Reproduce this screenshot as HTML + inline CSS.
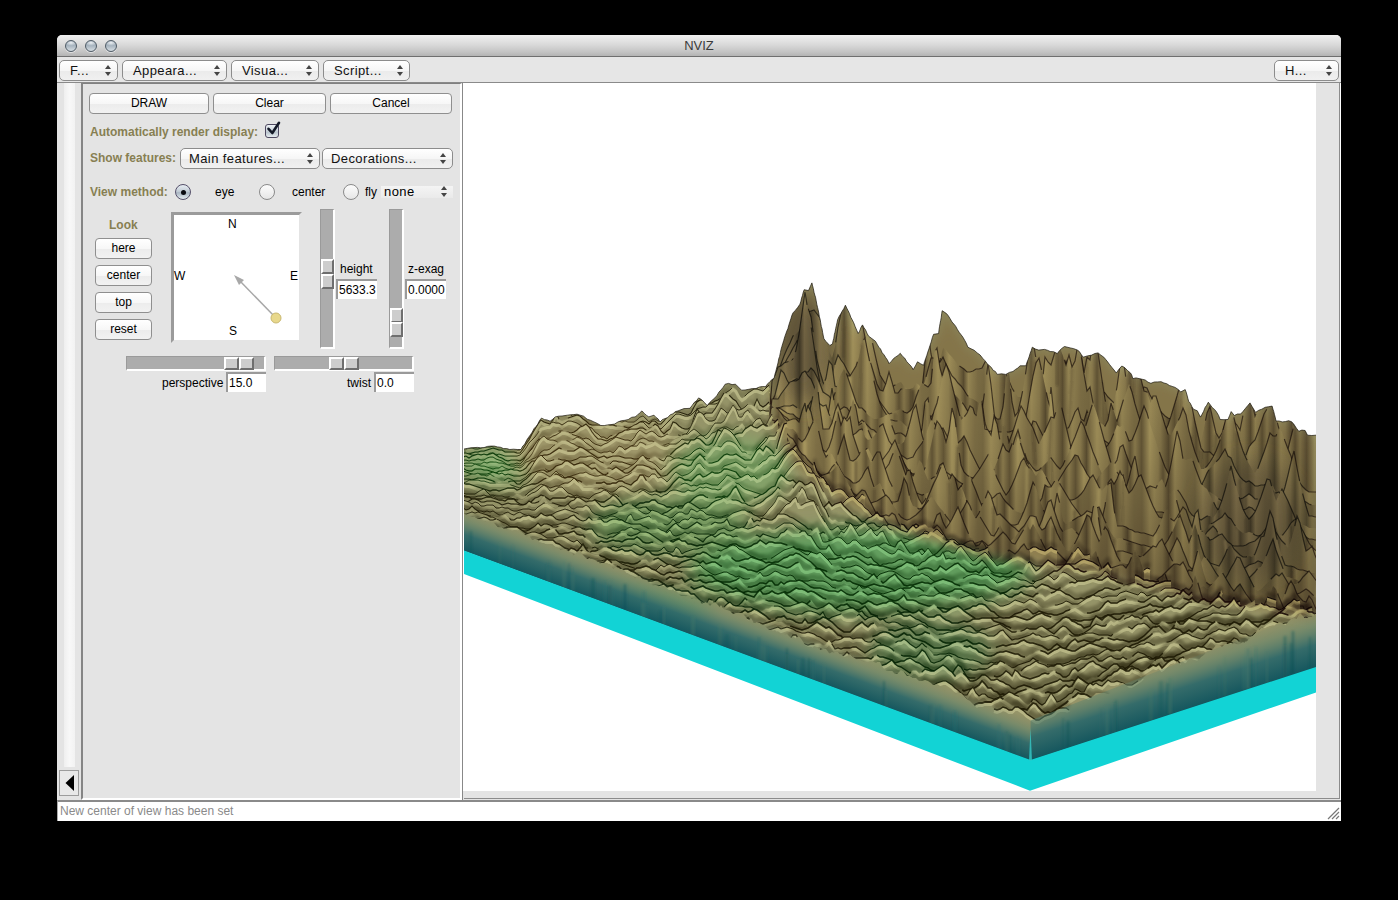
<!DOCTYPE html>
<html><head><meta charset="utf-8">
<style>
*{margin:0;padding:0;box-sizing:border-box}
html,body{width:1398px;height:900px;overflow:hidden;background:#000;font-family:"Liberation Sans",sans-serif}
.a{position:absolute}
#win{left:57px;top:35px;width:1284px;height:786px;background:#e4e4e4;border-radius:5px 5px 0 0}
#title{left:57px;top:35px;width:1284px;height:22px;border-radius:5px 5px 0 0;background:linear-gradient(#f0f0f0,#dadada 45%,#c4c4c4 80%,#b4b4b4);border-bottom:1px solid #6f6f6f}
#title .t{left:0;width:100%;top:3px;text-align:center;font-size:13px;color:#3a3a3a}
.tl{width:12px;height:12px;border-radius:50%;top:5px;background:radial-gradient(ellipse 60% 30% at 50% 18%,#eef2f5 0,rgba(238,242,245,0) 100%),linear-gradient(#8d9caa,#a6b3be 45%,#c9d2d9 85%,#d4dbe0);border:1.5px solid #4f5b66;box-shadow:0 1px 0 rgba(255,255,255,0.5)}
#menubar{left:57px;top:57px;width:1284px;height:26px;background:#e6e6e6;border-bottom:1px solid #8a8a8a}
.mb{height:21px;border:1px solid #8c8c8c;border-radius:5px;background:linear-gradient(#ffffff,#f6f6f6 50%,#ebebeb 52%,#f0f0f0);font-size:13px;color:#111}
.mb span{position:absolute;left:10px;top:2px;letter-spacing:0.4px;white-space:nowrap}
.mb i{position:absolute;right:6px;top:4px;width:0;height:0;border-left:3.5px solid transparent;border-right:3.5px solid transparent;border-bottom:4px solid #444}
.mb b{position:absolute;right:6px;top:11px;width:0;height:0;border-left:3.5px solid transparent;border-right:3.5px solid transparent;border-top:4px solid #444}
.btn{height:21px;border:1px solid #8f8f8f;border-radius:4px;background:linear-gradient(#ffffff,#f7f7f7 50%,#ececec 52%,#f2f2f2);font-size:12px;color:#000;text-align:center;line-height:19px}
.lbl{font-size:12px;font-weight:bold;color:#877f52;white-space:nowrap}
.txt{font-size:12px;color:#000;white-space:nowrap}
.ent{height:20px;background:#fff;border-top:2px solid #9a9a9a;border-left:2px solid #9a9a9a;font-size:12px;color:#000;padding-left:1px;line-height:19px}
.radio{width:16px;height:16px;border-radius:50%;border:1px solid #8a8a8a;background:linear-gradient(#fcfcfc,#e6e6e6)}
.radio.on{border:1.5px solid #55506a;background:linear-gradient(#e8eef3,#c3ccd6 45%,#a9b5c2 55%,#d0d9e0 85%,#e6ecf0)}
.trv{background:#acacac;border-left:1px solid #9a9a9a;border-top:1px solid #9a9a9a;border-right:2px solid #fff;border-bottom:2px solid #fff}
.thumb{background:#cdcdcd;border-left:2px solid #fff;border-top:2px solid #fff;border-right:2px solid #6e6e6e;border-bottom:2px solid #6e6e6e}
</style></head>
<body>
<div id="win" class="a"></div>
<div id="title" class="a">
  <div class="a tl" style="left:8px"></div>
  <div class="a tl" style="left:28px"></div>
  <div class="a tl" style="left:48px"></div>
  <div class="a t">NVIZ</div>
</div>
<div id="menubar" class="a"></div>
<div class="a mb" style="left:59px;top:60px;width:59px"><span>F...</span><i></i><b></b></div>
<div class="a mb" style="left:122px;top:60px;width:105px"><span>Appeara...</span><i></i><b></b></div>
<div class="a mb" style="left:231px;top:60px;width:88px"><span>Visua...</span><i></i><b></b></div>
<div class="a mb" style="left:323px;top:60px;width:87px"><span>Script...</span><i></i><b></b></div>
<div class="a mb" style="left:1274px;top:60px;width:65px"><span>H...</span><i></i><b></b></div>

<!-- left strip -->
<div class="a" style="left:64px;top:83px;width:11px;height:684px;background:linear-gradient(90deg,#efefef,#f8f8f8 50%,#f2f2f2)"></div>
<div class="a" style="left:59px;top:770px;width:20px;height:26px;border:1px solid #9c9c9c;background:#e8e8e8"></div>
<svg class="a" style="left:59px;top:770px" width="20" height="26"><polygon points="6.5,13 15,5 15,21" fill="#000"/></svg>

<!-- panel -->
<div class="a" style="left:81px;top:83px;width:381px;height:717px;border-left:2px solid #858585;border-top:1px solid #808080;border-right:2px solid #fff;border-bottom:2px solid #fff;background:#e4e4e4"></div>
<div class="a btn" style="left:89px;top:93px;width:120px">DRAW</div>
<div class="a btn" style="left:213px;top:93px;width:113px">Clear</div>
<div class="a btn" style="left:330px;top:93px;width:122px">Cancel</div>
<div class="a lbl" style="left:90px;top:125px">Automatically render display:</div>
<div class="a" style="left:265px;top:124px;width:14px;height:14px;border:1.5px solid #4d4860;border-radius:3px;background:linear-gradient(#eef2f5,#c9d2da 50%,#b9c4cd 60%,#e6ecf0)"></div>
<svg class="a" style="left:262px;top:119px" width="22" height="22"><path d="M6.5,9.8 L10.3,14 L17,3.8" fill="none" stroke="#141a28" stroke-width="2.6" stroke-linecap="round" stroke-linejoin="round"/></svg>
<div class="a lbl" style="left:90px;top:151px">Show features:</div>
<div class="a mb" style="left:180px;top:148px;width:140px"><span style="left:8px">Main features...</span><i></i><b></b></div>
<div class="a mb" style="left:322px;top:148px;width:131px"><span style="left:8px">Decorations...</span><i></i><b></b></div>
<div class="a lbl" style="left:90px;top:185px">View method:</div>
<div class="a radio on" style="left:175px;top:184px"></div>
<div class="a" style="left:180.5px;top:189.5px;width:5px;height:5px;border-radius:50%;background:#0a0a10"></div>
<div class="a txt" style="left:215px;top:185px">eye</div>
<div class="a radio" style="left:259px;top:184px"></div>
<div class="a txt" style="left:292px;top:185px">center</div>
<div class="a radio" style="left:343px;top:184px"></div>
<div class="a txt" style="left:365px;top:185px">fly</div>
<div class="a" style="left:381px;top:186px;width:72px;height:12px;background:linear-gradient(#f4f4f4,#eaeaea)"></div>
<div class="a txt" style="left:384px;top:184px;font-size:13px;letter-spacing:0.4px">none</div>
<div class="a mb" style="left:380px;top:182px;width:73px;border:none;background:none"><i></i><b></b></div>

<div class="a lbl" style="left:109px;top:218px">Look</div>
<div class="a btn" style="left:95px;top:238px;width:57px;height:21px">here</div>
<div class="a btn" style="left:95px;top:265px;width:57px;height:21px">center</div>
<div class="a btn" style="left:95px;top:292px;width:57px;height:21px">top</div>
<div class="a btn" style="left:95px;top:319px;width:57px;height:21px">reset</div>

<div class="a" style="left:171px;top:212px;width:131px;height:131px;background:#fff;border-top:3px solid #9b9b9b;border-left:3px solid #9b9b9b;border-right:3px solid #e4e4e4;border-bottom:3px solid #e4e4e4"></div>
<div class="a txt" style="left:228px;top:217px">N</div>
<div class="a txt" style="left:174px;top:269px">W</div>
<div class="a txt" style="left:290px;top:269px">E</div>
<div class="a txt" style="left:229px;top:324px">S</div>
<svg class="a" style="left:171px;top:212px" width="131" height="131"><line x1="105" y1="106" x2="68" y2="68" stroke="#a8a8a8" stroke-width="1.5"/><polygon points="63,63 73,68 68,73" fill="#a8a8a8"/><circle cx="105" cy="106" r="5" fill="#e8d88c" stroke="#c9b870" stroke-width="1"/></svg>

<div class="a trv" style="left:320px;top:209px;width:15px;height:140px"></div>
<div class="a thumb" style="left:321px;top:259px;width:13px;height:15px"></div>
<div class="a thumb" style="left:321px;top:274px;width:13px;height:15px"></div>
<div class="a txt" style="left:340px;top:262px">height</div>
<div class="a ent" style="left:336px;top:279px;width:41px">5633.3</div>

<div class="a trv" style="left:389px;top:209px;width:15px;height:140px"></div>
<div class="a thumb" style="left:390px;top:308px;width:13px;height:15px"></div>
<div class="a thumb" style="left:390px;top:322px;width:13px;height:15px"></div>
<div class="a txt" style="left:408px;top:262px">z-exag</div>
<div class="a ent" style="left:405px;top:279px;width:41px">0.0000</div>

<div class="a trv" style="left:126px;top:356px;width:140px;height:15px"></div>
<div class="a thumb" style="left:224px;top:357px;width:15px;height:13px"></div>
<div class="a thumb" style="left:239px;top:357px;width:15px;height:13px"></div>
<div class="a txt" style="left:162px;top:376px">perspective</div>
<div class="a ent" style="left:226px;top:372px;width:40px">15.0</div>

<div class="a trv" style="left:274px;top:356px;width:140px;height:15px"></div>
<div class="a thumb" style="left:329px;top:357px;width:15px;height:13px"></div>
<div class="a thumb" style="left:344px;top:357px;width:15px;height:13px"></div>
<div class="a txt" style="left:347px;top:376px">twist</div>
<div class="a ent" style="left:374px;top:372px;width:40px">0.0</div>

<!-- canvas -->
<div class="a" style="left:462px;top:83px;width:879px;height:717px;border-left:1px solid #888;border-right:1px solid #fff;background:#e4e4e4"></div>
<div class="a" style="left:1339px;top:83px;width:1px;height:716px;background:#8c8c8c"></div>
<div class="a" style="left:464px;top:798px;width:876px;height:1px;background:#8c8c8c"></div>
<div class="a" style="left:463px;top:83px;width:853px;height:708px;background:#fff"></div>
<svg class="a" style="left:0;top:0" width="1398" height="900" viewBox="0 0 1398 900">
<defs>
<path id="m0" d="M460,489l3 0 3 0 3 0 3-1 3 0 3 0 3 0 3-1 3 0 3 0 3-1 3 0 3 1 3 1 3 0 3 1 3 1 3 0 3 0 3 0 3-4 3-4 3-5 3-5 3-4 3-5 3-4 3 0 3 1 3 1 3-2 3-2 3-1 3 0 3 0 3-1 3 0 3 0 3 0 3 0 3 2 3 1 3 2 3 1 3 2 3 1 3 1 3 0 3 0 3 0 3-1 3-1 3-1 3-1 3-1 3-1 3-1 3-1 3-2 3-2 3-1 3 2 3 3 3-1 3 0 3 4 3 1 3-1 3-2 3-2 3-2 3-2 3-1 3-1 3-1 3 0 3-2 3-4 3-3 3-1 3 3 3 3 3-1 3-3 3-3 3-4 3-4 3-4 3-2 3 0 3 0 3 1 3 3 3 2 3 0 3-1 3 0 3 0 3-1 3 0 3-1 3-1 3-3 3-36 3-4 3-10 3-9 3-8 3-7 3-6 3-7 3-2 3-3 3-6 3-6 3 1 3-4 3 6 3 11 3 13 3 13 3 6 3 3 3 0 3-10 3-10 3-6 3-12 3-9 3-6 3-7 3-7 3-11 3-5 3 18 3 18 3 15 3 14 3 13 3 12 3 5 3 5 3 4 3-2 3-2 3-2 3-1 3 4 3 3 3 3 3 4 3-4 3-2 3-1 3-27 3-31 3 23 3 13 3 0 3-7 3-12 3 2 3 4 3 3 3 4 3 4 3 2 3 2 3 3 3 0 3-1 3-2 3 0 3-1 3-6 3-6 3-8 3-7 3 1 3 11 3 10 3 10 3 8 3 7 3 5 3 4 3 0 3 0 3-2 3-8 3-5 3 1 3 1 3 0 3 0 3 1 3 1 3 1 3 1 3-3 3-2 3-1 3 1 3 1 3 1 3 1 3 3 3 2 3 0 3-1 3-1 3 0 3 0 3 2 3 2 3 4 3 3 3 3 3 2 3-3 3-1 3 2 3 0 3 0 3-2 3-5 3-4 3-5 3 1 3 7 3 5 3 5 3 4 3 4 3 3 3 2 3 1 3 1 3 2 3 2 3-1 3 2 3 8 3 4 3 3 3 2 3-1 3-13 3-15 3-7 3 14 3 13 3 5 3-5 3-9 3-10 3 0 3 8 3 3 3 5 3-15 3-29 3-14 3 30 3 14 3-8 3-10 3-9 3-11 3-9 3 9 3 20 3 10 3 5 3-9 3-2 3 10 3 12 3 12 3-14 3-22 3-5 3 25 3 20 3 16 3 8 3 0-15 192-18-3-18-3-18-3-18-3-18-3-18-3-18-5-18-4-18-5-18-4-18-4-18-5-18-2-18-3-18-2-18-3-18-3-18-2-18-6-18-6-18-5-18-6-18-7-18-9-18-9-18-10-18-13-18-13-18-31-18-55-18 3-18-5-18 17-18 2-18 9-18 8-18-7-18 8-18 4-18-7-18-3-18 6-18 11-18 18-18-4-18 2-18 1z"/><path id="m1" d="M460,489l3 0 3 0 3 0 3-1 3 0 3 0 3 0 3-1 3 0 3 0 3-1 3 0 3 1 3 1 3 0 3 1 3 1 3 0 3 0 3 0 3-4 3-4 3-5 3-5 3-4 3-5 3-4 3 0 3 1 3 1 3-2 3-2 3-1 3 0 3 0 3-1 3 0 3 0 3 0 3 0 3 2 3 1 3 2 3 1 3 2 3 1 3 1 3 0 3 0 3 0 3-1 3-1 3-1 3-1 3-1 3-1 3-1 3-1 3-2 3-2 3-1 3 2 3 3 3-1 3 0 3 4 3 1 3-1 3-2 3-2 3-2 3-2 3-1 3-1 3-1 3 0 3-2 3-4 3-3 3-1 3 3 3 3 3-1 3-3 3-3 3-4 3-4 3-4 3-2 3 0 3 0 3 1 3 3 3 2 3 0 3-1 3 0 3 0 3-1 3 0 3-1 3-1 3-3 3-33 3-3 3-7 3-8 3-7 3-6 3-5 3-6 3-5 3-6 3-11 3-12 3-2 3-1 3-1 3 4 3 4 3 10 3 13 3 10 3 7 3-11 3-20 3-14 3-16 3-11 3-5 3 18 3 18 3-2 3 7 3 15 3 15 3 12 3 10 3 10 3 6 3 1 3-8 3-11 3 10 3 11 3 0 3-4 3 0 3 0 3 0 3-1 3-5 3 2 3 4 3-8 3-12 3-11 3 0 3 6 3-2 3-5 3 7 3 6 3 6 3 3 3 4 3 3 3 4 3 5 3 3 3 1 3 2 3 2 3 3 3 2 3 3 3 2 3 3 3 3 3 0 3-12 3-29 3-6 3 30 3 14 3-4 3-13 3-15 3-20 3-25 3 1 3 19 3 18 3 15 3 10 3 1 3-2 3-5 3-6 3-10 3-10 3-9 3 10 3 9 3-15 3-25 3 13 3 20 3-16 3 3 3-21 3-1 3 21 3 21 3 19 3 15 3-1 3-11 3-15 3-22 3-8 3 22 3-10 3-16 3 8 3 5 3 13 3 12 3 1 3 9 3 7 3 7 3 6 3 6 3 4 3-6 3-9 3-10 3-10 3-11 3-14 3-2 3 21 3 17 3 15 3 13 3 13 3 4 3 0 3 0 3 3 3 3 3 3 3 3 3 0 3 0 3-6 3 3 3 0 3-1 3-2 3-3 3-8 3-4 3-3 3-8 3-9 3-9 3-5 3-1 3-10 3 19 3 12 3 12 3 10 3-2 3-12 3-12 3-13 3-9 3 16 3 2 3-12 3 5 3 14 3 13 3 12-15 203-18-3-18-3-18-3-18-3-18-3-18-3-18-5-18-4-18-5-18-4-18-4-18-5-18-2-18-3-18-2-18-3-18-3-18-2-18-6-18-6-18-5-18-6-18-7-18-9-18-9-18-10-18-13-18-13-18-31-18-55-18 3-18-5-18 17-18 2-18 9-18 8-18-7-18 8-18 4-18-7-18-3-18 6-18 11-18 18-18-4-18 2-18 1z"/><path id="m2" d="M460,489l3 0 3 0 3 0 3-1 3 0 3 0 3 0 3-1 3 0 3 0 3-1 3 0 3 1 3 1 3 0 3 1 3 1 3 0 3 0 3 0 3-4 3-4 3-5 3-5 3-4 3-5 3-4 3 0 3 1 3 1 3-2 3-2 3-1 3 0 3 0 3-1 3 0 3 0 3 0 3 0 3 2 3 1 3 2 3 1 3 2 3 1 3 1 3 0 3 0 3 0 3-1 3-1 3-1 3-1 3-1 3-1 3-1 3-1 3-2 3-2 3-1 3 2 3 3 3-1 3 0 3 4 3 1 3-1 3-2 3-2 3-2 3-2 3-1 3-1 3-1 3 0 3-2 3-4 3-3 3-1 3 3 3 3 3-1 3-3 3-3 3-4 3-4 3-4 3-2 3 0 3 0 3 1 3 3 3 2 3 0 3-1 3 0 3 0 3-1 3 0 3-1 3-1 3-3 3-29 3-2 3-7 3-7 3-6 3-4 3-5 3-4 3-1 3-1 3-12 3-20 3-17 3 9 3 22 3 21 3 12 3 10 3 6 3-1 3-6 3-17 3-9 3 5 3 4 3 6 3 5 3 5 3 5 3-3 3-13 3-9 3 6 3 14 3 12 3 7 3 3 3 4 3 4 3 4 3-1 3-2 3-1 3-1 3 3 3 1 3-2 3-4 3-10 3-8 3-6 3 2 3 2 3-4 3-30 3-5 3 20 3 11 3 6 3 3 3 4 3 3 3 3 3 3 3 4 3 5 3 2 3 2 3 1 3 2 3-7 3-21 3-26 3 22 3 27 3 20 3 0 3 0 3 0 3 0 3-1 3-1 3-2 3-1 3 0 3-2 3-6 3-8 3-5 3-6 3-14 3-29 3 5 3 3 3-10 3-10 3 3 3 8 3 9 3-10 3 12 3-6 3-17 3 11 3 19 3 17 3-4 3 16 3 13 3 6 3 2 3 2 3-6 3-17 3 9 3 9 3-10 3-10 3-8 3-9 3 8 3 12 3 10 3 9 3-2 3-7 3-9 3-9 3 0 3 10 3 9 3 10 3 9 3 1 3-6 3-6 3-6 3-9 3 7 3 16 3 11 3 10 3 8 3 9 3 0 3-3 3-4 3-5 3-6 3-8 3-9 3-12 3-13 3-6 3 15 3 13 3 11 3 9 3 7 3 6 3 5 3 4 3-5 3-8 3-8 3-9 3-10 3 3 3 0 3-8 3 4 3 9 3 8 3 7 3 10 3 9 3 8 3 4 3 3 3 2 3 0 3 0 3 0 3 0-15 164-18-3-18-3-18-3-18-3-18-3-18-3-18-5-18-4-18-5-18-4-18-4-18-5-18-2-18-3-18-2-18-3-18-3-18-2-18-6-18-6-18-5-18-6-18-7-18-9-18-9-18-10-18-13-18-13-18-31-18-55-18 3-18-5-18 17-18 2-18 9-18 8-18-7-18 8-18 4-18-7-18-3-18 6-18 11-18 18-18-4-18 2-18 1z"/><path id="m3" d="M460,489l3 0 3 0 3 0 3-1 3 0 3 0 3 0 3-1 3 0 3 0 3-1 3 0 3 1 3 1 3 0 3 1 3 1 3 0 3 0 3 0 3-4 3-4 3-5 3-5 3-4 3-5 3-4 3 0 3 1 3 1 3-2 3-2 3-1 3 0 3 0 3-1 3 0 3 0 3 0 3 0 3 2 3 1 3 2 3 1 3 2 3 1 3 1 3 0 3 0 3 0 3-1 3-1 3-1 3-1 3-1 3-1 3-1 3-1 3-2 3-2 3-1 3 2 3 3 3-1 3 0 3 4 3 1 3-1 3-2 3-2 3-2 3-2 3-1 3-1 3-1 3 0 3-2 3-4 3-3 3-1 3 3 3 3 3-1 3-3 3-3 3-4 3-4 3-4 3-2 3 0 3 0 3 1 3 3 3 2 3 0 3-1 3 0 3 0 3-1 3 0 3-1 3-1 3-3 3-42 3-6 3-8 3-1 3-3 3-1 3-1 3-1 3-10 3-16 3-21 3-21 3 19 3 15 3 20 3 21 3 16 3 3 3-8 3-17 3 4 3 21 3 1 3-3 3-5 3-3 3 0 3-5 3-5 3-9 3-15 3-4 3 16 3 14 3 13 3 13 3 9 3 6 3 5 3 6 3 0 3 1 3 0 3 0 3 3 3 3 3 3 3 2 3-2 3-1 3 1 3-2 3-5 3-6 3-4 3 0 3-6 3-8 3 2 3 3 3 3 3 3 3 3 3 3 3 3 3 4 3 3 3 1 3 2 3 2 3 2 3 2 3 2 3 3 3 2 3 2 3 0 3 1 3 0 3-1 3 0 3-4 3-5 3-5 3-6 3-13 3-18 3-17 3-13 3-5 3 14 3 14 3 14 3 10 3 6 3 6 3 4 3 2 3 2 3-3 3-7 3-8 3-4 3 11 3 2 3-10 3 8 3 9 3 6 3 3 3 2 3 2 3 2 3 3 3 3 3 1 3-2 3 0 3 1 3 2 3 3 3 2 3 0 3 1 3 1 3 1 3 1 3 0 3 0 3 0 3 1 3 1 3 1 3 1 3 1 3 2 3 1 3 0 3 1 3 6 3 4 3 2 3 2 3 3 3-6 3-7 3-5 3-2 3-4 3-3 3-5 3-5 3 7 3 2 3 8 3 6 3 5 3 3 3 2 3-1 3 2 3 3 3 0 3-1 3 0 3-1 3 0 3 2 3 7 3 1 3 0 3 0 3 1 3 0 3 2 3 3 3 1 3 0 3 1 3 2 3 1 3 0 3 0 3 0-15 151-18-3-18-3-18-3-18-3-18-3-18-3-18-5-18-4-18-5-18-4-18-4-18-5-18-2-18-3-18-2-18-3-18-3-18-2-18-6-18-6-18-5-18-6-18-7-18-9-18-9-18-10-18-13-18-13-18-31-18-55-18 3-18-5-18 17-18 2-18 9-18 8-18-7-18 8-18 4-18-7-18-3-18 6-18 11-18 18-18-4-18 2-18 1z"/><path id="m4" d="M460,489l3 0 3 0 3 0 3-1 3 0 3 0 3 0 3-1 3 0 3 0 3-1 3 0 3 1 3 1 3 0 3 1 3 1 3 0 3 0 3 0 3-4 3-4 3-5 3-5 3-4 3-5 3-4 3 0 3 1 3 1 3-2 3-2 3-1 3 0 3 0 3-1 3 0 3 0 3 0 3 0 3 2 3 1 3 2 3 1 3 2 3 1 3 1 3 0 3 0 3 0 3-1 3-1 3-1 3-1 3-1 3-1 3-1 3-1 3-2 3-2 3-1 3 2 3 3 3-1 3 0 3 4 3 1 3-1 3-2 3-2 3-2 3-2 3-1 3-1 3-1 3 0 3-2 3-4 3-3 3-1 3 3 3 3 3-1 3-3 3-3 3-4 3-4 3-4 3-2 3 0 3 0 3 1 3 3 3 2 3 0 3-1 3 0 3 0 3-1 3 0 3-1 3-1 3-3 3-23 3-1 3-4 3-5 3-4 3-2 3-3 3-3 3 0 3 0 3-3 3-3 3 0 3-4 3 3 3 6 3 7 3 8 3 2 3 2 3 4 3-7 3-11 3-8 3-5 3 6 3 9 3 9 3 9 3 6 3 0 3 3 3 4 3 2 3 2 3 0 3-1 3-1 3-2 3-1 3 12 3 8 3-1 3 0 3 2 3 3 3 3 3 2 3-2 3-1 3-11 3-27 3-4 3 21 3 0 3-9 3-15 3-18 3 11 3 13 3 12 3 10 3 4 3 3 3 3 3 3 3 0 3 0 3-12 3-16 3-6 3 21 3 9 3-1 3 2 3 5 3 4 3 3 3 2 3 2 3 2 3 1 3 1 3-3 3-4 3-6 3-10 3-9 3 1 3 6 3 6 3 4 3-17 3-34 3 29 3 28 3 3 3-2 3 0 3 0 3 1 3 1 3 1 3 2 3 2 3-1 3 0 3 0 3 0 3 0 3-1 3-2 3-3 3-5 3-7 3-8 3 2 3-2 3 8 3 8 3-1 3-7 3-8 3-10 3-9 3 7 3 11 3 9 3 9 3 9 3 8 3 8 3 6 3 4 3 1 3 2 3 1 3 0 3 1 3 6 3 3 3 2 3 2 3 2 3-3 3-3 3 1 3 2 3 2 3 3 3 2 3 0 3 0 3-4 3 2 3 0 3 0 3-1 3-2 3-2 3 2 3 3 3 0 3-1 3-5 3-11 3-2 3 10 3 3 3-1 3 4 3-9 3-12 3-13 3-11 3 17 3 15 3 12 3 11 3 10 3 0 3 1 3 0 3 0-15 139-18-3-18-3-18-3-18-3-18-3-18-3-18-5-18-4-18-5-18-4-18-4-18-5-18-2-18-3-18-2-18-3-18-3-18-2-18-6-18-6-18-5-18-6-18-7-18-9-18-9-18-10-18-13-18-13-18-31-18-55-18 3-18-5-18 17-18 2-18 9-18 8-18-7-18 8-18 4-18-7-18-3-18 6-18 11-18 18-18-4-18 2-18 1z"/><path id="m5" d="M460,489l3 0 3 0 3 0 3-1 3 0 3 0 3 0 3-1 3 0 3 0 3-1 3 0 3 1 3 1 3 0 3 1 3 1 3 0 3 0 3 0 3-4 3-4 3-5 3-5 3-4 3-5 3-4 3 0 3 1 3 1 3-2 3-2 3-1 3 0 3 0 3-1 3 0 3 0 3 0 3 0 3 2 3 1 3 2 3 1 3 2 3 1 3 1 3 0 3 0 3 0 3-1 3-1 3-1 3-1 3-1 3-1 3-1 3-1 3-2 3-2 3-1 3 2 3 3 3-1 3 0 3 4 3 1 3-1 3-2 3-2 3-2 3-2 3-1 3-1 3-1 3 0 3-2 3-4 3-3 3-1 3 3 3 3 3-1 3-3 3-3 3-4 3-4 3-4 3-2 3 0 3 0 3 1 3 3 3 2 3 0 3-1 3 0 3 0 3-1 3 0 3-1 3-1 3-3 3-21 3-7 3-12 3-13 3 3 3 7 3 5 3-4 3-2 3-1 3 1 3 0 3 3 3 1 3 5 3 8 3 8 3 9 3 4 3 3 3 1 3-5 3-5 3-2 3-2 3 1 3 4 3 4 3 4 3 3 3-3 3 3 3 3 3 3 3 1 3 3 3 3 3 3 3 4 3 3 3-1 3 0 3-1 3 0 3-2 3-9 3-11 3-12 3-5 3 15 3 15 3 10 3-10 3-12 3-12 3-8 3-14 3-16 3-9 3 8 3 13 3 12 3 12 3 11 3-3 3-4 3-7 3 2 3 11 3-16 3 1 3 25 3 1 3 5 3-19 3 8 3 17 3-17 3 4 3 14 3-8 3-9 3-10 3-9 3 5 3 7 3 5 3 5 3 8 3 8 3-6 3-7 3-7 3-7 3 1 3-10 3-8 3 13 3 13 3 13 3 12 3 0 3-6 3-6 3-8 3-9 3-10 3-10 3 9 3 10 3 11 3 11 3 10 3 10 3 8 3 6 3-2 3 0 3 1 3 2 3 3 3 1 3 1 3 0 3 1 3 1 3 1 3 0 3 1 3 0 3 0 3 1 3-10 3-14 3-16 3-17 3 10 3 18 3 1 3-1 3-1 3 9 3 8 3 8 3 4 3 2 3 6 3 6 3 6 3 4 3 2 3 0 3 0 3-3 3 1 3 0 3 0 3-1 3-1 3-2 3 1 3 3 3 0 3 0 3 0 3-1 3 0 3 2 3 6 3 0 3 1 3 0 3 0 3 0 3 2 3 3 3 1 3 0 3 1 3 2 3 0 3 0 3 0 3 0-15 128-18-3-18-3-18-3-18-3-18-3-18-3-18-5-18-4-18-5-18-4-18-4-18-5-18-2-18-3-18-2-18-3-18-3-18-2-18-6-18-6-18-5-18-6-18-7-18-9-18-9-18-10-18-13-18-13-18-31-18-55-18 3-18-5-18 17-18 2-18 9-18 8-18-7-18 8-18 4-18-7-18-3-18 6-18 11-18 18-18-4-18 2-18 1z"/><path id="m6" d="M460,489l3 0 3 0 3 0 3-1 3 0 3 0 3 0 3-1 3 0 3 0 3-1 3 0 3 1 3 1 3 0 3 1 3 1 3 0 3 0 3 0 3-4 3-4 3-5 3-5 3-4 3-5 3-4 3 0 3 1 3 1 3-2 3-2 3-1 3 0 3 0 3-1 3 0 3 0 3 0 3 0 3 2 3 1 3 2 3 1 3 2 3 1 3 1 3 0 3 0 3 0 3-1 3-1 3-1 3-1 3-1 3-1 3-1 3-1 3-2 3-2 3-1 3 2 3 3 3-1 3 0 3 4 3 1 3-1 3-2 3-2 3-2 3-2 3-1 3-1 3-1 3 0 3-2 3-4 3-3 3-1 3 3 3 3 3-1 3-3 3-3 3-4 3-4 3-4 3-2 3 0 3 0 3 1 3 3 3 2 3 0 3-1 3 0 3 0 3-1 3 0 3-1 3-1 3-3 3-24 3 0 3 0 3-5 3-4 3-4 3-4 3-1 3 0 3-2 3-6 3-2 3 5 3 3 3 7 3 11 3 11 3 10 3 7 3-16 3-21 3 20 3 13 3-1 3-1 3-1 3-8 3-11 3 9 3 17 3-2 3-1 3 8 3 7 3 4 3 3 3 3 3 3 3 3 3 3 3 0 3-1 3 0 3 0 3 2 3 2 3-1 3-1 3-6 3-4 3-4 3-6 3-9 3-8 3 2 3 6 3 1 3-1 3 6 3 6 3 6 3-1 3-2 3-3 3-4 3 6 3 8 3 6 3 6 3 6 3 3 3 1 3 2 3 2 3 2 3 1 3 1 3-4 3-7 3-9 3-11 3-11 3-8 3 11 3 10 3 9 3 4 3 4 3 3 3-1 3-3 3-3 3-3 3-3 3 4 3 4 3 3 3-4 3-7 3-6 3-8 3-7 3-8 3-8 3 5 3 9 3 8 3 9 3 7 3 8 3 7 3 0 3-3 3-3 3-3 3-5 3-13 3-2 3 9 3 8 3 8 3 7 3 6 3 5 3 1 3-1 3-2 3 1 3 1 3-6 3-3 3 7 3 6 3 3 3-3 3-3 3 4 3 5 3 5 3 8 3 4 3 2 3 1 3 2 3-2 3-2 3 0 3 2 3-4 3-6 3-8 3-10 3-11 3-13 3 13 3 11 3 10 3 9 3 6 3 4 3-3 3-4 3-7 3-8 3-9 3-9 3 1 3 11 3 10 3-6 3-6 3 6 3 6 3 7 3 7 3 8 3 6 3 4 3 4 3 2 3 0 3 1 3 0 3 0-15 116-18-3-18-3-18-3-18-3-18-3-18-3-18-5-18-4-18-5-18-4-18-4-18-5-18-2-18-3-18-2-18-3-18-3-18-2-18-6-18-6-18-5-18-6-18-7-18-9-18-9-18-10-18-13-18-13-18-31-18-55-18 3-18-5-18 17-18 2-18 9-18 8-18-7-18 8-18 4-18-7-18-3-18 6-18 11-18 18-18-4-18 2-18 1z"/><path id="m7" d="M460,489l3 0 3 0 3 0 3-1 3 0 3 0 3 0 3-1 3 0 3 0 3-1 3 0 3 1 3 1 3 0 3 1 3 1 3 0 3 0 3 0 3-4 3-4 3-5 3-5 3-4 3-5 3-4 3 0 3 1 3 1 3-2 3-2 3-1 3 0 3 0 3-1 3 0 3 0 3 0 3 0 3 2 3 1 3 2 3 1 3 2 3 1 3 1 3 0 3 0 3 0 3-1 3-1 3-1 3-1 3-1 3-1 3-1 3-1 3-2 3-2 3-1 3 2 3 3 3-1 3 0 3 4 3 1 3-1 3-2 3-2 3-2 3-2 3-1 3-1 3-1 3 0 3-2 3-4 3-3 3-1 3 3 3 3 3-1 3-3 3-3 3-4 3-4 3-4 3-2 3 0 3 0 3 1 3 3 3 2 3 0 3-1 3 0 3 0 3-1 3 0 3-1 3-1 3-3 3-14 3 1 3-2 3-1 3-1 3 0 3 0 3-1 3 2 3 2 3-1 3-2 3 0 3-5 3 0 3 1 3 2 3 2 3-1 3 9 3 6 3 2 3 1 3 4 3 2 3 3 3 3 3 0 3-2 3-3 3-1 3 8 3 3 3-1 3-3 3-4 3-6 3-2 3 9 3 8 3 4 3 4 3 4 3 4 3 6 3 5 3 4 3 2 3-1 3 0 3 1 3-6 3-11 3-12 3-13 3-11 3 4 3 6 3 11 3-11 3-23 3 11 3 25 3 21 3 7 3 3 3 2 3 1 3 1 3 2 3 2 3 1 3-3 3-5 3-7 3-7 3-9 3-9 3 6 3 2 3-8 3 2 3-10 3 9 3 9 3 8 3 4 3 5 3 7 3 6 3 1 3 0 3 1 3 1 3-2 3-2 3-5 3-5 3-5 3-4 3-4 3-5 3 1 3 7 3 5 3 6 3 4 3 5 3-2 3-5 3-3 3-4 3-3 3-4 3 3 3 7 3 5 3-2 3 13 3-10 3-13 3-9 3 17 3 15 3 13 3 9 3 1 3 0 3 1 3 0 3 0 3 1 3 1 3 1 3 1 3 2 3 1 3 0 3 1 3 4 3 3 3 1 3 2 3 2 3-2 3-3 3-3 3-1 3-2 3-2 3-2 3-4 3 4 3 2 3 5 3 4 3 3 3 2 3 0 3-1 3 1 3 2 3 1 3-1 3 0 3-1 3-7 3-8 3 7 3 9 3 1 3-4 3-4 3-5 3-3 3-1 3 7 3 5 3 6 3 6 3 4 3 3 3 1 3 0-15 105-18-3-18-3-18-3-18-3-18-3-18-3-18-5-18-4-18-5-18-4-18-4-18-5-18-2-18-3-18-2-18-3-18-3-18-2-18-6-18-6-18-5-18-6-18-7-18-9-18-9-18-10-18-13-18-13-18-31-18-55-18 3-18-5-18 17-18 2-18 9-18 8-18-7-18 8-18 4-18-7-18-3-18 6-18 11-18 18-18-4-18 2-18 1z"/><path id="m8" d="M460,489l3 0 3 0 3 0 3-1 3 0 3 0 3 0 3-1 3 0 3 0 3-1 3 0 3 1 3 1 3 0 3 1 3 1 3 0 3 0 3 0 3-4 3-4 3-5 3-5 3-4 3-5 3-4 3 0 3 1 3 1 3-2 3-2 3-1 3 0 3 0 3-1 3 0 3 0 3 0 3 0 3 2 3 1 3 2 3 1 3 2 3 1 3 1 3 0 3 0 3 0 3-1 3-1 3-1 3-1 3-1 3-1 3-1 3-1 3-2 3-2 3-1 3 2 3 3 3-1 3 0 3 4 3 1 3-1 3-2 3-2 3-2 3-2 3-1 3-1 3-1 3 0 3-2 3-4 3-3 3-1 3 3 3 3 3-1 3-3 3-3 3-4 3-4 3-4 3-2 3 0 3 0 3 1 3 3 3 2 3 0 3-1 3 0 3 0 3-1 3 0 3-1 3-1 3-3 3-13 3 0 3-2 3 1 3 2 3 2 3 1 3 0 3 3 3 2 3-1 3-1 3 2 3-14 3-15 3-9 3 27 3 21 3 0 3 0 3-6 3-12 3-7 3 9 3 9 3 9 3 10 3 8 3 4 3 2 3-1 3 3 3 2 3 2 3 2 3 0 3-2 3-2 3-4 3-4 3-6 3-5 3 8 3 7 3 8 3 8 3 1 3 4 3-5 3-11 3 3 3 10 3 7 3-1 3-2 3 0 3-2 3-4 3 1 3 2 3 2 3 2 3 3 3 2 3 2 3-1 3-3 3-3 3-4 3-4 3-5 3-5 3-5 3 8 3 7 3 8 3 6 3 6 3 5 3-4 3-6 3-7 3-8 3-8 3-4 3 7 3 4 3 3 3 4 3-4 3-2 3 5 3 6 3 5 3 5 3 4 3 3 3 1 3 0 3 1 3 0 3-1 3-2 3-3 3-4 3-6 3-6 3-3 3 6 3 6 3 4 3-4 3-4 3-4 3 5 3-5 3-8 3 7 3 8 3 7 3-3 3-6 3-7 3-2 3 8 3 8 3 8 3 7 3 6 3 5 3 1 3-7 3-8 3-10 3-3 3 12 3 11 3 0 3 10 3 11 3 4 3 2 3 1 3 0 3-4 3-5 3-3 3-3 3 3 3 6 3 5 3 3 3 3 3-1 3 1 3 0 3 0 3 0 3-1 3-2 3-1 3-1 3-3 3-3 3-4 3-4 3-4 3 1 3 8 3 5 3 4 3 3 3 4 3-7 3-11 3-14 3 7 3 15 3 13 3-2 3-3 3 9 3 7 3 0-15 94-18-3-18-3-18-3-18-3-18-3-18-3-18-5-18-4-18-5-18-4-18-4-18-5-18-2-18-3-18-2-18-3-18-3-18-2-18-6-18-6-18-5-18-6-18-7-18-9-18-9-18-10-18-13-18-13-18-31-18-55-18 3-18-5-18 17-18 2-18 9-18 8-18-7-18 8-18 4-18-7-18-3-18 6-18 11-18 18-18-4-18 2-18 1z"/><path id="m9" d="M460,489l3 0 3 0 3 0 3-1 3 0 3 0 3 0 3-1 3 0 3 0 3-1 3 0 3 1 3 1 3 0 3 1 3 1 3 0 3 0 3 0 3-4 3-4 3-5 3-5 3-4 3-5 3-4 3 0 3 1 3 1 3-2 3-2 3-1 3 0 3 0 3-1 3 0 3 0 3 0 3 0 3 2 3 1 3 2 3 1 3 2 3 1 3 1 3 0 3 0 3 0 3-1 3-1 3-1 3-1 3-1 3-1 3-1 3-1 3-2 3-2 3-1 3 2 3 3 3-1 3 0 3 4 3 1 3-1 3-2 3-2 3-2 3-2 3-1 3-1 3-1 3 0 3-2 3-4 3-3 3-1 3 3 3 3 3-1 3-3 3-3 3-4 3-4 3-4 3-2 3 0 3 0 3 1 3 3 3 2 3 0 3-1 3 0 3 0 3-1 3 0 3-1 3-1 3-3 3-16 3 2 3 2 3 2 3 3 3 2 3 3 3 2 3 3 3 3 3-5 3-9 3-9 3 6 3 13 3 13 3 7 3 5 3 2 3-5 3-9 3-14 3-11 3 12 3-8 3 4 3-4 3 18 3 9 3 9 3-1 3-2 3-2 3 6 3 6 3 6 3 6 3 0 3-4 3-4 3-8 3-7 3 3 3 9 3 9 3 8 3 8 3 7 3 0 3 1 3 1 3-1 3-1 3-2 3-2 3 1 3-2 3-3 3 1 3 2 3 2 3 2 3 1 3 2 3 2 3 3 3 1 3 1 3 2 3 1 3-1 3-1 3-2 3-2 3-2 3-3 3-1 3 5 3 4 3 3 3 3 3 3 3 1 3 1 3 0 3 0 3-3 3-2 3-2 3-3 3-5 3-13 3 2 3 0 3-5 3-3 3 5 3 5 3 5 3 5 3 5 3 4 3 4 3 4 3 1 3 0 3 0 3 0 3 1 3 0 3 1 3-13 3-22 3-1 3 26 3 17 3 0 3 0 3 1 3 2 3 1 3 2 3 0 3 1 3 0 3 1 3 1 3 1 3-4 3-6 3-7 3-8 3-2 3 10 3 2 3-4 3-5 3-5 3 3 3 9 3 8 3-13 3-4 3 21 3 2 3 3 3 4 3-1 3-2 3-2 3-1 3 4 3 4 3 2 3 5 3 3 3 3 3 2 3 0 3-1 3 1 3-3 3-8 3-9 3-1 3-12 3-13 3 7 3 17 3 12 3 10 3 8 3 1 3 0 3 1 3 2 3 1 3 0 3 1 3 1 3 1 3 0 3 0 3 0-15 83-18-3-18-3-18-3-18-3-18-3-18-3-18-5-18-4-18-5-18-4-18-4-18-5-18-2-18-3-18-2-18-3-18-3-18-2-18-6-18-6-18-5-18-6-18-7-18-9-18-9-18-10-18-13-18-13-18-31-18-55-18 3-18-5-18 17-18 2-18 9-18 8-18-7-18 8-18 4-18-7-18-3-18 6-18 11-18 18-18-4-18 2-18 1z"/><path id="m10" d="M460,489l3 0 3 0 3 0 3-1 3 0 3 0 3 0 3-1 3 0 3 0 3-1 3 0 3 1 3 1 3 0 3 1 3 1 3 0 3 0 3 0 3-4 3-4 3-5 3-5 3-4 3-5 3-4 3 0 3 1 3 1 3-2 3-2 3-1 3 0 3 0 3-1 3 0 3 0 3 0 3 0 3 2 3 1 3 2 3 1 3 2 3 1 3 1 3 0 3 0 3 0 3-1 3-1 3-1 3-1 3-1 3-1 3-1 3-1 3-2 3-2 3-1 3 2 3 3 3-1 3 0 3 4 3 1 3-1 3-2 3-2 3-2 3-2 3-1 3-1 3-1 3 0 3-2 3-4 3-3 3-1 3 3 3 3 3-1 3-3 3-3 3-4 3-4 3-4 3-2 3 0 3 0 3 1 3 3 3 2 3 0 3-1 3 0 3 0 3-1 3 0 3-1 3-1 3-3 3-15 3-1 3 2 3 4 3 5 3 3 3-1 3-1 3 0 3 3 3-11 3-8 3 21 3 13 3 6 3 6 3 6 3 5 3 3 3 2 3 2 3-4 3-9 3-10 3-9 3 13 3 12 3 1 3-2 3-4 3-5 3-2 3 8 3 7 3-6 3-5 3 0 3 10 3 9 3 9 3 6 3 6 3 2 3-7 3-7 3-9 3-1 3 12 3 9 3 8 3 5 3-4 3-6 3-7 3-7 3-7 3-8 3-2 3 9 3 8 3 8 3 6 3-3 3-5 3-4 3-4 3-2 3 8 3 7 3 8 3 7 3 6 3 5 3 4 3 1 3 2 3 0 3 0 3 1 3 0 3 0 3 0 3-1 3-6 3-7 3-8 3-11 3-10 3 6 3 10 3 8 3 8 3 6 3-4 3-5 3-18 3 11 3 17 3 3 3-2 3-1 3-2 3-2 3-1 3-2 3-3 3 1 3 1 3-5 3-1 3 7 3 7 3 6 3 6 3 4 3 2 3-1 3 1 3 1 3 1 3 1 3 1 3 1 3 1 3 0 3 1 3 1 3 1 3 0 3 1 3-1 3-4 3-4 3-6 3-6 3-7 3-6 3 9 3 8 3 10 3-8 3-10 3 10 3 12 3 9 3 6 3 2 3 1 3 1 3 1 3-5 3-6 3-8 3-2 3 9 3 8 3 6 3 1 3-2 3-2 3-1 3-1 3-2 3 1 3 2 3 3 3 2 3 2 3 4 3 1 3 0 3 1 3 0 3 1 3 1 3 1 3 1 3 0 3 1 3 1 3 0 3 1 3 0 3 0-15 72-18-3-18-3-18-3-18-3-18-3-18-3-18-5-18-4-18-5-18-4-18-4-18-5-18-2-18-3-18-2-18-3-18-3-18-2-18-6-18-6-18-5-18-6-18-7-18-9-18-9-18-10-18-13-18-13-18-31-18-55-18 3-18-5-18 17-18 2-18 9-18 8-18-7-18 8-18 4-18-7-18-3-18 6-18 11-18 18-18-4-18 2-18 1z"/><path id="m11" d="M460,489l3 0 3 0 3 0 3-1 3 0 3 0 3 0 3-1 3 0 3 0 3-1 3 0 3 1 3 1 3 0 3 1 3 1 3 0 3 0 3 0 3-4 3-4 3-5 3-5 3-4 3-5 3-4 3 0 3 1 3 1 3-2 3-2 3-1 3 0 3 0 3-1 3 0 3 0 3 0 3 0 3 2 3 1 3 2 3 1 3 2 3 1 3 1 3 0 3 0 3 0 3-1 3-1 3-1 3-1 3-1 3-1 3-1 3-1 3-2 3-2 3-1 3 2 3 3 3-1 3 0 3 4 3 1 3-1 3-2 3-2 3-2 3-2 3-1 3-1 3-1 3 0 3-2 3-4 3-3 3-1 3 3 3 3 3-1 3-3 3-3 3-4 3-4 3-4 3-2 3 0 3 0 3 1 3 3 3 2 3 0 3-1 3 0 3 0 3-1 3 0 3-1 3-1 3-3 3-6 3 4 3 3 3 2 3 1 3 1 3 1 3 0 3 3 3 7 3 3 3-3 3-6 3-7 3-6 3 4 3 13 3 13 3 7 3-4 3 1 3 6 3 5 3 6 3 5 3 2 3 2 3 3 3 0 3-2 3-4 3-6 3-4 3 11 3 9 3-2 3-2 3 7 3 7 3 5 3 0 3 0 3-1 3-10 3-13 3 6 3 15 3 7 3 1 3 2 3-1 3-4 3-7 3-7 3-7 3-6 3-8 3-5 3 8 3 9 3-7 3 4 3 12 3-4 3 7 3 9 3 9 3 7 3 0 3-5 3-7 3-7 3-8 3 5 3 10 3 9 3-1 3 3 3 3 3 3 3 3 3 2 3 3 3 2 3 2 3 1 3-1 3-1 3-1 3-6 3-7 3-9 3-9 3-2 3 10 3 9 3 8 3 5 3-2 3-1 3-1 3 3 3 3 3 2 3 3 3 2 3-13 3-20 3-8 3 22 3 18 3 6 3 1 3 1 3 2 3 1 3 0 3 0 3 1 3 1 3 1 3 1 3 1 3 1 3 0 3 1 3 1 3 1 3 0 3 1 3 0 3-1 3-4 3-5 3-6 3-7 3 5 3 8 3 7 3 8 3 3 3-2 3-2 3-3 3-5 3 2 3 4 3 5 3 5 3 4 3 2 3 0 3 0 3 0 3 1 3 0 3 0 3 0 3 0 3-2 3-3 3-3 3-4 3-1 3-6 3-7 3-8 3-7 3 11 3 8 3 8 3 8 3 6 3 1 3 3 3 0 3-3 3-4 3-3 3-3 3 4 3 4 3 4 3 4-15 69-18-3-18-3-18-3-18-3-18-3-18-3-18-5-18-4-18-5-18-4-18-4-18-5-18-2-18-3-18-2-18-3-18-3-18-2-18-6-18-6-18-5-18-6-18-7-18-9-18-9-18-10-18-13-18-13-18-31-18-55-18 3-18-5-18 17-18 2-18 9-18 8-18-7-18 8-18 4-18-7-18-3-18 6-18 11-18 18-18-4-18 2-18 1z"/><path id="m12" d="M460,489l3 0 3 0 3 0 3-1 3 0 3 0 3 0 3-1 3 0 3 0 3-1 3 0 3 1 3 1 3 0 3 1 3 1 3 0 3 0 3 0 3-4 3-4 3-5 3-5 3-4 3-5 3-4 3 0 3 1 3 1 3-2 3-2 3-1 3 0 3 0 3-1 3 0 3 0 3 0 3 0 3 2 3 1 3 2 3 1 3 2 3 1 3 1 3 0 3 0 3 0 3-1 3-1 3-1 3-1 3-1 3-1 3-1 3-1 3-2 3-2 3-1 3 2 3 3 3-1 3 0 3 4 3 1 3-1 3-2 3-2 3-2 3-2 3-1 3-1 3-1 3 0 3-2 3-4 3-3 3-1 3 3 3 3 3-1 3-3 3-3 3-4 3-4 3-4 3-2 3 0 3 0 3 1 3 3 3 2 3 0 3-1 3 0 3 0 3-1 3 0 3-1 3-1 3-3 3-7 3 1 3 1 3 3 3 7 3 6 3 3 3 2 3 5 3 6 3 4 3 2 3 4 3 3 3 3 3 4 3 4 3 2 3-1 3-3 3-5 3-3 3 7 3 7 3 6 3 5 3 2 3 2 3 2 3 2 3 1 3 2 3 2 3 1 3-1 3-1 3-2 3-2 3-2 3 3 3 5 3 5 3 5 3 4 3 2 3 1 3-1 3-2 3-2 3-3 3-3 3-4 3-4 3-4 3 2 3 5 3 4 3 3 3 5 3 4 3 5 3-4 3-4 3-5 3-5 3-6 3 5 3 8 3 5 3-4 3 5 3 5 3 5 3 5 3 1 3-5 3-6 3 6 3 7 3 4 3-2 3-3 3-4 3-4 3-3 3-5 3-5 3 0 3 1 3 9 3 4 3-2 3-6 3-5 3 8 3 8 3 6 3 6 3 5 3 1 3-3 3-5 3-6 3-7 3-7 3-8 3 2 3 9 3 8 3 7 3-7 3-7 3 4 3 9 3 8 3 8 3 5 3 2 3 1 3 0 3 0 3-2 3-2 3-3 3-2 3-3 3-3 3-3 3 1 3-5 3-3 3 7 3 6 3 6 3 6 3 5 3 5 3 2 3-3 3-3 3 1 3-10 3-12 3 13 3 12 3 9 3 2 3-1 3 0 3-1 3-1 3-3 3-5 3-6 3-5 3-6 3 1 3 7 3 6 3 6 3 6 3 6 3 2 3-2 3-3 3-3 3-3 3-3 3-3 3 2 3-3 3 5 3 5 3 4 3 5 3 2 3-1 3-2 3-2 3 2 3 3 3 3 3 2 3 2-15 55-18-3-18-3-18-3-18-3-18-3-18-3-18-5-18-4-18-5-18-4-18-4-18-5-18-2-18-3-18-2-18-3-18-3-18-2-18-6-18-6-18-5-18-6-18-7-18-9-18-9-18-10-18-13-18-13-18-31-18-55-18 3-18-5-18 17-18 2-18 9-18 8-18-7-18 8-18 4-18-7-18-3-18 6-18 11-18 18-18-4-18 2-18 1z"/><path id="m13" d="M460,489l3 0 3 0 3 0 3-1 3 0 3 0 3 0 3-1 3 0 3 0 3-1 3 0 3 1 3 1 3 0 3 1 3 1 3 0 3 0 3 0 3-4 3-4 3-5 3-5 3-4 3-5 3-4 3 0 3 1 3 1 3-2 3-2 3-1 3 0 3 0 3-1 3 0 3 0 3 0 3 0 3 2 3 1 3 2 3 1 3 2 3 1 3 1 3 0 3 0 3 0 3-1 3-1 3-1 3-1 3-1 3-1 3-1 3-1 3-2 3-2 3-1 3 2 3 3 3-1 3 0 3 4 3 1 3-1 3-2 3-2 3-2 3-2 3-1 3-1 3-1 3 0 3-2 3-4 3-3 3-1 3 3 3 3 3-1 3-3 3-3 3-4 3-4 3-4 3-2 3 0 3 0 3 1 3 3 3 2 3 0 3-1 3 0 3 0 3-1 3 0 3-1 3-1 3-3 3-3 3 1 3 2 3 9 3 8 3 6 3 5 3 5 3 5 3 5 3 3 3 2 3 1 3 0 3 1 3 2 3 1 3-1 3-1 3-1 3-2 3-3 3-3 3 6 3 5 3 6 3 5 3 6 3 5 3 5 3 3 3 4 3 2 3 1 3 2 3 1 3 0 3 0 3-1 3 1 3-3 3 2 3 7 3 5 3 2 3 1 3 2 3 1 3 0 3 1 3 1 3 1 3-1 3-5 3-7 3-8 3-2 3 9 3 6 3-4 3-5 3-6 3-6 3 8 3 8 3 7 3 7 3 6 3 0 3-1 3-1 3 2 3 3 3-2 3-3 3-3 3-3 3-3 3 3 3 4 3 4 3 1 3-5 3-5 3-5 3-5 3 6 3-6 3 5 3 6 3 7 3 6 3 5 3 3 3-3 3-1 3 3 3 3 3 3 3 2 3 1 3 1 3 0 3 1 3 0 3 1 3-5 3-8 3-3 3 11 3 7 3 0 3 0 3-1 3-1 3-1 3-1 3 0 3 3 3-5 3-7 3-7 3 6 3 8 3 8 3 7 3 4 3 0 3-1 3-3 3-2 3-3 3-3 3-3 3-3 3 0 3 1 3-3 3 6 3 7 3 5 3 6 3 3 3-2 3-1 3 3 3-2 3-4 3-3 3-4 3-4 3 5 3 5 3 5 3 4 3-4 3-3 3 5 3 5 3 4 3 4 3 2 3 1 3 0 3 1 3 0 3 1 3 0 3 0 3-1 3-4 3-8 3-8 3-5 3 5 3 8 3 4 3 3 3 1 3-6 3 4 3 7 3 5 3 4-15 40-18-3-18-3-18-3-18-3-18-3-18-3-18-5-18-4-18-5-18-4-18-4-18-5-18-2-18-3-18-2-18-3-18-3-18-2-18-6-18-6-18-5-18-6-18-7-18-9-18-9-18-10-18-13-18-13-18-31-18-55-18 3-18-5-18 17-18 2-18 9-18 8-18-7-18 8-18 4-18-7-18-3-18 6-18 11-18 18-18-4-18 2-18 1z"/><path id="m14" d="M460,489l3 0 3 0 3 0 3-1 3 0 3 0 3 0 3-1 3 0 3 0 3-1 3 0 3 1 3 1 3 0 3 1 3 1 3 0 3 0 3 0 3-4 3-4 3-5 3-5 3-4 3-5 3-4 3 0 3 1 3 1 3-2 3-2 3-1 3 0 3 0 3-1 3 0 3 0 3 0 3 0 3 2 3 1 3 2 3 1 3 2 3 1 3 1 3 0 3 0 3 0 3-1 3-1 3-1 3-1 3-1 3-1 3-1 3-1 3-2 3-2 3-1 3 2 3 3 3-1 3 0 3 4 3 1 3-1 3-2 3-2 3-2 3-2 3-1 3-1 3-1 3 0 3-2 3-4 3-3 3-1 3 3 3 3 3-1 3-3 3-3 3-4 3-4 3-4 3-2 3 0 3 0 3 1 3 3 3 2 3 0 3-1 3 0 3 0 3-1 3 0 3-1 3-1 3-3 3 5 3 5 3 2 3 1 3 1 3 1 3 9 3 10 3 5 3 3 3 4 3 5 3 4 3 4 3 4 3 4 3 3 3 2 3 3 3 2 3 2 3 2 3 2 3 1 3-1 3-2 3-2 3-3 3-3 3-3 3-3 3 1 3 6 3 6 3 6 3 6 3 2 3-1 3 5 3 4 3 3 3-1 3-1 3-1 3-1 3 2 3 3 3 4 3 2 3 2 3 1 3-2 3-3 3-2 3-3 3-3 3 3 3 5 3 5 3 4 3 5 3 2 3-3 3 0 3-2 3-2 3-1 3 0 3 5 3-1 3-4 3 4 3 6 3 5 3 5 3-2 3-2 3-2 3-2 3-3 3 2 3 2 3-3 3-4 3-3 3 5 3 1 3-3 3 1 3 4 3 5 3 3 3 4 3 3 3 4 3 2 3-2 3-4 3-4 3-5 3-5 3 6 3 6 3 4 3-4 3-4 3 4 3 5 3 5 3 5 3 2 3 1 3 1 3 0 3 1 3 1 3 0 3 0 3-1 3-1 3-1 3-1 3-1 3-1 3 0 3 2 3 1 3-1 3-2 3 2 3 1 3-9 3 8 3 9 3 3 3-2 3-1 3-1 3-2 3 2 3-4 3-11 3 8 3 11 3 9 3 2 3 0 3-2 3-1 3 3 3 2 3 2 3 2 3 1 3 0 3 1 3 0 3 1 3 0 3 1 3 0 3 1 3-2 3-4 3-5 3-6 3-6 3-7 3 3 3 8 3 7 3 7 3 3 3-1 3-2 3-2 3-3 3 0 3 8 3 4 3 2 3-1 3-13 3 1-15 49-18-3-18-3-18-3-18-3-18-3-18-3-18-5-18-4-18-5-18-4-18-4-18-5-18-2-18-3-18-2-18-3-18-3-18-2-18-6-18-6-18-5-18-6-18-7-18-9-18-9-18-10-18-13-18-13-18-31-18-55-18 3-18-5-18 17-18 2-18 9-18 8-18-7-18 8-18 4-18-7-18-3-18 6-18 11-18 18-18-4-18 2-18 1z"/><path id="r0" d="M556,410l3-1 3-3 3-3 3 2 3 3 3 2M601,418l3 2 3 1 3 0 3 2 3-1 3-3 3-2 3-2 3-1 3 0 3-3 3-5 3 0 3 1 3 5 3 4 3-2 3-1 3 2M688,401l3-2 3-1 3-1 3 1 3 0 3 2M754,372l3 5 3 2 3 1 3 0 3-1"/><path id="r1" d="M466,449l3-1 3 0 3 1 3 0 3-1 3-1 3 0 3 0 3-1M517,450l3 0 3-4 3-4 3-4 3-4 3-4 3-6 3-7 3-1 3 0 3-2 3-1 3-1 3-3 3-2 3 3 3 3 3 2 3 3 3 0 3-1M598,422l3 1 3-1 3-2 3 0 3 0 3 1 3 0 3 1 3-1 3 1 3 0 3 0 3-2 3-3 3-1 3 3 3 3 3-2 3-1 3 2 3 0 3-3 3-4 3-4 3-3 3-1 3-2 3-1 3-2 3 2 3 1 3-1 3-2 3-1 3 1 3 0 3-3 3-6M748,393l3 2 3 0 3-1 3 0 3-1 3-1 3-3"/><path id="r2" d="M460,455l3-1 3 0 3 0 3-1 3-1 3 0 3-1 3 0 3-1 3-1 3-1 3 1 3 1 3 0 3 2 3 0 3 0 3 0 3 1 3 0 3-4 3-5 3-4 3-6 3-5 3-5 3-4 3 2 3 1 3 1 3-4 3-7 3 6 3 1 3-1 3-1 3-1 3-1 3-1 3 1 3 3 3 2 3 3 3 1 3 0 3 0 3 0 3-2 3 1 3 1 3 0 3 1 3 0 3 0 3 1 3 1 3-1 3 0 3-3 3-2 3-1 3 1 3 2 3-3 3 0 3 3 3 0 3-3 3-4 3-3 3-3 3 1 3 0 3 1 3 1 3 1 3-2 3-6 3-5 3-2 3 0 3 3 3 0 3 0 3-2 3-1 3-2 3-2 3 0 3 0 3 0 3 1 3 2 3 3 3-2 3-2 3-3 3-2 3-5 3-6 3 1 3 4 3 1"/><path id="r3" d="M460,454l3-1 3 0 3 1 3 1 3 0 3 0 3 0 3 0 3 0 3-2 3 0 3 2 3-1 3 1 3 1 3 0 3 0 3 0 3 0 3-1 3-3 3-4 3-5 3-3 3-3 3-4 3-6 3-1 3-1 3 0 3-3 3 1 3 0 3 2 3-2 3-2 3 0 3 1 3 1 3 2 3 2 3 0 3 0 3 1 3 4 3 2 3 3 3 0 3 2 3-3 3-1 3-2 3 0 3 0 3-2 3-2 3-2 3-2 3-1 3-2 3 0 3 3 3 3 3 0 3 0 3 0 3 1 3-3 3-3 3-3 3-3 3-3 3 0 3 1 3 1 3 0 3-1 3-3 3-3 3-1 3-1 3 0 3-3 3 0 3 0 3-1 3-4 3-5 3-2 3-2 3-3 3 2 3 6 3 3 3-2 3-3 3-2 3-2 3 0 3 1 3 1 3-3 3-3"/><path id="r4" d="M460,457l3 0 3-1 3 2 3-2 3-1 3-1 3 1 3-1 3 1 3-1 3-1 3 2 3 2 3 1 3 2 3 1 3-1 3 0 3 0 3 1 3-2 3-3 3-4 3-4 3-3 3-4 3-5 3 0 3 0 3 0 3-3 3-1 3-1 3 0 3 1 3 0 3 1 3-1 3-2 3-3 3-1 3-2 3 3 3 5 3 4 3 3 3 0 3 1 3 1 3-2 3-1 3-2 3-3 3-1 3-2 3 0 3-1 3 0 3 0 3-1 3 0 3 2 3-1 3-2 3-3 3 2 3 5 3 3 3-3 3-2 3-7 3 1 3 3 3 2 3 1 3 0 3-2 3-10 3-8 3 4 3 2 3-2 3 0 3 0 3-4 3-5 3-6 3-5 3 0 3 3 3 3 3 2 3 5 3 4 3 3 3 1 3-1 3-7 3-7 3 6 3 2 3-2 3-3"/><path id="r5" d="M460,462l3-2 3 0 3 1 3-1 3 0 3-1 3 1 3 0 3-2 3-1 3 0 3 2 3 1 3 1 3 2 3 2 3-1 3 0 3-1 3 1 3-3 3-5 3-4 3-3 3-5 3-4 3-1 3-1 3 0 3 0 3-2 3-1 3-2 3-2 3 0 3 1 3 2 3 1 3 1 3 1 3 2 3-1 3 1 3 3 3 2 3 1 3 1 3-2 3-1 3-2 3-2 3-2 3 1 3 1 3 1 3 0 3 1 3-3 3-5 3-3 3 2 3 2 3-2 3-1 3 2 3 3 3 1 3-1 3-2 3 1 3 0 3 0 3 0 3 2 3-2 3-3 3-6 3-6 3-7 3-1 3 2 3 5 3 2 3 0 3-1 3-6 3-6 3 2 3 3 3 0 3-2 3-2 3 1 3-1 3-2 3-3 3 0 3 2 3 3 3 2 3-1 3 1 3 0"/><path id="r6" d="M460,464l3 0 3-1 3 0 3 0 3 1 3 0 3 0 3-2 3 1 3-1 3 0 3 0 3 1 3 0 3 1 3 1 3 1 3 0 3-1 3 1 3-2 3-4 3-2 3-4 3-6 3-6 3-4 3-2 3 3 3 1 3 0 3 1 3 2 3 0 3 0 3-1 3-2 3-1 3-2 3 1 3 2 3 3 3 2 3 2 3 3 3 3 3 1 3 0 3 0 3 0 3-1 3-1 3 0 3-1 3-2 3-1 3-2 3-1 3-4 3-2 3-1 3 1 3 2 3 0 3 1 3 2 3 2 3-1 3-1 3-1 3-3 3-2 3-1 3-2 3-1 3 0 3-3 3-2 3 2 3 3 3 2 3-1 3-3 3-5 3-4 3 0 3 0 3-2 3-6 3-5 3-5 3 4 3 8 3 0 3-5 3-2 3 5 3 4 3 3 3 2 3 2 3-1 3-6 3-5"/><path id="r7" d="M460,466l3-1 3 1 3 0 3 0 3-2 3 1 3 1 3 0 3 1 3 1 3 1 3-1 3 0 3-2 3 2 3 1 3 1 3-2 3-1 3 1 3-2 3-4 3-1 3-2 3-1 3-2 3-4 3-2 3 0 3-1 3-3 3-2 3-2 3-2 3 0 3 1 3 2 3 1 3 2 3 1 3 3 3 0 3 0 3-1 3 1 3 2 3 1 3-1 3 0 3-1 3 2 3-3 3-4 3 1 3 3 3-2 3-2 3 0 3 0 3-4 3 1 3 2 3-1 3-1 3-2 3 2 3 2 3 1 3 0 3-2 3 0 3 0 3-2 3-3 3 1 3 0 3 0 3 0 3-3 3-2 3 1 3 3 3-2 3-4 3-1 3-2 3-2 3-1 3 0 3 2 3 1 3-3 3-1 3-3 3 4 3 4 3-4 3-5 3-3 3-1 3 5 3 2 3 2 3 2 3 0"/><path id="r8" d="M460,468l3 0 3 2 3 1 3 0 3-2 3 0 3 0 3 1 3 0 3 1 3 1 3 1 3-2 3 0 3-1 3 0 3-1 3 1 3 0 3 1 3-1 3-2 3-4 3-3 3 0 3-2 3-3 3-1 3 0 3-1 3-2 3-2 3-2 3 1 3 1 3 1 3 0 3 0 3-2 3-2 3 1 3 2 3 2 3 2 3 2 3 2 3-1 3-1 3 2 3-1 3-1 3 0 3 0 3 1 3 1 3 0 3 0 3 1 3 0 3-1 3-2 3 2 3 2 3-2 3 0 3 1 3 0 3-2 3-1 3-1 3-3 3-3 3-2 3-2 3-2 3 1 3-4 3 0 3-2 3 1 3 3 3 3 3 0 3-2 3-6 3-7 3 1 3 1 3 3 3 2 3-1 3-2 3-1 3 0 3-4 3-2 3-2 3 2 3 1 3-2 3-2 3 2 3 0 3-1 3-3 3-3"/><path id="r9" d="M460,469l3 2 3 1 3 1 3 1 3 1 3-1 3 0 3 0 3 0 3-1 3-1 3 1 3 1 3-1 3 2 3-1 3 1 3 1 3 0 3 0 3-1 3-1 3-3 3-5 3-5 3-4 3-2 3 3 3 3 3 0 3-1 3-1 3 0 3 1 3 0 3 1 3 0 3-1 3-1 3-2 3 0 3 0 3-1 3 0 3 2 3 2 3 2 3 1 3 2 3-1 3-3 3 0 3 1 3 0 3 1 3 1 3 1 3 0 3-3 3-3 3-1 3 0 3 1 3-2 3-1 3 2 3 2 3 1 3-5 3 0 3 2 3 1 3-1 3 1 3-2 3-1 3-2 3-3 3-2 3-1 3 2 3 3 3 0 3-5 3-4 3-6 3-5 3-5 3 1 3 2 3 3 3 4 3 5 3 5 3 2 3 0 3 0 3 1 3-3 3-4 3-3 3-4 3 3 3 2 3 2 3-5 3-4"/><path id="r10" d="M460,477l3-1 3 0 3-1 3-1 3 0 3-1 3 2 3 0 3 1 3-2 3 2 3 1 3 2 3 2 3-1 3-2 3 1 3 2 3 0 3 0 3-2 3-2 3-3 3-1 3-2 3-1 3-2 3 0 3 2 3 1 3-1 3-1 3-1 3 1 3 0 3-1 3-2 3-1 3-1 3-1 3 2 3 1 3-1 3-2 3 0 3 4 3 2 3 0 3-1 3 0 3 2 3 0 3 0 3 1 3-2 3-1 3-2 3-2 3-3 3-4 3-2 3 4 3 2 3 1 3 2 3 3 3 3 3-3 3-2 3-4 3-2 3-1 3 0 3 1 3 0 3 1 3 0 3 0 3 0 3-2 3-1 3-1 3-3 3-4 3-3 3 0 3 1 3-4 3-2 3 0 3 1 3 2 3 4 3 4 3 0 3 2 3 1 3-3 3-2 3-3 3-3 3-3 3-5 3 0 3 0 3-7 3-2 3-6"/><path id="r11" d="M460,479l3 0 3 0 3 0 3 1 3-1 3-1 3 0 3 0 3 1 3 1 3 1 3 2 3 0 3-1 3 0 3 0 3-1 3 0 3 3 3 0 3-3 3-2 3-3 3-3 3-1 3-1 3-1 3 0 3 2 3-1 3-2 3-3 3-1 3-1 3-3 3 0 3 2 3 2 3-1 3-1 3 0 3 2 3 2 3 2 3-1 3 3 3 2 3 2 3-1 3-3 3-2 3-2 3 2 3 2 3 2 3 0 3-2 3-3 3-3 3 0 3 0 3 1 3 1 3 2 3 0 3 4 3 3 3 0 3-1 3-3 3-3 3-2 3-2 3-1 3 1 3 1 3-1 3-5 3-3 3-3 3 3 3 4 3 2 3 0 3-1 3-1 3-3 3-3 3-1 3 1 3 0 3-1 3 2 3 2 3 2 3 0 3 0 3-5 3-5 3-2 3 3 3-5 3 2 3 3 3 4 3-12 3-10 3-9 3-1"/><path id="r12" d="M460,483l3 0 3-1 3-2 3 0 3 0 3 0 3 1 3 0 3 1 3 1 3 0 3 0 3 0 3 0 3 0 3 0 3 2 3 1 3 1 3 1 3-3 3-1 3-2 3-3 3-4 3-3 3 0 3 1 3 2 3 2 3-3 3-3 3 3 3 1 3 3 3-1 3-1 3-1 3-1 3-1 3 0 3-1 3 2 3 1 3 1 3 0 3-1 3 0 3 1 3 1 3 1 3 2 3-1 3-1 3-2 3-1 3-2 3-2 3 1 3 0 3 2 3 2 3 1 3-3 3 0 3 4 3-1 3 2 3 3 3-3 3-4 3-3 3 2 3 2 3-1 3-1 3-2 3-3 3-5 3-1 3 4 3 3 3 1 3 1 3-1 3 0 3-1 3-4 3-1 3-1 3-1 3-1 3 2 3 2 3 2 3-2 3 2 3 1 3-3 3-2 3-3 3-1 3-4 3-1 3 1 3-3 3-3 3-4 3-2 3-1M823,477l3 5 3 6 3 4 3 4 3 4 3 3"/><path id="r13" d="M460,484l3-1 3 1 3 0 3 1 3 1 3 1 3 1 3 1 3 1 3 1 3-1 3 0 3 1 3-1 3-1 3-1 3 0 3 0 3 2 3-1 3-2 3-1 3-1 3-1 3 0 3-1 3-2 3-2 3-1 3-1 3-2 3-1 3 1 3 2 3 1 3-1 3 0 3 1 3 2 3 1 3 2 3 2 3-1 3 0 3-1 3 0 3 0 3-1 3 2 3 0 3-1 3 0 3-2 3 0 3 2 3 1 3 1 3-3 3-2 3-5 3 0 3 5 3 3 3 4 3 2 3 3 3 0 3 0 3-2 3-3 3-4 3-3 3-3 3 1 3 2 3 0 3 1 3-3 3-3 3-1 3 3 3-1 3-2 3-2 3 1 3 0 3-1 3-3 3 0 3 1 3 1 3 1 3 4 3 2 3 1 3 1 3 0 3 0 3 0 3-1 3-1 3-1 3-3 3-2 3-4 3-4 3-5 3-4 3-3 3-2 3-2 3-3M814,462l3 9 3 5 3 2 3 4 3 5 3 4 3 5 3 0 3-2 3-1 3 6 3 4 3 2 3 1"/><path id="r14" d="M460,493l3 0 3 1 3 0 3 0 3 0 3-2 3-2 3-1 3 3 3 3 3 0 3 1 3 0 3 0 3 1 3 0 3-1 3-1 3-2 3 1 3 2 3-1 3-3 3-2 3-2 3-2 3-2 3 1 3 1 3 2 3-1 3-1 3 0 3-2 3-1 3 0 3-2 3-3 3 3 3 2 3 4 3 0 3 0 3 0 3 2 3 0 3-1 3 1 3 1 3 2 3 0 3-2 3-3 3-1 3 1 3 2 3 2 3 1 3-1 3-2 3 0 3 1 3 2 3 0 3-1 3 1 3 1 3-1 3 1 3-1 3-2 3-2 3-2 3-2 3-1 3 1 3 2 3-1 3 1 3-2 3 0 3-1 3 1 3 1 3 0 3 0 3-3 3-3 3-4 3 1 3 2 3 1 3-1 3-1 3-2 3-1 3 3 3-1 3 3 3-1 3-3 3-1 3-2 3-4 3 1 3-1 3-5 3-5 3-4 3-3 3-2 3 3 3 4 3 4 3 3 3 3 3 2 3 7 3 1 3 2 3 0 3 6 3 1 3 7 3-2 3-1 3 0 3 2 3 4 3 3 3 4 3-2 3-2 3-4 3 2"/><path id="r15" d="M460,495l3 0 3 1 3 1 3 0 3 0 3-1 3 0 3-1 3 1 3 0 3 0 3 2 3 0 3 0 3 0 3 0 3 0 3 1 3 1 3-1 3 0 3-2 3-2 3-2 3-1 3-2 3-3 3-2 3 2 3 4 3 0 3-2 3-2 3 0 3 3 3 3 3 1 3 2 3-1 3 2 3 0 3 1 3 1 3-3 3-2 3-1 3-1 3-2 3 1 3 3 3 0 3 0 3 3 3 3 3-1 3-1 3-1 3-1 3-2 3-2 3-2 3 2 3 2 3 1 3-1 3 1 3 2 3-2 3-1 3-3 3-1 3 0 3 1 3 1 3 0 3-2 3 1 3 0 3-2 3-2 3 1 3-1 3 1 3 1 3 0 3 1 3-1 3-3 3-2 3-2 3-2 3 3 3 1 3 3 3 2 3 1 3 1 3 1 3 1 3 1 3 1 3-1 3 0 3-1 3-2 3-4 3-6 3-5 3-4 3-4 3-3 3-3 3-1 3 0 3 5 3 6 3 1 3 0 3 5 3 7 3 6 3 6 3 5 3 4 3 0 3 0 3-1 3-3 3-3 3-2 3-1 3 3 3 3 3 2 3 4 3 2 3 4 3 3"/><path id="r16" d="M460,495l3 1 3 1 3 0 3 2 3 0 3 0 3 0 3-1 3-1 3 0 3 1 3 1 3 1 3 0 3 1 3-2 3 0 3 0 3 3 3 2 3 1 3-1 3 0 3-3 3-3 3-1 3-2 3 1 3 2 3 2 3-2 3 0 3 0 3 0 3 0 3-2 3 1 3 0 3 2 3 0 3 2 3-1 3 0 3 0 3 0 3 1 3 1 3 0 3-2 3-2 3-3 3 2 3 3 3 4 3 3 3 0 3 0 3 0 3-2 3-2 3 0 3-1 3 0 3-2 3 0 3 3 3 1 3 1 3 2 3 0 3 1 3 0 3-2 3 0 3-1 3-2 3-2 3-3 3-2 3-1 3 0 3 2 3 1 3 0 3 0 3-1 3 0 3-1 3 1 3-3 3-5 3-3 3 6 3 6 3 4 3-1 3-1 3-2 3-1 3-2 3-1 3-2 3-3 3-2 3-1 3-7 3-4 3 2 3 3 3 1 3-1 3 3 3 2 3 1 3 3 3 4 3 2 3 6 3 5 3 3 3-1 3-3 3-3 3 4 3-2 3-1 3-1 3 4 3 3 3 3 3 3 3 1 3 3 3 3 3-1 3-3 3-1 3-2 3-3 3 4 3 1M901,524l3 1 3 4 3 1 3-4 3-2 3 2 3 1 3 3"/><path id="r17" d="M460,504l3-1 3-1 3-1 3-2 3 0 3 1 3 2 3 0 3-1 3 0 3 0 3 1 3 1 3 2 3-1 3-1 3 1 3 0 3 0 3 1 3 0 3-1 3-3 3 2 3 0 3-1 3-2 3-4 3 6 3 1 3 0 3 1 3 1 3 1 3 1 3-3 3-3 3-1 3-3 3 1 3 2 3 2 3-1 3 0 3-1 3 3 3 3 3 1 3-1 3-1 3 0 3 1 3 1 3-1 3-2 3-1 3 1 3 2 3 2 3 0 3-1 3 0 3 3 3 1 3 2 3 1 3 1 3-2 3-1 3-2 3-2 3-2 3 2 3 0 3-4 3-2 3 1 3 2 3 2 3 2 3-1 3 0 3-2 3-3 3-2 3-1 3-1 3-2 3 3 3-1 3 1 3 0 3 1 3 2 3 0 3 2 3 1 3 0 3-2 3-1 3-2 3-3 3-2 3-2 3-3 3-4 3 3 3 2 3 1 3-1 3-4 3-4 3-3 3 1 3 3 3-1 3-2 3 2 3 7 3 8 3 7 3 4 3 7 3 3 3-1 3 2 3 0 3 0 3 2 3 0 3 2 3 1 3-1 3 0 3 1 3-2 3-1 3 0 3 3 3 1 3 0 3-1 3-2 3 1 3 1 3 2 3 2 3 1 3 1 3-4 3-3 3 3 3-2 3-1 3-1 3 3 3 0 3 2 3 1"/><path id="r18" d="M460,502l3-2 3 1 3 1 3 2 3-2 3 1 3 3 3 0 3-1 3 0 3 0 3 3 3 0 3-1 3 1 3 0 3 2 3 1 3 0 3-1 3-1 3 0 3 0 3 1 3 0 3-3 3-2 3-2 3 0 3 2 3 2 3 1 3-2 3 0 3 0 3-2 3 4 3 1 3-2 3 0 3 0 3-2 3 2 3 5 3 2 3 1 3 1 3 1 3-1 3-1 3-1 3-1 3-2 3 0 3 0 3-1 3-2 3 0 3 1 3 2 3 2 3 1 3-1 3-3 3 1 3 1 3 2 3 1 3 1 3 2 3-1 3-3 3-2 3 0 3 2 3 0 3-5 3 1 3 2 3-2 3 1 3 3 3 1 3 0 3 1 3 1 3 0 3-1 3-1 3 0 3 0 3 0 3 1 3-1 3-3 3-1 3 1 3 3 3 1 3 0 3 0 3-3 3-4 3-3 3-4 3-6 3 0 3 2 3 2 3 2 3-3 3-3 3-4 3-5 3 4 3 8 3 1 3 1 3 4 3 7 3 6 3 5 3 6 3 1 3-2 3-2 3 4 3-1 3-3 3 3 3 0 3 0 3-3 3-2 3-2 3 4 3 2 3 3 3-1 3-2 3-3 3 0 3 4 3 1 3 5 3 2 3 1 3 0 3 1 3 1 3 1 3-2 3-3 3-2 3-3 3 1 3 3 3-4 3-2 3 3 3 3"/><path id="r19" d="M460,510l3 0 3 0 3 1 3-1 3 2 3-1 3 0 3 1 3-1 3 1 3-1 3 2 3 2 3 0 3-2 3-1 3 2 3 1 3-2 3-1 3 2 3 1 3 1 3 0 3 1 3 1 3-1 3-1 3-1 3 0 3-1 3-2 3-1 3-1 3-1 3 1 3 1 3 1 3 1 3 2 3 2 3 1 3 0 3 0 3-1 3 0 3 1 3 0 3 0 3-2 3 0 3 1 3 2 3 1 3 2 3-6 3-2 3 6 3 0 3-1 3-1 3-1 3-1 3 3 3 0 3 3 3 0 3 2 3 1 3-2 3-4 3 3 3 1 3-3 3-1 3 1 3-3 3 1 3 1 3-1 3 2 3 0 3-2 3-1 3 1 3 0 3 0 3-1 3 0 3-2 3-2 3-1 3-1 3-1 3 0 3 2 3 1 3 2 3 1 3 2 3 1 3 1 3 2 3 0 3-3 3-4 3-4 3-4 3-3 3-1 3-4 3-2 3 8 3 0 3-2 3-1 3-1 3 0 3 7 3 6 3 5 3 5 3 5 3 5 3 2 3 0 3-5 3 2 3-4 3-6 3 3 3 5 3 5 3-1 3-2 3-3 3-2 3 5 3 3 3-4 3-1 3 6 3 6 3 4 3 1 3 0 3-3 3-2 3-1 3-2 3-1 3-2 3-1 3-2 3-1 3 1 3-3 3 1 3 2 3 2 3 3 3 1 3 0 3-1 3 1 3 3 3 2 3 1 3 2 3 2 3 0 3-1 3 0"/><path id="r20" d="M460,508l3 0 3 2 3-1 3-3 3 3 3 2 3 4 3 0 3 0 3 1 3-1 3 1 3 0 3-1 3-1 3 3 3 3 3 0 3-2 3 0 3-2 3 0 3-1 3 2 3 1 3-2 3-3 3 2 3 1 3-1 3 1 3 3 3 1 3 0 3-1 3-1 3-2 3-1 3 3 3 2 3 1 3-1 3-3 3 3 3 0 3-1 3 0 3 3 3 0 3-2 3-1 3 0 3 1 3 0 3 2 3 1 3 1 3 0 3 0 3 0 3 2 3 1 3 2 3 1 3 2 3 2 3 0 3 0 3-3 3-3 3-3 3-2 3 3 3 2 3 1 3-1 3-2 3-2 3-2 3 2 3 2 3 0 3-1 3-1 3-2 3 1 3 0 3-1 3-3 3 6 3 1 3 1 3 2 3-1 3-2 3-5 3-4 3 5 3-2 3 1 3-3 3 1 3 1 3 0 3-2 3-4 3 0 3 0 3 1 3 2 3 1 3 2 3 2 3 2 3 2 3 3 3 0 3 4 3 3 3-2 3-2 3 2 3 6 3 6 3-2 3-3 3 1 3 4 3 4 3-1 3 1 3 0 3-1 3 0 3 0 3-2 3 0 3-1 3-1 3 0 3-2 3 0 3 2 3 1 3 1 3-5 3-2 3 4 3 5 3 4 3 0 3 0 3-3 3-1 3 3 3 3 3 1 3-1 3-2 3-3 3-3 3-4 3-2 3-1 3 3 3 2 3-1 3 1 3 2 3 1 3 2 3 1 3 0 3-1 3-1 3-2M1030,549l3-2 3 0 3 2 3 1 3 1 3-2 3-2 3 2 3 1"/><path id="r21" d="M460,512l3 2 3 0 3-1 3-1 3 1 3-1 3 1 3 1 3 1 3 2 3 0 3 2 3 1 3 2 3 1 3 2 3 2 3 0 3 0 3 1 3 0 3 1 3 0 3-1 3 0 3 0 3-1 3-1 3-2 3 2 3-1 3 0 3-1 3-1 3 0 3 1 3 1 3 1 3 1 3 2 3-1 3 1 3 0 3 1 3 2 3 0 3 1 3 2 3 0 3-1 3-1 3 0 3-1 3-2 3 0 3-2 3-1 3 2 3 0 3 2 3 0 3 0 3-2 3 0 3 0 3-1 3 2 3 1 3 2 3-3 3 5 3 1 3-1 3-1 3-2 3 2 3-2 3 1 3 1 3 0 3 0 3 0 3 0 3 1 3-1 3-4 3-1 3-1 3 2 3 1 3-1 3-2 3 0 3-1 3 1 3 1 3-1 3-1 3-2 3 1 3 1 3 1 3-1 3 2 3 0 3-2 3-2 3-2 3 0 3 0 3 1 3 3 3 2 3 2 3 1 3 3 3-3 3-3 3-2 3 7 3 8 3 0 3-1 3-1 3-2 3-1 3 1 3 3 3 3 3-1 3-3 3 0 3 3 3 3 3 0 3 3 3-2 3-1 3-1 3 2 3 2 3 2 3 2 3 1 3-1 3-4 3 1 3 2 3 2 3 1 3-1 3-2 3-1 3 4 3-3 3-4 3 4 3 4 3 4 3-4 3-3 3-2 3 0 3 2 3 0 3-5 3-2 3 4 3 4 3 4 3 3 3-2 3-3 3-2 3-2 3 3 3 4 3 3 3 4 3-2 3 0 3-2 3-2 3-2 3-1 3-1 3 1 3 2 3 2 3 1 3 2 3 2 3 0 3 0 3 0 3 0 3 0 3 0 3-1 3 0 3 0 3 0 3-5 3-3 3-6 3-4 3 4 3 4 3 0 3-1"/><path id="r22" d="M460,520l3-1 3 0 3 1 3-1 3-1 3 1 3-1 3-1 3 1 3 2 3 0 3-1 3 2 3 3 3 2 3 2 3 2 3 1 3 0 3 1 3-1 3 0 3-1 3-2 3-2 3-3 3 3 3-2 3 0 3 1 3 2 3 0 3-1 3-1 3 1 3 2 3 1 3-1 3-1 3 0 3 2 3 1 3-1 3 0 3 4 3 3 3 1 3 1 3 1 3-2 3 0 3-2 3-2 3-1 3 0 3 3 3 1 3-1 3-1 3-2 3 0 3 0 3 1 3 2 3 2 3 2 3 2 3 2 3-1 3-1 3-1 3-1 3-1 3 0 3-2 3-2 3 2 3 1 3 1 3 2 3 2 3-4 3-2 3-1 3 2 3-2 3-2 3 0 3 2 3 0 3 2 3-1 3 1 3 2 3 1 3-1 3-1 3-2 3-1 3 2 3-3 3 1 3 1 3 1 3 1 3-1 3-4 3-1 3-3 3 2 3 2 3 0 3 0 3-2 3 0 3 4 3 1 3 5 3 5 3 3 3 0 3 0 3-4 3 5 3 4 3 2 3-1 3-1 3 0 3-2 3 0 3 0 3 1 3 2 3 2 3 1 3-1 3 4 3 2 3 3 3-2 3 0 3-1 3 0 3-1 3-2 3-1 3 1 3 2 3 1 3 2 3 1 3-1 3-3 3-1 3-3 3-2 3-1 3 2 3-1 3-4 3 7 3-1 3 1 3-1 3 1 3 1 3-1 3 2 3 2 3 2 3 0 3-2 3-3 3 3 3 4 3 4 3 2 3 0 3 0 3 1 3 0 3-1 3-2 3-1 3-1 3 0 3 0 3-6 3-1 3 5 3 4 3-2 3-3 3-3 3-3 3 2 3 2 3 3 3 0 3-2 3 0 3-1 3 0 3 0 3-2 3-2 3-1 3 1 3 1 3 1 3 2 3 2"/><path id="r23" d="M475,518l3 3 3 4 3 1 3 0 3 0 3 1 3-1 3 2 3 1 3-1 3-1 3 0 3 0 3 0 3 2 3 2 3 2 3 1 3 0 3 0 3 0 3-1 3-1 3-2 3-1 3-1 3 2 3 4 3 0 3-1 3 0 3-1 3-1 3 3 3 1 3 0 3 3 3 2 3 3 3 0 3 0 3-2 3 1 3 0 3-1 3-1 3 1 3 0 3 1 3-2 3-1 3 0 3 0 3-2 3 2 3 3 3 1 3 0 3-1 3 1 3 1 3 0 3-2 3-1 3 0 3 1 3-2 3-1 3 2 3 0 3 3 3 0 3 1 3 1 3-1 3 0 3-1 3-1 3-1 3 1 3 1 3 1 3 1 3 1 3-2 3-1 3 0 3 2 3 1 3 1 3-1 3-1 3-2 3-1 3-3 3 2 3 2 3-2 3 0 3 1 3 0 3 0 3 1 3 1 3 0 3 1 3 3 3 0 3 1 3 1 3 0 3 1 3 3 3 1 3 3 3 0 3 1 3-1 3 0 3 0 3-1 3-1 3 2 3-2 3 0 3-1 3 1 3 2 3 2 3 2 3 2 3-1 3 1 3 0 3 1 3 0 3 1 3 1 3 1 3 0 3-2 3-1 3-2 3-2 3 1 3 1 3 3 3 3 3-1 3-1 3 0 3 1 3 2 3-1 3-4 3 2 3 2 3-2 3-2 3-2 3-1 3 3 3 2 3 3 3 1 3 0 3-1 3 2 3-3 3-3 3 1 3 5 3 2 3 1 3 1 3-1 3 1 3 0 3-1 3-2 3-2 3 1 3 2 3 3 3 2 3 1 3 1 3-1 3-2 3-2 3-2 3-2 3-2 3 0 3-2 3-3 3-2 3 0 3 2 3 3 3 0 3 2 3 1 3-1 3-1 3 0 3 0 3 1 3-2 3-3 3-3 3 5"/><path id="r24" d="M493,528l3 2 3 0 3-3 3 4 3 4 3 1 3 2 3-1 3-1 3 0 3-2 3-1 3-1 3 0 3 1 3 1 3 2 3 2 3 0 3 0 3-1 3-1 3 0 3 1 3 2 3 2 3 1 3-2 3 3 3 3 3 2 3 0 3 0 3-1 3 2 3 1 3 2 3-1 3-3 3-2 3 1 3 1 3-2 3 0 3 0 3 0 3-2 3 1 3 2 3 1 3 2 3 1 3 0 3 0 3 0 3-1 3-3 3 4 3 1 3 0 3-5 3 2 3 5 3-2 3-1 3-1 3-1 3 0 3-1 3-1 3 0 3 4 3 1 3 0 3-2 3 1 3-2 3-1 3-2 3-1 3 1 3 3 3 1 3 2 3 2 3 2 3 1 3 2 3 1 3-1 3 0 3 0 3-1 3-2 3-2 3-2 3-2 3-1 3-1 3-1 3 2 3 1 3 2 3 2 3 1 3-3 3 1 3 1 3-2 3 3 3 3 3 3 3 4 3 1 3-1 3 2 3 1 3-1 3 0 3-1 3-1 3 1 3 2 3 3 3 2 3 1 3 2 3 1 3-3 3-1 3-1 3-1 3 0 3 1 3 2 3 2 3 2 3 1 3 0 3-3 3-1 3 0 3-2 3 2 3 1 3 3 3 2 3 1 3 0 3 0 3 0 3-1 3 1 3-2 3-1 3-1 3 0 3-2 3-1 3-1 3 0 3 1 3 1 3-1 3 0 3 3 3 2 3 3 3-1 3-1 3-2 3 0 3-2 3 0 3 2 3 1 3 0 3 1 3 2 3 1 3-3 3-1 3-1 3-2 3-2 3 2 3 3 3-2 3-4 3-2 3 1 3 2 3 2 3 2 3 3 3 0 3 0 3 0 3 0 3-1 3-3 3-1 3-2 3-4 3 2 3 4 3 1 3 1M1144,570l3-2 3 1"/><path id="r25" d="M514,540l3-2 3-2 3 0 3 3 3 1 3 0 3 1 3-1 3-1 3 1 3 0 3 0 3 0 3 3 3 1 3 2 3 2 3 1 3 2 3 1 3-1 3-3 3-4 3 5 3 4 3-2 3 0 3-1 3-1 3-2 3 0 3 1 3 2 3 1 3-1 3-1 3 2 3 0 3-1 3 2 3 2 3 1 3-1 3-3 3 0 3 3 3 1 3 0 3-1 3-1 3 0 3 1 3 2 3 0 3 1 3 0 3-1 3 1 3 0 3-1 3-2 3 0 3-2 3 1 3 2 3 2 3 1 3 0 3-3 3 1 3-2 3 2 3 3 3 2 3 0 3-1 3-1 3 0 3-2 3 1 3 1 3 1 3 1 3 2 3-1 3 1 3-1 3 0 3-2 3-2 3-1 3-2 3 0 3-2 3 1 3 2 3 2 3 2 3 2 3 3 3 3 3 1 3 1 3 1 3 2 3 1 3-2 3-1 3-1 3 1 3 2 3 0 3 0 3 2 3 2 3 1 3 2 3-1 3-3 3-2 3 4 3 2 3 3 3-2 3-3 3-2 3-2 3 4 3 3 3 4 3 1 3-1 3 0 3-1 3-1 3-1 3 1 3 0 3 1 3-2 3-1 3-1 3-1 3 1 3 1 3 1 3 2 3 1 3 1 3-2 3 0 3-1 3 0 3 1 3 1 3 0 3 0 3 2 3 2 3 1 3 1 3 2 3 0 3-1 3-2 3-2 3 1 3 0 3-2 3-1 3 1 3-1 3 0 3 2 3-2 3-2 3 1 3 1 3 2 3 1 3 1 3-2 3-1 3-2 3-2 3-1 3 1 3-2 3 0 3 0 3-1 3-1 3-1 3 1 3 1 3 0 3-2 3-2 3 3 3 1 3 2 3 1 3 1M1135,575l3 1 3 2 3 2 3 0 3 1 3 0 3 1 3-1"/><path id="r26" d="M532,547l3 2 3 0 3 1 3 1 3 1 3 0 3 2 3 0 3 0 3-2 3-1 3 0 3-3 3 1 3 2 3 0 3-1 3 1 3 1 3 1 3 1 3 0 3 2 3 1 3 2 3 1 3 1 3 0 3 1 3 0 3 1 3 0 3 1 3 0 3-1 3-2 3-2 3 0 3 3 3-1 3-2 3-1 3 2 3 2 3 2 3 1 3 1 3-1 3-1 3-2 3-1 3-1 3-1 3 1 3 1 3 2 3-2 3 3 3-1 3-1 3 0 3 2 3 2 3 1 3 1 3-1 3-1 3 1 3-1 3 1 3 1 3 2 3 0 3 1 3 1 3-2 3-1 3-2 3-2 3-1 3 0 3 1 3 1 3 1 3 1 3-1 3-2 3-2 3-1 3 6 3 2 3 0 3-1 3-1 3 1 3 0 3 3 3 4 3 2 3 2 3 0 3 1 3 0 3-2 3 2 3 0 3 2 3 1 3 1 3 1 3 1 3-1 3-1 3-1 3 1 3 1 3 0 3 1 3 1 3 1 3 2 3-1 3-1 3-1 3 0 3 0 3-2 3 2 3 0 3 2 3 2 3-2 3-4 3 1 3 3 3 3 3 0 3 0 3-1 3-1 3-2 3 0 3 0 3 2 3 1 3 2 3 0 3 3 3 1 3 0 3 1 3 0 3-1 3-1 3-2 3-1 3-1 3 2 3 2 3 0 3-2 3-1 3-2 3 2 3 1 3 1 3 1 3-3 3-1 3 1 3 3 3-2 3-2 3-1 3-2 3 0 3 2 3 2 3 1 3 2 3 2 3 0 3-1 3 1 3-2 3-1 3-1 3-2 3-2 3-1 3-2 3 0 3 1 3 1 3-1 3-1 3-2 3-1 3 1 3-2 3-1 3 1 3 1 3 2 3 1 3-1 3-1 3-2 3-1 3-1 3-1 3 0 3 0"/><path id="r27" d="M553,556l3 0 3 0 3 0 3 2 3 2 3 0 3 0 3 0 3-1 3 1 3 0 3 1 3 0 3 1 3-1 3 0 3-1 3 0 3 0 3 0 3 0 3 2 3 2 3 1 3 1 3 1 3 1 3 1 3 1 3 0 3 1 3 1 3 0 3-1 3-3 3-3 3 2 3-2 3-1 3 2 3 1 3 1 3-1 3 0 3 0 3 0 3-1 3 0 3-1 3 3 3 2 3 2 3 2 3 1 3-1 3-1 3-1 3 0 3 2 3 1 3 2 3-1 3 2 3 1 3 0 3-1 3 0 3-2 3-4 3 4 3 0 3-1 3-2 3-2 3 1 3 2 3 1 3 1 3-1 3 1 3 4 3 2 3-1 3 0 3 0 3-1 3 0 3 1 3 0 3 0 3 1 3 2 3 3 3 1 3 0 3-2 3-1 3 0 3 2 3 2 3 0 3-4 3 3 3 0 3-1 3 2 3 2 3 1 3 1 3 1 3-1 3-1 3-1 3 0 3-2 3-1 3 2 3 3 3 4 3 0 3 0 3-1 3-1 3 0 3 1 3 0 3 0 3-2 3-1 3 1 3 1 3 1 3 0 3 1 3 2 3-1 3-1 3-1 3-1 3 1 3 2 3-1 3-1 3 4 3 1 3 0 3 1 3 2 3 2 3 0 3-1 3-1 3-2 3-2 3 1 3 1 3 1 3-2 3-2 3 1 3 2 3 3 3 2 3 0 3 0 3-1 3-1 3 0 3-1 3-1 3-2 3 1 3 2 3 0 3 0 3-2 3-2 3-2 3-1 3-2 3 1 3 0 3 2 3-1 3-1 3 0 3 0 3 0 3-3 3-1 3-1 3 1 3 1 3 1 3 1 3-3 3 1 3 3 3-1 3-1 3-2 3 0 3-2 3-2 3 0 3 0 3 0 3 1 3 1"/><path id="r28" d="M577,563l3-2 3 0 3-2 3-1 3 2 3 2 3 2 3-1 3-1 3-3 3 2 3 3 3 2 3 1 3 3 3 1 3 0 3-1 3 0 3-2 3 0 3-1 3-1 3 1 3 2 3 1 3 2 3 2 3 1 3-2 3-1 3 1 3-1 3-1 3 1 3 2 3 3 3 2 3-1 3-1 3-2 3 0 3 1 3-1 3 1 3 3 3 2 3 1 3 0 3 0 3 0 3-1 3-1 3-2 3 4 3 3 3 2 3 0 3-1 3-1 3-2 3 0 3 1 3-3 3 0 3 4 3 0 3-3 3 2 3-2 3-1 3 0 3 0 3-1 3 1 3 2 3 2 3 2 3 1 3 0 3 0 3 1 3 1 3 1 3 0 3 0 3 1 3-2 3 2 3 2 3 1 3 0 3-2 3-2 3 0 3 2 3 2 3-1 3-1 3 1 3 0 3 2 3 1 3 2 3 1 3 1 3-1 3-2 3-3 3 5 3 0 3 0 3 1 3 2 3 1 3 1 3 1 3 0 3 1 3 1 3 0 3 0 3 1 3 0 3 0 3 0 3 1 3 0 3 0 3-1 3-1 3-2 3 0 3-2 3 0 3 1 3 3 3 3 3 1 3 3 3 2 3 1 3 0 3 0 3-2 3-2 3-1 3-1 3-2 3-1 3 2 3 3 3-1 3-2 3 1 3 1 3 1 3 0 3 1 3 0 3-1 3-1 3-2 3-1 3-2 3-1 3 2 3 2 3 2 3 0 3 0 3-1 3-1 3-1 3-3 3-4 3-2 3 2 3 0 3 0 3-2 3-1 3-1 3 1 3 0 3 1 3 0 3 1 3 0 3-2 3-2 3-2 3 0 3 3 3 2 3-3 3-2 3 1 3-1 3-3 3 1 3-4 3 3 3 2 3-3"/><path id="r29" d="M598,569l3-1 3 2 3 2 3-1 3 0 3 0 3-1 3 0 3-1 3 0 3 2 3 1 3 2 3 2 3 2 3 1 3 1 3-1 3 1 3 1 3 1 3-1 3-2 3-2 3 1 3 0 3 1 3-1 3 4 3-2 3-1 3 2 3 0 3-1 3 2 3 1 3-1 3 0 3-1 3 0 3 1 3 2 3 1 3 2 3 2 3-1 3 2 3 3 3-1 3-1 3 1 3 0 3 0 3-2 3-2 3-2 3 0 3 1 3 1 3 1 3 2 3 0 3 2 3-1 3-2 3-2 3 1 3 0 3 1 3 2 3-1 3 1 3 2 3 2 3 2 3 1 3 0 3 0 3 2 3 1 3 1 3-1 3-2 3 0 3 0 3 1 3 1 3 2 3-1 3-2 3 1 3 2 3 1 3-1 3-1 3 0 3-2 3 0 3 2 3 1 3 3 3 2 3 1 3 2 3 3 3 0 3-2 3-2 3-2 3-1 3-2 3-2 3 3 3 2 3 3 3 0 3-2 3-2 3-1 3-1 3 2 3 3 3 2 3 2 3 2 3 2 3 0 3 0 3 0 3-1 3 0 3 0 3 0 3-1 3 1 3 0 3 0 3-1 3-1 3 1 3 1 3 1 3 1 3-1 3-2 3-2 3-1 3-1 3 2 3 1 3 1 3 2 3 1 3 0 3 1 3 0 3-1 3 0 3 0 3 1 3 0 3-1 3 0 3 0 3-1 3 0 3-1 3 0 3-2 3-1 3 0 3-1 3 0 3 0 3-1 3 0 3-1 3 0 3-1 3-2 3-1 3-1 3-1 3-2 3 2 3 0 3 1 3 0 3 1 3 1 3-1 3-3 3-3 3-2 3-2 3 1 3 1 3-2 3 3 3 2 3-3 3-1 3 2 3 1 3 0 3-2 3-6 3-4"/><path id="r30" d="M622,580l3 4 3 0 3 0 3 0 3-1 3-1 3 1 3 0 3-2 3 0 3-1 3 0 3 2 3 2 3 2 3 0 3-1 3-1 3 0 3-1 3 1 3 2 3 1 3 2 3-1 3-1 3-1 3 2 3 1 3 1 3 1 3 0 3-1 3 0 3 3 3-1 3 0 3-1 3 0 3 1 3 2 3 1 3 1 3 1 3-4 3-3 3 4 3 0 3-1 3-2 3 2 3 1 3-1 3-1 3 3 3 2 3 2 3 2 3 2 3 2 3 0 3-2 3-3 3 4 3 3 3 1 3 1 3 1 3-1 3 1 3-1 3-2 3-2 3 0 3-1 3 3 3 2 3 1 3 0 3-2 3-2 3 4 3 4 3 1 3 1 3 0 3 0 3-1 3 0 3-2 3-1 3-1 3 2 3-1 3 0 3 0 3 1 3-1 3-2 3 3 3 2 3 2 3 0 3 0 3-2 3 0 3 3 3 2 3 1 3 2 3 0 3 0 3-1 3-1 3 1 3-1 3-2 3 0 3 0 3-1 3 0 3 0 3 0 3 3 3 1 3 1 3 1 3 2 3 1 3 2 3 1 3-1 3 1 3 0 3 0 3 0 3 1 3-1 3 0 3 0 3-1 3 0 3-1 3-2 3-3 3-2 3-3 3-1 3 1 3 3 3 1 3 2 3 1 3 3 3-1 3-1 3-6 3-4 3 2 3 2 3-3 3-2 3 1 3 2 3 2 3-1 3-3 3-2 3 0 3 2 3 1 3-1 3 0 3-2 3-1 3-1 3 0 3-2 3 2 3-2 3-2 3-1 3-1 3 2 3 0 3 1 3-2 3-3 3-2 3 0 3 0 3 1 3 0 3 1 3 1 3-1 3-3 3-3 3-2 3 3 3 3 3 0 3 0 3 1 3-1 3-1"/><path id="r31" d="M646,591l3 0 3-2 3-2 3-1 3-1 3-1 3 3 3-1 3 1 3 3 3 0 3 1 3 0 3 0 3 3 3 0 3 3 3 3 3 2 3 1 3 0 3 0 3-1 3-4 3-1 3 1 3 3 3 3 3 1 3 1 3-1 3-3 3-4 3 3 3 2 3-1 3-1 3-1 3-1 3 1 3 1 3 0 3 1 3 1 3 1 3 2 3 0 3 0 3-1 3-1 3-1 3-1 3 1 3 2 3 2 3 1 3 1 3-1 3-1 3-2 3-2 3 2 3 3 3 2 3 1 3-1 3-1 3-1 3 0 3 2 3 2 3-1 3 4 3 2 3 1 3 3 3-1 3-1 3 0 3-1 3-1 3-1 3-1 3-1 3 0 3 2 3 0 3-1 3 2 3 2 3 1 3 2 3 1 3 3 3 1 3 1 3 2 3 0 3 0 3 0 3 0 3 1 3-1 3 0 3-2 3-1 3-1 3 0 3 2 3 3 3 0 3-2 3 0 3-1 3-1 3-1 3-1 3-1 3 2 3 2 3 2 3 2 3 0 3-1 3 0 3-1 3-2 3 1 3 0 3 0 3-2 3-1 3 2 3 2 3 2 3 2 3-3 3-3 3-2 3 1 3 3 3 3 3 2 3 0 3-1 3-1 3-2 3-2 3-3 3-2 3 1 3 1 3 0 3-3 3-3 3 2 3-2 3 1 3-1 3-2 3-1 3-2 3 2 3 0 3 2 3-3 3 0 3 4 3 3 3 1 3 0 3 0 3-1 3 0 3 0 3-1 3 0 3-1 3 0 3-2 3-1 3-2 3-2 3-2 3-1 3-2 3 0 3-2 3-2 3 2 3 1 3-2 3 1 3-2 3-3 3-4 3 5 3 3 3 0 3-1 3-2 3-1 3-2M1267,597l3 1 3 1 3 1"/><path id="r32" d="M673,599l3 0 3 1 3-1 3 2 3 0 3 3 3-2 3-1 3 1 3 2 3 0 3-5 3 1 3 5 3 4 3 0 3-2 3-3 3-2 3 3 3 1 3 0 3 0 3 1 3 0 3 0 3 2 3 2 3 0 3-1 3-2 3 0 3-2 3 0 3 0 3 1 3 2 3 3 3 1 3 1 3 1 3-1 3 0 3-2 3-1 3 0 3 1 3 1 3 2 3-3 3 6 3 1 3-2 3-1 3-1 3-1 3 3 3 1 3 0 3 0 3-1 3-3 3 3 3 3 3-2 3-1 3-1 3 1 3 3 3-1 3 3 3 1 3-1 3 0 3 1 3 2 3 1 3 0 3 2 3-1 3-1 3-2 3 0 3 2 3 2 3 3 3 2 3 2 3-1 3 0 3-1 3-1 3 0 3-1 3-1 3-1 3 1 3 2 3 0 3 1 3 0 3-1 3 1 3 1 3 2 3 0 3 0 3-2 3-3 3-1 3 4 3 3 3 3 3-1 3 0 3-1 3-1 3-1 3-1 3-2 3 2 3 0 3 2 3 0 3-1 3-1 3 1 3 1 3 2 3 0 3-4 3-1 3 2 3 0 3 0 3-1 3-1 3-1 3 0 3 0 3 1 3 1 3 0 3 0 3 0 3 1 3-3 3-1 3-2 3-2 3-1 3 0 3 2 3-3 3-2 3 0 3-1 3 2 3 3 3 1 3-3 3-2 3-3 3 1 3 2 3 2 3-1 3-1 3-2 3 0 3-1 3-1 3 1 3 0 3-1 3-2 3-1 3-1 3-1 3-2 3 0 3 0 3 1 3 0 3 0 3 1 3 0 3 0 3-2 3-4 3-4 3 2 3 0 3-1 3-1 3-2 3 2 3 0 3 2 3 0 3 1 3 2 3-1 3-2 3-3 3-2 3-3 3 2 3-1"/><path id="r33" d="M700,610l3 0 3-1 3-3 3 2 3 0 3 1 3 2 3 1 3 1 3 1 3 2 3 0 3-2 3-2 3-2 3 2 3-1 3-2 3 1 3 2 3 2 3 2 3 3 3 1 3-1 3-2 3 0 3-1 3 3 3 0 3 1 3 2 3 1 3 0 3-4 3 4 3 0 3-1 3-2 3-1 3-2 3 1 3 2 3 2 3 3 3 3 3 2 3 2 3 0 3 0 3-3 3-3 3-2 3-2 3 3 3 2 3-3 3-1 3 4 3-1 3 0 3 1 3 3 3 0 3 1 3-1 3-1 3-1 3 0 3 1 3 3 3 3 3 0 3-1 3-2 3 1 3 1 3 3 3 1 3 2 3 2 3 1 3 0 3 0 3-1 3 0 3 0 3-1 3-1 3 2 3 2 3 0 3-1 3 1 3 2 3 2 3 0 3 0 3-1 3-1 3-1 3 1 3-1 3-1 3 0 3-1 3-2 3-1 3 2 3 1 3 0 3 1 3 1 3 1 3 2 3 2 3-1 3-3 3-2 3 2 3 3 3-1 3-4 3-3 3-2 3 3 3-1 3-1 3 1 3 1 3 0 3-2 3 0 3-2 3 0 3 0 3 1 3 1 3-1 3 1 3 0 3 1 3 1 3-1 3 0 3-1 3-2 3-2 3-3 3-3 3-3 3 0 3-1 3 3 3 3 3 2 3-4 3-4 3-5 3 3 3 0 3-3 3-3 3 1 3 1 3 1 3 0 3 0 3 0 3 1 3 1 3 0 3 0 3 1 3 1 3-1 3 0 3-1 3 1 3 0 3-1 3 0 3-1 3 0 3 0 3 0 3 0 3-2 3 0 3 0 3-1 3-2 3-4 3-2 3-3 3-3 3 1 3 1 3 2 3 2 3 0 3-1 3-2 3-1"/><path id="r34" d="M730,613l3 0 3 2 3 3 3 2 3-1 3-1 3 3 3 3 3 0 3-1 3 1 3-1 3-1 3-1 3-1 3 1 3 0 3 2 3 2 3 1 3 1 3 1 3 1 3 1 3-1 3-1 3-2 3-2 3-2 3 2 3 2 3 2 3-1 3 2 3 3 3 3 3 1 3 3 3 1 3 0 3 1 3 0 3 1 3-1 3-2 3-1 3-1 3-1 3-1 3-2 3-1 3 0 3 1 3 2 3 2 3 0 3-2 3-2 3 2 3 0 3 3 3 1 3 1 3 1 3 1 3 2 3 2 3 2 3 0 3 0 3-1 3-1 3-1 3-2 3-1 3 0 3 1 3 3 3 1 3-1 3 2 3 1 3 3 3 1 3 2 3 1 3 0 3-1 3-2 3-1 3 0 3-1 3 1 3 1 3 1 3 0 3 2 3 1 3-1 3-2 3-1 3-2 3-1 3 1 3 1 3 2 3-2 3-2 3-1 3-2 3 1 3 1 3 1 3 1 3 0 3-2 3-2 3-1 3-2 3-1 3 1 3 1 3 1 3 1 3 0 3 2 3 1 3 1 3 0 3-1 3-1 3-1 3-1 3-2 3-1 3-1 3-2 3-1 3-2 3-2 3-3 3-1 3 0 3 2 3-1 3-1 3-2 3-2 3 1 3 1 3 3 3-1 3-2 3 2 3-2 3-3 3 2 3 1 3-1 3-4 3-2 3-2 3 3 3 1 3 1 3 1 3-3 3-2 3 1 3 2 3-3 3-3 3 1 3 3 3 2 3 2 3-3 3 0 3-2 3-2 3-3 3-2 3-2 3 0 3 1 3 1 3 0 3-2 3-3 3-1 3 0 3 1 3 2 3 0 3 2 3-1 3 1"/><path id="r35" d="M757,634l3-1 3-1 3-1 3-1 3-1 3-1 3-1 3 2 3-1 3-1 3 1 3 1 3 2 3 1 3 1 3 0 3-1 3 1 3 1 3 2 3 1 3 2 3 2 3 1 3 0 3-2 3 0 3-1 3-2 3 0 3 0 3 2 3-1 3 0 3 0 3 3 3 1 3 0 3-3 3 3 3 1 3 3 3 1 3-1 3-2 3-1 3-2 3 0 3-2 3 2 3 3 3 2 3 2 3-2 3-3 3 3 3 2 3 4 3 3 3 0 3-1 3 0 3 0 3-1 3 1 3 1 3 2 3 1 3 1 3 0 3 1 3 0 3 1 3 1 3 2 3 0 3 0 3-2 3 1 3-1 3 1 3 2 3 0 3 1 3 2 3-1 3-2 3-1 3-1 3-1 3-1 3-3 3 2 3 1 3 2 3 1 3 1 3 0 3 0 3-1 3 0 3 0 3-1 3-1 3-2 3 0 3-2 3-1 3 0 3-2 3 0 3-1 3 1 3-1 3-2 3-2 3-1 3 2 3 0 3-1 3 1 3-3 3-2 3 1 3 1 3-1 3-2 3-1 3 0 3-2 3 1 3 2 3 0 3-1 3-1 3-1 3 0 3-1 3-2 3-2 3-2 3-1 3-1 3 1 3 2 3 1 3 1 3 1 3-1 3-3 3-1 3-2 3-1 3-2 3 1 3 1 3-2 3-1 3-1 3 2 3 4 3 1 3 0 3 2 3 0 3-3 3-1 3-3 3-2 3-3 3-2 3-1 3 1 3 1 3 1 3-1 3 0 3 1 3 0 3 1 3-4 3-3 3-1 3 2 3 4"/><path id="r36" d="M787,637l3 3 3-5 3 0 3 5 3 3 3 1 3 1 3-1 3 0 3-1 3 0 3 2 3-1 3-4 3 4 3 5 3-1 3 1 3-1 3 0 3 0 3-1 3 0 3 2 3 2 3 2 3-2 3-2 3-1 3-2 3-1 3 0 3 1 3 1 3 2 3 3 3 1 3 2 3 1 3 0 3 0 3 1 3 0 3-3 3-4 3 2 3 5 3 5 3 1 3-1 3-1 3-2 3-3 3-1 3 2 3 4 3 3 3 3 3 2 3 1 3-1 3 1 3 0 3-1 3 0 3 0 3-1 3-2 3-2 3 0 3-3 3 1 3 2 3 2 3 2 3 1 3 2 3 0 3-3 3-2 3-1 3-2 3-2 3 2 3 1 3 1 3 2 3-1 3 0 3-2 3 0 3 2 3-1 3-1 3-1 3 0 3-2 3-2 3 0 3 0 3-1 3-2 3 2 3 3 3 0 3-2 3-2 3-1 3 2 3 1 3 0 3-2 3 2 3 0 3-2 3-3 3-2 3 1 3 1 3 2 3 1 3 2 3-2 3 0 3-3 3-4 3-3 3-4 3-1 3 1 3 2 3 3 3 2 3 1 3-1 3 0 3 0 3-2 3-3 3-3 3-4 3 1 3 3 3 0 3-1 3 0 3 1 3-1 3-3 3 1 3 3 3 1 3 0 3 0 3 1 3-1 3-1 3 0 3-1 3-1 3 0 3-1 3-1 3-1"/><path id="r37" d="M820,649l3 1 3 2 3 2 3 3 3 0 3-1 3 1 3-2 3-3 3 3 3 3 3 0 3 0 3 0 3 0 3 0 3 1 3-3 3-1 3 2 3 0 3 1 3 1 3 1 3 3 3-1 3-1 3 0 3-2 3-1 3 2 3 2 3 1 3 2 3 2 3 1 3 2 3 1 3 1 3 0 3 1 3 0 3 0 3 1 3-5 3-4 3 2 3 5 3 5 3 1 3 0 3 0 3 2 3-1 3-1 3-2 3 0 3 0 3 1 3-1 3-2 3-3 3 2 3 3 3-6 3 2 3 4 3 1 3 1 3 1 3-1 3-1 3-1 3-2 3-1 3 1 3-2 3-2 3 3 3 1 3 3 3 0 3-2 3-5 3-2 3 3 3-2 3-2 3-3 3-2 3-1 3 3 3 1 3 2 3 1 3 2 3 0 3 1 3 0 3 0 3-2 3-1 3-2 3-3 3-2 3-2 3-1 3-1 3 0 3 2 3 0 3-1 3 1 3-1 3 0 3-1 3 0 3 0 3-2 3-1 3-2 3-1 3-1 3-2 3 0 3-2 3 1 3 0 3 2 3 0 3 1 3 0 3 2 3-1 3-4 3-4 3-1 3 2 3 3 3 1 3-3 3-4"/><path id="r38" d="M853,664l3 0 3 1 3 1 3 2 3 1 3-1 3 0 3-1 3-1 3-1 3-1 3-2 3-2 3 4 3 2 3 1 3 2 3 2 3 2 3-3 3 0 3 3 3-1 3-3 3 1 3 1 3 0 3-2 3-2 3-2 3 2 3 3 3 2 3 4 3-2 3-2 3 2 3 3 3 4 3 0 3-1 3-2 3-3 3 0 3 2 3 3 3 0 3-1 3 2 3 1 3 2 3 1 3 3 3 1 3-2 3-1 3-1 3 1 3 1 3 2 3 0 3-1 3-1 3-2 3-1 3-1 3-1 3-1 3-2 3 2 3 0 3 0 3-1 3 1 3-1 3 0 3 1 3-1 3-2 3-1 3 0 3-1 3-3 3-2 3-2 3-3 3-2 3 0 3 3 3 0 3 3 3-3 3-1 3 2 3 1 3 2 3 0 3-2 3-3 3-3 3-4 3-1 3-1 3 4 3 0 3-1 3 1 3 0 3-3 3-1 3 3 3-1 3-1 3 0 3 1 3 1 3 0 3 0 3-2 3-3"/><path id="r39" d="M886,674l3 2 3-1 3 0 3-1 3-1 3 0 3 3 3 1 3 2 3 2 3 2 3 1 3 1 3 2 3-1 3 0 3 0 3-1 3 0 3 1 3 0 3 2 3 0 3 1 3 0 3 2 3-1 3-1 3 0 3-2 3-2 3-4 3 3 3 4 3 0 3 3 3 1 3 3 3-1 3 1 3-1 3 1 3-1 3-2 3-1 3-1 3-1 3-1 3 1 3 2 3 0 3 2 3 0 3-1 3 1 3 0 3-1 3-2 3-3 3-2 3 2 3-1 3-5 3-4 3 2 3 2 3 2 3 2 3-3 3-1 3-1 3 1 3-2 3-3 3-1 3-3 3-1 3-3 3 1 3 2 3 0 3-3 3 2 3 1 3 2 3-2 3-2 3-2 3-2 3 1 3-2 3 4 3-3 3-3 3-2 3-1 3 2 3 2"/><path id="r40" d="M922,682l3 0 3 2 3 2 3-1 3-2 3-1 3-1 3 0 3 2 3 2 3 3 3 2 3 3 3 2 3 0 3-5 3-3 3 6 3 3 3-2 3 0 3 3 3 1 3 1 3-1 3-1 3-1 3-2 3-2 3 1 3 2 3 1 3 3 3 3 3 2 3 0 3-5 3 1 3 3 3 2 3-2 3-5 3-5 3 4 3 5 3-1 3-2 3-2 3-3 3-1 3-4 3 1 3 2 3 0 3-6 3-3 3 2 3-2 3 2 3 1 3-3 3-3 3 2 3 0 3-1 3 1 3 1 3 2 3 0 3 0 3-2 3-2 3-1 3-3"/><path id="r41" d="M958,694l3 1 3 2 3 3 3 3 3 3 3-2 3-1 3 0 3-1 3 0 3 0 3-2 3-1 3-2 3 2 3 2 3 2 3 2 3 1 3 1 3 2 3 0 3 1 3-4 3-3 3 1 3 4 3 3 3 2 3-1 3 1 3-2 3-2 3-2 3-2 3-2 3-3 3-2 3-2 3-3 3 1 3 0 3 1 3 2 3 1 3-1 3 0 3 1 3 0 3 1"/><path id="r42" d="M994,709l3 1 3-1 3-2 3 1 3 2 3 0 3-3 3 0 3 2 3 2 3 3 3 2 3 2 3 2 3 0 3-2 3-2 3-1 3-1 3-2 3-3 3-1 3 0 3 0 3 2"/>
<clipPath id="tc"><polygon points="464.0,449.0 467.3,448.4 470.6,447.8 474.0,447.6 477.3,447.4 480.6,447.8 484.0,447.6 487.5,446.4 490.9,446.1 494.3,446.1 497.4,446.9 500.5,447.3 503.6,448.6 506.7,448.6 509.8,449.5 513.5,449.2 517.3,449.5 521.0,449.5 522.9,445.9 524.8,444.1 526.6,440.3 528.5,437.4 530.4,434.9 532.2,432.2 534.1,428.5 536.0,426.6 537.8,424.1 539.6,420.4 541.5,418.1 544.4,419.6 547.2,420.0 550.1,421.2 552.7,419.3 555.3,416.9 558.7,416.2 562.1,416.0 567.3,415.2 570.5,414.8 573.8,414.6 577.0,414.2 580.2,415.2 583.6,416.2 587.1,419.2 590.5,420.3 593.9,421.9 597.4,423.5 600.8,425.5 604.2,425.6 607.6,424.9 611.0,424.6 614.5,424.1 617.9,422.0 621.3,420.7 624.8,420.3 628.2,419.6 631.7,417.3 635.1,416.9 637.4,415.2 639.7,412.9 642.0,410.9 644.3,413.5 646.5,415.4 648.8,416.9 654.0,415.2 656.0,417.5 658.0,418.8 660.0,422.0 662.6,419.5 665.1,418.6 667.7,417.6 670.3,414.8 672.9,413.8 675.4,411.6 678.0,410.9 681.0,409.7 684.0,408.6 687.0,408.5 690.0,408.3 692.1,405.5 694.3,402.4 696.5,400.8 698.6,397.9 701.5,399.6 704.3,402.4 707.2,405.6 709.8,402.4 712.3,400.1 714.9,397.9 717.0,395.4 719.0,392.0 721.1,389.8 723.1,387.4 725.2,384.2 728.6,383.4 732.1,384.6 735.5,384.2 738.5,387.2 741.5,390.2 745.1,390.0 748.8,389.3 752.5,388.6 756.1,388.5 759.2,387.1 762.4,386.5 765.5,386.7 767.6,383.9 769.8,381.7 772.0,379.6 774.1,378.2 774.9,374.4 775.7,371.8 776.4,369.1 777.2,366.0 778.0,362.9 778.8,358.6 779.6,356.6 780.4,352.5 781.1,349.2 781.9,346.4 782.7,343.8 783.7,340.6 784.8,336.7 785.8,333.9 786.8,331.1 787.9,328.7 788.9,324.9 789.9,321.8 790.9,318.7 792.0,315.1 793.0,312.9 795.3,310.4 797.6,307.6 799.9,304.3 800.8,301.5 801.6,298.1 802.5,295.3 803.3,292.1 804.2,289.7 808.5,290.6 810.2,286.8 811.9,282.9 812.6,285.9 813.3,288.4 814.0,292.3 814.8,295.1 815.5,297.2 816.2,300.9 816.8,304.3 817.5,307.3 818.1,309.7 818.8,313.0 819.4,316.9 820.0,318.9 820.7,322.7 821.3,326.6 822.0,328.7 822.6,332.2 823.3,336.0 823.9,338.7 825.9,341.4 827.9,343.5 829.9,345.5 832.5,343.8 833.1,340.7 833.8,338.3 834.4,334.2 835.0,332.2 835.7,328.5 836.3,325.9 837.0,322.8 837.6,319.8 839.2,316.3 840.7,314.0 842.3,311.0 843.8,308.7 845.4,305.2 846.8,308.2 848.1,310.7 849.5,313.6 850.8,317.3 852.2,319.8 853.7,322.8 855.2,326.7 856.7,330.2 858.2,333.5 859.6,331.2 861.1,327.1 862.5,324.9 864.0,327.8 865.5,329.8 867.0,333.3 868.5,336.1 872.0,338.7 875.4,341.2 877.1,344.2 878.8,347.2 880.5,349.0 882.2,352.8 884.0,354.8 885.7,357.6 887.4,360.0 889.1,363.6 891.3,361.4 893.6,358.5 895.8,356.9 898.1,355.4 900.3,353.3 902.4,356.2 904.6,358.0 906.8,361.7 908.9,363.9 911.1,366.2 913.2,369.6 915.4,365.9 917.5,361.8 920.5,363.7 923.5,365.3 924.6,361.7 925.7,358.5 926.8,355.4 927.8,352.1 928.9,349.0 930.0,345.5 931.2,342.0 932.4,337.4 933.6,334.3 938.6,333.6 939.1,329.4 939.6,326.2 940.1,323.3 940.7,320.4 941.2,317.8 941.7,313.6 942.2,310.7 946.5,313.6 948.3,315.8 950.1,318.7 952.0,322.0 953.8,324.0 955.6,326.2 957.4,329.5 959.3,332.5 961.1,334.8 962.9,337.2 964.6,340.2 966.2,343.1 967.9,347.2 971.0,348.8 974.1,350.2 977.2,352.9 980.1,355.0 983.0,358.7 985.0,360.7 987.1,363.5 989.1,365.6 991.2,367.3 993.2,370.4 995.3,371.4 997.3,374.4 1001.5,373.8 1005.8,374.4 1009.4,372.4 1013.0,371.5 1015.4,369.5 1017.7,368.1 1020.1,365.8 1025.9,365.8 1027.0,362.3 1028.0,359.9 1029.1,357.0 1030.2,353.2 1031.2,350.7 1032.3,347.2 1035.5,349.1 1038.7,350.1 1044.5,349.4 1047.3,350.2 1050.2,351.5 1053.8,351.8 1057.3,353.6 1059.7,350.4 1062.1,348.2 1064.5,346.5 1070.2,347.9 1073.8,348.7 1077.4,350.1 1079.3,351.5 1081.2,354.4 1083.1,357.2 1087.4,355.9 1091.7,355.1 1094.9,353.5 1098.1,352.9 1100.9,355.2 1103.8,357.2 1105.8,359.6 1107.8,362.1 1109.7,364.7 1111.7,367.2 1114.0,370.0 1116.3,373.0 1119.0,369.2 1121.8,366.0 1124.7,367.6 1127.6,370.6 1130.5,373.0 1131.7,374.9 1132.8,378.6 1136.0,377.9 1139.1,378.6 1142.3,379.3 1145.2,380.0 1148.0,382.2 1150.9,383.3 1154.3,382.0 1157.7,381.9 1161.1,381.7 1163.9,383.0 1166.7,383.7 1169.4,385.5 1172.2,386.4 1175.1,387.4 1177.9,389.3 1180.8,391.9 1185.2,389.6 1186.1,392.0 1187.0,395.1 1187.8,398.3 1188.7,401.4 1190.3,403.3 1191.8,406.5 1193.4,409.2 1197.3,410.8 1198.9,414.1 1200.5,417.1 1202.1,414.2 1203.6,411.4 1205.2,407.3 1206.7,405.3 1208.3,402.2 1210.4,405.0 1212.4,407.8 1214.5,409.4 1216.5,412.0 1218.6,415.5 1220.1,419.5 1224.0,419.7 1228.0,419.5 1229.6,415.6 1231.2,411.6 1234.3,415.5 1237.4,414.0 1240.6,414.0 1242.9,411.6 1245.3,408.6 1247.7,405.7 1250.0,402.9 1251.9,406.3 1253.7,409.2 1255.6,412.4 1258.7,410.3 1261.8,409.2 1265.2,407.3 1268.7,406.7 1272.1,406.1 1272.9,409.1 1273.7,411.4 1274.4,414.3 1275.2,417.2 1276.0,421.0 1279.1,421.0 1282.3,421.9 1285.4,421.6 1288.6,420.7 1291.7,421.8 1294.1,424.6 1296.4,428.2 1298.8,431.3 1301.9,430.1 1305.1,430.5 1307.5,435.2 1311.8,435.5 1316.0,435.2 1316.0,668.0 1030.5,761.0 464.0,551.0"/></clipPath>
<filter id="bl" x="-50%" y="-10%" width="200%" height="120%"><feGaussianBlur stdDeviation="1.2"/></filter>
<filter id="bb" x="-20%" y="-20%" width="140%" height="140%"><feGaussianBlur stdDeviation="10"/></filter>
<linearGradient id="wall" x1="0" y1="0" x2="0" y2="1"><stop offset="0" stop-color="#1c5e64" stop-opacity="0"/><stop offset="0.4" stop-color="#2a6a66" stop-opacity="0.45"/><stop offset="0.75" stop-color="#1a6068" stop-opacity="0.9"/><stop offset="1" stop-color="#125860" stop-opacity="1"/></linearGradient>
<linearGradient id="rg" x1="0" y1="0" x2="0" y2="1"><stop offset="0" stop-color="#b8b8b8"/><stop offset="0.06" stop-color="#a0a0a0"/><stop offset="0.1" stop-color="#7a7a7a"/><stop offset="0.16" stop-color="#686868"/><stop offset="1" stop-color="#686868"/></linearGradient>
<linearGradient id="mg" x1="0" y1="0" x2="0" y2="1" gradientUnits="objectBoundingBox"><stop offset="0" stop-color="#000" stop-opacity="0"/><stop offset="0.3" stop-color="#000" stop-opacity="0.08"/><stop offset="0.7" stop-color="#000" stop-opacity="0.3"/><stop offset="1" stop-color="#000" stop-opacity="0.4"/></linearGradient>
<linearGradient id="sg0" x1="0" y1="0" x2="1" y2="0"><stop offset="0" stop-color="#777"/><stop offset="0.15" stop-color="#a0a0a0"/><stop offset="0.35" stop-color="#8a8a8a"/><stop offset="0.5" stop-color="#585858"/><stop offset="0.62" stop-color="#9a9a9a"/><stop offset="0.85" stop-color="#7c7c7c"/><stop offset="1" stop-color="#777"/></linearGradient>
<linearGradient id="sg1" x1="0" y1="0" x2="1" y2="0"><stop offset="0" stop-color="#8a8a8a"/><stop offset="0.2" stop-color="#606060"/><stop offset="0.45" stop-color="#a4a4a4"/><stop offset="0.7" stop-color="#8c8c8c"/><stop offset="0.85" stop-color="#5e5e5e"/><stop offset="1" stop-color="#8a8a8a"/></linearGradient>
<pattern id="st0" patternUnits="userSpaceOnUse" width="41" height="10"><rect width="41" height="10" fill="url(#sg0)"/></pattern>
<pattern id="st1" patternUnits="userSpaceOnUse" width="33" height="10" patternTransform="translate(13,0)"><rect width="33" height="10" fill="url(#sg1)"/></pattern>
<pattern id="st2" patternUnits="userSpaceOnUse" width="53" height="10" patternTransform="translate(29,0)"><rect width="53" height="10" fill="url(#sg0)"/></pattern>

<filter id="sh" x="-5%" y="-50%" width="110%" height="200%"><feGaussianBlur stdDeviation="1.6"/></filter>
<filter id="bm" x="-10%" y="-10%" width="120%" height="120%"><feGaussianBlur stdDeviation="6"/></filter>
<linearGradient id="wg" x1="0" y1="0" x2="0" y2="1"><stop offset="0" stop-color="#6a7e66" stop-opacity="0.05"/><stop offset="0.25" stop-color="#58806c" stop-opacity="0.45"/><stop offset="0.6" stop-color="#2c686a" stop-opacity="0.92"/><stop offset="1" stop-color="#14565e"/></linearGradient>
</defs>
<g clip-path="url(#tc)">
<rect x="460" y="270" width="860" height="500" fill="#8c8a60"/>
<g filter="url(#bb)">
<ellipse cx="500" cy="466" rx="45" ry="16" fill="#72a062"/>
<ellipse cx="600" cy="455" rx="90" ry="38" fill="#968e62"/>
<ellipse cx="730" cy="470" rx="60" ry="35" fill="#789a60"/>
<ellipse cx="860" cy="570" rx="170" ry="42" fill="#5a9456"/>
<ellipse cx="670" cy="525" rx="80" ry="28" fill="#6e9058"/>
<ellipse cx="610" cy="612" rx="100" ry="25" fill="#6a8e5a"/>
<ellipse cx="930" cy="650" rx="60" ry="28" fill="#769060"/>
</g>
<polygon points="774.1,378.2 774.9,374.4 775.7,371.8 776.4,369.1 777.2,366.0 778.0,362.9 778.8,358.6 779.6,356.6 780.4,352.5 781.1,349.2 781.9,346.4 782.7,343.8 783.7,340.6 784.8,336.7 785.8,333.9 786.8,331.1 787.9,328.7 788.9,324.9 789.9,321.8 790.9,318.7 792.0,315.1 793.0,312.9 795.3,310.4 797.6,307.6 799.9,304.3 800.8,301.5 801.6,298.1 802.5,295.3 803.3,292.1 804.2,289.7 808.5,290.6 810.2,286.8 811.9,282.9 812.6,285.9 813.3,288.4 814.0,292.3 814.8,295.1 815.5,297.2 816.2,300.9 816.8,304.3 817.5,307.3 818.1,309.7 818.8,313.0 819.4,316.9 820.0,318.9 820.7,322.7 821.3,326.6 822.0,328.7 822.6,332.2 823.3,336.0 823.9,338.7 825.9,341.4 827.9,343.5 829.9,345.5 832.5,343.8 833.1,340.7 833.8,338.3 834.4,334.2 835.0,332.2 835.7,328.5 836.3,325.9 837.0,322.8 837.6,319.8 839.2,316.3 840.7,314.0 842.3,311.0 843.8,308.7 845.4,305.2 846.8,308.2 848.1,310.7 849.5,313.6 850.8,317.3 852.2,319.8 853.7,322.8 855.2,326.7 856.7,330.2 858.2,333.5 859.6,331.2 861.1,327.1 862.5,324.9 864.0,327.8 865.5,329.8 867.0,333.3 868.5,336.1 872.0,338.7 875.4,341.2 877.1,344.2 878.8,347.2 880.5,349.0 882.2,352.8 884.0,354.8 885.7,357.6 887.4,360.0 889.1,363.6 891.3,361.4 893.6,358.5 895.8,356.9 898.1,355.4 900.3,353.3 902.4,356.2 904.6,358.0 906.8,361.7 908.9,363.9 911.1,366.2 913.2,369.6 915.4,365.9 917.5,361.8 920.5,363.7 923.5,365.3 924.6,361.7 925.7,358.5 926.8,355.4 927.8,352.1 928.9,349.0 930.0,345.5 931.2,342.0 932.4,337.4 933.6,334.3 938.6,333.6 939.1,329.4 939.6,326.2 940.1,323.3 940.7,320.4 941.2,317.8 941.7,313.6 942.2,310.7 946.5,313.6 948.3,315.8 950.1,318.7 952.0,322.0 953.8,324.0 955.6,326.2 957.4,329.5 959.3,332.5 961.1,334.8 962.9,337.2 964.6,340.2 966.2,343.1 967.9,347.2 971.0,348.8 974.1,350.2 977.2,352.9 980.1,355.0 983.0,358.7 985.0,360.7 987.1,363.5 989.1,365.6 991.2,367.3 993.2,370.4 995.3,371.4 997.3,374.4 1001.5,373.8 1005.8,374.4 1009.4,372.4 1013.0,371.5 1015.4,369.5 1017.7,368.1 1020.1,365.8 1025.9,365.8 1027.0,362.3 1028.0,359.9 1029.1,357.0 1030.2,353.2 1031.2,350.7 1032.3,347.2 1035.5,349.1 1038.7,350.1 1044.5,349.4 1047.3,350.2 1050.2,351.5 1053.8,351.8 1057.3,353.6 1059.7,350.4 1062.1,348.2 1064.5,346.5 1070.2,347.9 1073.8,348.7 1077.4,350.1 1079.3,351.5 1081.2,354.4 1083.1,357.2 1087.4,355.9 1091.7,355.1 1094.9,353.5 1098.1,352.9 1100.9,355.2 1103.8,357.2 1105.8,359.6 1107.8,362.1 1109.7,364.7 1111.7,367.2 1114.0,370.0 1116.3,373.0 1119.0,369.2 1121.8,366.0 1124.7,367.6 1127.6,370.6 1130.5,373.0 1131.7,374.9 1132.8,378.6 1136.0,377.9 1139.1,378.6 1142.3,379.3 1145.2,380.0 1148.0,382.2 1150.9,383.3 1154.3,382.0 1157.7,381.9 1161.1,381.7 1163.9,383.0 1166.7,383.7 1169.4,385.5 1172.2,386.4 1175.1,387.4 1177.9,389.3 1180.8,391.9 1185.2,389.6 1186.1,392.0 1187.0,395.1 1187.8,398.3 1188.7,401.4 1190.3,403.3 1191.8,406.5 1193.4,409.2 1197.3,410.8 1198.9,414.1 1200.5,417.1 1202.1,414.2 1203.6,411.4 1205.2,407.3 1206.7,405.3 1208.3,402.2 1210.4,405.0 1212.4,407.8 1214.5,409.4 1216.5,412.0 1218.6,415.5 1220.1,419.5 1224.0,419.7 1228.0,419.5 1229.6,415.6 1231.2,411.6 1234.3,415.5 1237.4,414.0 1240.6,414.0 1242.9,411.6 1245.3,408.6 1247.7,405.7 1250.0,402.9 1251.9,406.3 1253.7,409.2 1255.6,412.4 1258.7,410.3 1261.8,409.2 1265.2,407.3 1268.7,406.7 1272.1,406.1 1272.9,409.1 1273.7,411.4 1274.4,414.3 1275.2,417.2 1276.0,421.0 1279.1,421.0 1282.3,421.9 1285.4,421.6 1288.6,420.7 1291.7,421.8 1294.1,424.6 1296.4,428.2 1298.8,431.3 1301.9,430.1 1305.1,430.5 1307.5,435.2 1311.8,435.5 1316.0,435.2 1316.0,618.0 1204.0,599.0 1089.0,571.0 983.0,556.0 900.0,530.0 840.0,500.0 800.0,470.0 772.0,420.0" fill="#84744a" filter="url(#bm)"/>
<g filter="url(#bb)"><ellipse cx="803" cy="350" rx="26" ry="55" fill="#5f5337"/><ellipse cx="1250" cy="520" rx="50" ry="60" fill="#6e6040"/></g>
<g style="mix-blend-mode:overlay">
<rect x="460" y="270" width="860" height="500" fill="#808080"/>
<use href="#m0" fill="url(#st0)"/><use href="#m0" fill="url(#mg)"/><g filter="url(#bl)"><path d="M928,332l-3 65" stroke="#2a2a2a" stroke-width="2.5" stroke-opacity="0.43"/><path d="M853,310l0 107" stroke="#222" stroke-width="3.2" stroke-opacity="0.25"/><path d="M1102,392l2 56" stroke="#222" stroke-width="1.6" stroke-opacity="0.30"/><path d="M835,360l0 104" stroke="#c8c8c8" stroke-width="2.5" stroke-opacity="0.47"/><path d="M844,331l0 90" stroke="#222" stroke-width="3.2" stroke-opacity="0.26"/><path d="M778,375l-3 53" stroke="#2a2a2a" stroke-width="2.2" stroke-opacity="0.48"/><path d="M1297,437l-1 32" stroke="#2a2a2a" stroke-width="1.9" stroke-opacity="0.27"/><path d="M934,369l-5 109" stroke="#333" stroke-width="1.7" stroke-opacity="0.40"/><path d="M1081,391l-1 27" stroke="#2a2a2a" stroke-width="2.4" stroke-opacity="0.36"/><path d="M1216,434l-3 53" stroke="#333" stroke-width="3.5" stroke-opacity="0.39"/></g><path d="M460,489l3 0 3 0 3 0 3-1 3 0 3 0 3 0 3-1 3 0 3 0 3-1 3 0 3 1 3 1 3 0 3 1 3 1 3 0 3 0 3 0 3-4 3-4 3-5 3-5 3-4 3-5 3-4 3 0 3 1 3 1 3-2 3-2 3-1 3 0 3 0 3-1 3 0 3 0 3 0 3 0 3 2 3 1 3 2 3 1 3 2 3 1 3 1 3 0 3 0 3 0 3-1 3-1 3-1 3-1 3-1 3-1 3-1 3-1 3-2 3-2 3-1 3 2 3 3 3-1 3 0 3 4 3 1 3-1 3-2 3-2 3-2 3-2 3-1 3-1 3-1 3 0 3-2 3-4 3-3 3-1 3 3 3 3 3-1 3-3 3-3 3-4 3-4 3-4 3-2 3 0 3 0 3 1 3 3 3 2 3 0 3-1 3 0 3 0 3-1 3 0 3-1 3-1 3-3 3-36 3-4 3-10 3-9 3-8 3-7 3-6 3-7 3-2 3-3 3-6 3-6 3 1 3-4 3 6 3 11 3 13 3 13 3 6 3 3 3 0 3-10 3-10 3-6 3-12 3-9 3-6 3-7 3-7 3-11 3-5 3 18 3 18 3 15 3 14 3 13 3 12 3 5 3 5 3 4 3-2 3-2 3-2 3-1 3 4 3 3 3 3 3 4 3-4 3-2 3-1 3-27 3-31 3 23 3 13 3 0 3-7 3-12 3 2 3 4 3 3 3 4 3 4 3 2 3 2 3 3 3 0 3-1 3-2 3 0 3-1 3-6 3-6 3-8 3-7 3 1 3 11 3 10 3 10 3 8 3 7 3 5 3 4 3 0 3 0 3-2 3-8 3-5 3 1 3 1 3 0 3 0 3 1 3 1 3 1 3 1 3-3 3-2 3-1 3 1 3 1 3 1 3 1 3 3 3 2 3 0 3-1 3-1 3 0 3 0 3 2 3 2 3 4 3 3 3 3 3 2 3-3 3-1 3 2 3 0 3 0 3-2 3-5 3-4 3-5 3 1 3 7 3 5 3 5 3 4 3 4 3 3 3 2 3 1 3 1 3 2 3 2 3-1 3 2 3 8 3 4 3 3 3 2 3-1 3-13 3-15 3-7 3 14 3 13 3 5 3-5 3-9 3-10 3 0 3 8 3 3 3 5 3-15 3-29 3-14 3 30 3 14 3-8 3-10 3-9 3-11 3-9 3 9 3 20 3 10 3 5 3-9 3-2 3 10 3 12 3 12 3-14 3-22 3-5 3 25 3 20 3 16 3 8 3 0" fill="none" stroke="#000" stroke-width="1.2" stroke-opacity="0.6" stroke-dasharray="72 14 41 35 67 17 27 34 57 17"/><use href="#m1" fill="url(#st1)"/><use href="#m1" fill="url(#mg)"/><g filter="url(#bl)"><path d="M1135,363l-2 78" stroke="#333" stroke-width="3.0" stroke-opacity="0.30"/><path d="M1183,372l-5 108" stroke="#333" stroke-width="3.3" stroke-opacity="0.28"/><path d="M1201,450l1 41" stroke="#222" stroke-width="2.4" stroke-opacity="0.35"/><path d="M772,392l-5 45" stroke="#2a2a2a" stroke-width="2.2" stroke-opacity="0.49"/><path d="M1087,358l-5 98" stroke="#2a2a2a" stroke-width="2.6" stroke-opacity="0.33"/><path d="M913,390l-1 71" stroke="#2a2a2a" stroke-width="3.4" stroke-opacity="0.45"/><path d="M1102,381l2 59" stroke="#2a2a2a" stroke-width="1.8" stroke-opacity="0.40"/><path d="M1192,409l-4 106" stroke="#333" stroke-width="2.2" stroke-opacity="0.47"/><path d="M1045,403l0 34" stroke="#333" stroke-width="2.8" stroke-opacity="0.47"/><path d="M1036,361l2 61" stroke="#333" stroke-width="2.1" stroke-opacity="0.49"/><path d="M1042,393l-1 57" stroke="#333" stroke-width="3.0" stroke-opacity="0.33"/><path d="M844,299l-1 60" stroke="#2a2a2a" stroke-width="2.5" stroke-opacity="0.32"/><path d="M1192,409l-2 27" stroke="#c8c8c8" stroke-width="2.1" stroke-opacity="0.45"/><path d="M1060,382l-2 26" stroke="#2a2a2a" stroke-width="3.4" stroke-opacity="0.45"/></g><path d="M460,489l3 0 3 0 3 0 3-1 3 0 3 0 3 0 3-1 3 0 3 0 3-1 3 0 3 1 3 1 3 0 3 1 3 1 3 0 3 0 3 0 3-4 3-4 3-5 3-5 3-4 3-5 3-4 3 0 3 1 3 1 3-2 3-2 3-1 3 0 3 0 3-1 3 0 3 0 3 0 3 0 3 2 3 1 3 2 3 1 3 2 3 1 3 1 3 0 3 0 3 0 3-1 3-1 3-1 3-1 3-1 3-1 3-1 3-1 3-2 3-2 3-1 3 2 3 3 3-1 3 0 3 4 3 1 3-1 3-2 3-2 3-2 3-2 3-1 3-1 3-1 3 0 3-2 3-4 3-3 3-1 3 3 3 3 3-1 3-3 3-3 3-4 3-4 3-4 3-2 3 0 3 0 3 1 3 3 3 2 3 0 3-1 3 0 3 0 3-1 3 0 3-1 3-1 3-3 3-33 3-3 3-7 3-8 3-7 3-6 3-5 3-6 3-5 3-6 3-11 3-12 3-2 3-1 3-1 3 4 3 4 3 10 3 13 3 10 3 7 3-11 3-20 3-14 3-16 3-11 3-5 3 18 3 18 3-2 3 7 3 15 3 15 3 12 3 10 3 10 3 6 3 1 3-8 3-11 3 10 3 11 3 0 3-4 3 0 3 0 3 0 3-1 3-5 3 2 3 4 3-8 3-12 3-11 3 0 3 6 3-2 3-5 3 7 3 6 3 6 3 3 3 4 3 3 3 4 3 5 3 3 3 1 3 2 3 2 3 3 3 2 3 3 3 2 3 3 3 3 3 0 3-12 3-29 3-6 3 30 3 14 3-4 3-13 3-15 3-20 3-25 3 1 3 19 3 18 3 15 3 10 3 1 3-2 3-5 3-6 3-10 3-10 3-9 3 10 3 9 3-15 3-25 3 13 3 20 3-16 3 3 3-21 3-1 3 21 3 21 3 19 3 15 3-1 3-11 3-15 3-22 3-8 3 22 3-10 3-16 3 8 3 5 3 13 3 12 3 1 3 9 3 7 3 7 3 6 3 6 3 4 3-6 3-9 3-10 3-10 3-11 3-14 3-2 3 21 3 17 3 15 3 13 3 13 3 4 3 0 3 0 3 3 3 3 3 3 3 3 3 0 3 0 3-6 3 3 3 0 3-1 3-2 3-3 3-8 3-4 3-3 3-8 3-9 3-9 3-5 3-1 3-10 3 19 3 12 3 12 3 10 3-2 3-12 3-12 3-13 3-9 3 16 3 2 3-12 3 5 3 14 3 13 3 12" fill="none" stroke="#000" stroke-width="1.2" stroke-opacity="0.6" stroke-dasharray="51 39 54 17 56 26 83 38 86 15"/><use href="#m2" fill="url(#st2)"/><use href="#m2" fill="url(#mg)"/><g filter="url(#bl)"><path d="M787,369l1 28" stroke="#222" stroke-width="3.0" stroke-opacity="0.32"/><path d="M1072,368l-5 99" stroke="#333" stroke-width="2.4" stroke-opacity="0.33"/><path d="M1210,464l-5 66" stroke="#2a2a2a" stroke-width="1.8" stroke-opacity="0.32"/><path d="M1234,420l-1 49" stroke="#333" stroke-width="1.6" stroke-opacity="0.31"/><path d="M895,413l-2 68" stroke="#333" stroke-width="3.2" stroke-opacity="0.36"/><path d="M1057,346l0 40" stroke="#222" stroke-width="1.7" stroke-opacity="0.42"/><path d="M1237,432l1 75" stroke="#333" stroke-width="3.3" stroke-opacity="0.37"/><path d="M955,396l3 34" stroke="#222" stroke-width="3.0" stroke-opacity="0.26"/><path d="M1117,423l-4 82" stroke="#333" stroke-width="1.7" stroke-opacity="0.48"/><path d="M1213,459l1 94" stroke="#333" stroke-width="2.2" stroke-opacity="0.31"/><path d="M970,414l1 104" stroke="#2a2a2a" stroke-width="2.3" stroke-opacity="0.43"/><path d="M1009,433l0 80" stroke="#c8c8c8" stroke-width="2.5" stroke-opacity="0.40"/></g><path d="M460,489l3 0 3 0 3 0 3-1 3 0 3 0 3 0 3-1 3 0 3 0 3-1 3 0 3 1 3 1 3 0 3 1 3 1 3 0 3 0 3 0 3-4 3-4 3-5 3-5 3-4 3-5 3-4 3 0 3 1 3 1 3-2 3-2 3-1 3 0 3 0 3-1 3 0 3 0 3 0 3 0 3 2 3 1 3 2 3 1 3 2 3 1 3 1 3 0 3 0 3 0 3-1 3-1 3-1 3-1 3-1 3-1 3-1 3-1 3-2 3-2 3-1 3 2 3 3 3-1 3 0 3 4 3 1 3-1 3-2 3-2 3-2 3-2 3-1 3-1 3-1 3 0 3-2 3-4 3-3 3-1 3 3 3 3 3-1 3-3 3-3 3-4 3-4 3-4 3-2 3 0 3 0 3 1 3 3 3 2 3 0 3-1 3 0 3 0 3-1 3 0 3-1 3-1 3-3 3-29 3-2 3-7 3-7 3-6 3-4 3-5 3-4 3-1 3-1 3-12 3-20 3-17 3 9 3 22 3 21 3 12 3 10 3 6 3-1 3-6 3-17 3-9 3 5 3 4 3 6 3 5 3 5 3 5 3-3 3-13 3-9 3 6 3 14 3 12 3 7 3 3 3 4 3 4 3 4 3-1 3-2 3-1 3-1 3 3 3 1 3-2 3-4 3-10 3-8 3-6 3 2 3 2 3-4 3-30 3-5 3 20 3 11 3 6 3 3 3 4 3 3 3 3 3 3 3 4 3 5 3 2 3 2 3 1 3 2 3-7 3-21 3-26 3 22 3 27 3 20 3 0 3 0 3 0 3 0 3-1 3-1 3-2 3-1 3 0 3-2 3-6 3-8 3-5 3-6 3-14 3-29 3 5 3 3 3-10 3-10 3 3 3 8 3 9 3-10 3 12 3-6 3-17 3 11 3 19 3 17 3-4 3 16 3 13 3 6 3 2 3 2 3-6 3-17 3 9 3 9 3-10 3-10 3-8 3-9 3 8 3 12 3 10 3 9 3-2 3-7 3-9 3-9 3 0 3 10 3 9 3 10 3 9 3 1 3-6 3-6 3-6 3-9 3 7 3 16 3 11 3 10 3 8 3 9 3 0 3-3 3-4 3-5 3-6 3-8 3-9 3-12 3-13 3-6 3 15 3 13 3 11 3 9 3 7 3 6 3 5 3 4 3-5 3-8 3-8 3-9 3-10 3 3 3 0 3-8 3 4 3 9 3 8 3 7 3 10 3 9 3 8 3 4 3 3 3 2 3 0 3 0 3 0 3 0" fill="none" stroke="#000" stroke-width="1.2" stroke-opacity="0.6" stroke-dasharray="47 19 70 12 32 10 24 19 45 20"/><use href="#m3" fill="url(#st0)"/><use href="#m3" fill="url(#mg)"/><g filter="url(#bl)"><path d="M1090,421l3 39" stroke="#222" stroke-width="3.2" stroke-opacity="0.46"/><path d="M997,446l-2 104" stroke="#222" stroke-width="3.3" stroke-opacity="0.37"/><path d="M1183,469l-5 29" stroke="#333" stroke-width="2.5" stroke-opacity="0.45"/><path d="M850,377l-1 95" stroke="#c8c8c8" stroke-width="2.8" stroke-opacity="0.47"/><path d="M1240,479l3 79" stroke="#333" stroke-width="2.0" stroke-opacity="0.48"/><path d="M1291,496l-4 108" stroke="#333" stroke-width="3.2" stroke-opacity="0.30"/><path d="M1135,458l1 70" stroke="#c8c8c8" stroke-width="2.6" stroke-opacity="0.34"/><path d="M931,419l3 83" stroke="#333" stroke-width="1.7" stroke-opacity="0.33"/><path d="M862,344l-3 94" stroke="#2a2a2a" stroke-width="1.8" stroke-opacity="0.27"/></g><path d="M460,489l3 0 3 0 3 0 3-1 3 0 3 0 3 0 3-1 3 0 3 0 3-1 3 0 3 1 3 1 3 0 3 1 3 1 3 0 3 0 3 0 3-4 3-4 3-5 3-5 3-4 3-5 3-4 3 0 3 1 3 1 3-2 3-2 3-1 3 0 3 0 3-1 3 0 3 0 3 0 3 0 3 2 3 1 3 2 3 1 3 2 3 1 3 1 3 0 3 0 3 0 3-1 3-1 3-1 3-1 3-1 3-1 3-1 3-1 3-2 3-2 3-1 3 2 3 3 3-1 3 0 3 4 3 1 3-1 3-2 3-2 3-2 3-2 3-1 3-1 3-1 3 0 3-2 3-4 3-3 3-1 3 3 3 3 3-1 3-3 3-3 3-4 3-4 3-4 3-2 3 0 3 0 3 1 3 3 3 2 3 0 3-1 3 0 3 0 3-1 3 0 3-1 3-1 3-3 3-42 3-6 3-8 3-1 3-3 3-1 3-1 3-1 3-10 3-16 3-21 3-21 3 19 3 15 3 20 3 21 3 16 3 3 3-8 3-17 3 4 3 21 3 1 3-3 3-5 3-3 3 0 3-5 3-5 3-9 3-15 3-4 3 16 3 14 3 13 3 13 3 9 3 6 3 5 3 6 3 0 3 1 3 0 3 0 3 3 3 3 3 3 3 2 3-2 3-1 3 1 3-2 3-5 3-6 3-4 3 0 3-6 3-8 3 2 3 3 3 3 3 3 3 3 3 3 3 3 3 4 3 3 3 1 3 2 3 2 3 2 3 2 3 2 3 3 3 2 3 2 3 0 3 1 3 0 3-1 3 0 3-4 3-5 3-5 3-6 3-13 3-18 3-17 3-13 3-5 3 14 3 14 3 14 3 10 3 6 3 6 3 4 3 2 3 2 3-3 3-7 3-8 3-4 3 11 3 2 3-10 3 8 3 9 3 6 3 3 3 2 3 2 3 2 3 3 3 3 3 1 3-2 3 0 3 1 3 2 3 3 3 2 3 0 3 1 3 1 3 1 3 1 3 0 3 0 3 0 3 1 3 1 3 1 3 1 3 1 3 2 3 1 3 0 3 1 3 6 3 4 3 2 3 2 3 3 3-6 3-7 3-5 3-2 3-4 3-3 3-5 3-5 3 7 3 2 3 8 3 6 3 5 3 3 3 2 3-1 3 2 3 3 3 0 3-1 3 0 3-1 3 0 3 2 3 7 3 1 3 0 3 0 3 1 3 0 3 2 3 3 3 1 3 0 3 1 3 2 3 1 3 0 3 0 3 0" fill="none" stroke="#000" stroke-width="1.2" stroke-opacity="0.6" stroke-dasharray="51 13 74 23 55 11 83 23 26 20"/><use href="#m4" fill="url(#st1)"/><use href="#m4" fill="url(#mg)"/><g filter="url(#bl)"><path d="M1102,451l-5 83" stroke="#333" stroke-width="1.6" stroke-opacity="0.39"/><path d="M1198,496l1 84" stroke="#2a2a2a" stroke-width="2.4" stroke-opacity="0.30"/><path d="M925,404l-2 72" stroke="#2a2a2a" stroke-width="2.2" stroke-opacity="0.45"/><path d="M1219,501l-3 59" stroke="#333" stroke-width="3.2" stroke-opacity="0.37"/><path d="M1069,447l-2 33" stroke="#2a2a2a" stroke-width="3.1" stroke-opacity="0.44"/><path d="M1192,493l-2 83" stroke="#222" stroke-width="2.3" stroke-opacity="0.25"/><path d="M1246,497l1 76" stroke="#333" stroke-width="1.5" stroke-opacity="0.42"/><path d="M937,412l3 68" stroke="#c8c8c8" stroke-width="2.9" stroke-opacity="0.35"/><path d="M1315,518l1 81" stroke="#333" stroke-width="2.2" stroke-opacity="0.40"/><path d="M1261,500l-4 42" stroke="#2a2a2a" stroke-width="1.6" stroke-opacity="0.44"/><path d="M1093,453l-1 51" stroke="#222" stroke-width="3.4" stroke-opacity="0.31"/></g><path d="M460,489l3 0 3 0 3 0 3-1 3 0 3 0 3 0 3-1 3 0 3 0 3-1 3 0 3 1 3 1 3 0 3 1 3 1 3 0 3 0 3 0 3-4 3-4 3-5 3-5 3-4 3-5 3-4 3 0 3 1 3 1 3-2 3-2 3-1 3 0 3 0 3-1 3 0 3 0 3 0 3 0 3 2 3 1 3 2 3 1 3 2 3 1 3 1 3 0 3 0 3 0 3-1 3-1 3-1 3-1 3-1 3-1 3-1 3-1 3-2 3-2 3-1 3 2 3 3 3-1 3 0 3 4 3 1 3-1 3-2 3-2 3-2 3-2 3-1 3-1 3-1 3 0 3-2 3-4 3-3 3-1 3 3 3 3 3-1 3-3 3-3 3-4 3-4 3-4 3-2 3 0 3 0 3 1 3 3 3 2 3 0 3-1 3 0 3 0 3-1 3 0 3-1 3-1 3-3 3-23 3-1 3-4 3-5 3-4 3-2 3-3 3-3 3 0 3 0 3-3 3-3 3 0 3-4 3 3 3 6 3 7 3 8 3 2 3 2 3 4 3-7 3-11 3-8 3-5 3 6 3 9 3 9 3 9 3 6 3 0 3 3 3 4 3 2 3 2 3 0 3-1 3-1 3-2 3-1 3 12 3 8 3-1 3 0 3 2 3 3 3 3 3 2 3-2 3-1 3-11 3-27 3-4 3 21 3 0 3-9 3-15 3-18 3 11 3 13 3 12 3 10 3 4 3 3 3 3 3 3 3 0 3 0 3-12 3-16 3-6 3 21 3 9 3-1 3 2 3 5 3 4 3 3 3 2 3 2 3 2 3 1 3 1 3-3 3-4 3-6 3-10 3-9 3 1 3 6 3 6 3 4 3-17 3-34 3 29 3 28 3 3 3-2 3 0 3 0 3 1 3 1 3 1 3 2 3 2 3-1 3 0 3 0 3 0 3 0 3-1 3-2 3-3 3-5 3-7 3-8 3 2 3-2 3 8 3 8 3-1 3-7 3-8 3-10 3-9 3 7 3 11 3 9 3 9 3 9 3 8 3 8 3 6 3 4 3 1 3 2 3 1 3 0 3 1 3 6 3 3 3 2 3 2 3 2 3-3 3-3 3 1 3 2 3 2 3 3 3 2 3 0 3 0 3-4 3 2 3 0 3 0 3-1 3-2 3-2 3 2 3 3 3 0 3-1 3-5 3-11 3-2 3 10 3 3 3-1 3 4 3-9 3-12 3-13 3-11 3 17 3 15 3 12 3 11 3 10 3 0 3 1 3 0 3 0" fill="none" stroke="#000" stroke-width="1.2" stroke-opacity="0.6" stroke-dasharray="58 30 46 38 86 13 35 23 63 35"/><use href="#m5" fill="url(#st2)"/><use href="#m5" fill="url(#mg)"/><g filter="url(#bl)"><path d="M1303,527l0 106" stroke="#222" stroke-width="1.7" stroke-opacity="0.27"/><path d="M775,396l2 52" stroke="#333" stroke-width="3.3" stroke-opacity="0.50"/><path d="M835,418l1 59" stroke="#c8c8c8" stroke-width="1.5" stroke-opacity="0.50"/><path d="M1033,429l2 36" stroke="#222" stroke-width="2.3" stroke-opacity="0.34"/><path d="M1213,503l-5 89" stroke="#2a2a2a" stroke-width="1.7" stroke-opacity="0.37"/><path d="M1003,426l0 88" stroke="#333" stroke-width="2.3" stroke-opacity="0.32"/><path d="M1225,514l-4 79" stroke="#222" stroke-width="2.1" stroke-opacity="0.33"/><path d="M1255,513l1 61" stroke="#333" stroke-width="3.5" stroke-opacity="0.32"/><path d="M874,432l1 107" stroke="#c8c8c8" stroke-width="3.5" stroke-opacity="0.39"/><path d="M1051,418l-4 97" stroke="#333" stroke-width="2.4" stroke-opacity="0.28"/></g><path d="M460,489l3 0 3 0 3 0 3-1 3 0 3 0 3 0 3-1 3 0 3 0 3-1 3 0 3 1 3 1 3 0 3 1 3 1 3 0 3 0 3 0 3-4 3-4 3-5 3-5 3-4 3-5 3-4 3 0 3 1 3 1 3-2 3-2 3-1 3 0 3 0 3-1 3 0 3 0 3 0 3 0 3 2 3 1 3 2 3 1 3 2 3 1 3 1 3 0 3 0 3 0 3-1 3-1 3-1 3-1 3-1 3-1 3-1 3-1 3-2 3-2 3-1 3 2 3 3 3-1 3 0 3 4 3 1 3-1 3-2 3-2 3-2 3-2 3-1 3-1 3-1 3 0 3-2 3-4 3-3 3-1 3 3 3 3 3-1 3-3 3-3 3-4 3-4 3-4 3-2 3 0 3 0 3 1 3 3 3 2 3 0 3-1 3 0 3 0 3-1 3 0 3-1 3-1 3-3 3-21 3-7 3-12 3-13 3 3 3 7 3 5 3-4 3-2 3-1 3 1 3 0 3 3 3 1 3 5 3 8 3 8 3 9 3 4 3 3 3 1 3-5 3-5 3-2 3-2 3 1 3 4 3 4 3 4 3 3 3-3 3 3 3 3 3 3 3 1 3 3 3 3 3 3 3 4 3 3 3-1 3 0 3-1 3 0 3-2 3-9 3-11 3-12 3-5 3 15 3 15 3 10 3-10 3-12 3-12 3-8 3-14 3-16 3-9 3 8 3 13 3 12 3 12 3 11 3-3 3-4 3-7 3 2 3 11 3-16 3 1 3 25 3 1 3 5 3-19 3 8 3 17 3-17 3 4 3 14 3-8 3-9 3-10 3-9 3 5 3 7 3 5 3 5 3 8 3 8 3-6 3-7 3-7 3-7 3 1 3-10 3-8 3 13 3 13 3 13 3 12 3 0 3-6 3-6 3-8 3-9 3-10 3-10 3 9 3 10 3 11 3 11 3 10 3 10 3 8 3 6 3-2 3 0 3 1 3 2 3 3 3 1 3 1 3 0 3 1 3 1 3 1 3 0 3 1 3 0 3 0 3 1 3-10 3-14 3-16 3-17 3 10 3 18 3 1 3-1 3-1 3 9 3 8 3 8 3 4 3 2 3 6 3 6 3 6 3 4 3 2 3 0 3 0 3-3 3 1 3 0 3 0 3-1 3-1 3-2 3 1 3 3 3 0 3 0 3 0 3-1 3 0 3 2 3 6 3 0 3 1 3 0 3 0 3 0 3 2 3 3 3 1 3 0 3 1 3 2 3 0 3 0 3 0 3 0" fill="none" stroke="#000" stroke-width="1.2" stroke-opacity="0.6" stroke-dasharray="66 9 22 24 78 32 86 13 26 21"/><use href="#m6" fill="url(#st0)"/><use href="#m6" fill="url(#mg)"/><g filter="url(#bl)"><path d="M784,391l-1 60" stroke="#333" stroke-width="1.6" stroke-opacity="0.38"/><path d="M1051,459l3 100" stroke="#222" stroke-width="2.1" stroke-opacity="0.36"/><path d="M1027,461l1 73" stroke="#2a2a2a" stroke-width="3.5" stroke-opacity="0.33"/><path d="M1147,489l3 29" stroke="#333" stroke-width="2.7" stroke-opacity="0.27"/><path d="M1246,517l1 50" stroke="#2a2a2a" stroke-width="1.8" stroke-opacity="0.34"/><path d="M1219,509l2 25" stroke="#333" stroke-width="1.6" stroke-opacity="0.44"/><path d="M985,474l0 100" stroke="#2a2a2a" stroke-width="2.0" stroke-opacity="0.32"/><path d="M862,425l-1 46" stroke="#222" stroke-width="2.3" stroke-opacity="0.41"/><path d="M835,410l-3 84" stroke="#c8c8c8" stroke-width="2.7" stroke-opacity="0.39"/><path d="M1003,477l2 72" stroke="#222" stroke-width="1.6" stroke-opacity="0.46"/><path d="M1219,509l-5 82" stroke="#222" stroke-width="2.7" stroke-opacity="0.28"/></g><path d="M460,489l3 0 3 0 3 0 3-1 3 0 3 0 3 0 3-1 3 0 3 0 3-1 3 0 3 1 3 1 3 0 3 1 3 1 3 0 3 0 3 0 3-4 3-4 3-5 3-5 3-4 3-5 3-4 3 0 3 1 3 1 3-2 3-2 3-1 3 0 3 0 3-1 3 0 3 0 3 0 3 0 3 2 3 1 3 2 3 1 3 2 3 1 3 1 3 0 3 0 3 0 3-1 3-1 3-1 3-1 3-1 3-1 3-1 3-1 3-2 3-2 3-1 3 2 3 3 3-1 3 0 3 4 3 1 3-1 3-2 3-2 3-2 3-2 3-1 3-1 3-1 3 0 3-2 3-4 3-3 3-1 3 3 3 3 3-1 3-3 3-3 3-4 3-4 3-4 3-2 3 0 3 0 3 1 3 3 3 2 3 0 3-1 3 0 3 0 3-1 3 0 3-1 3-1 3-3 3-24 3 0 3 0 3-5 3-4 3-4 3-4 3-1 3 0 3-2 3-6 3-2 3 5 3 3 3 7 3 11 3 11 3 10 3 7 3-16 3-21 3 20 3 13 3-1 3-1 3-1 3-8 3-11 3 9 3 17 3-2 3-1 3 8 3 7 3 4 3 3 3 3 3 3 3 3 3 3 3 0 3-1 3 0 3 0 3 2 3 2 3-1 3-1 3-6 3-4 3-4 3-6 3-9 3-8 3 2 3 6 3 1 3-1 3 6 3 6 3 6 3-1 3-2 3-3 3-4 3 6 3 8 3 6 3 6 3 6 3 3 3 1 3 2 3 2 3 2 3 1 3 1 3-4 3-7 3-9 3-11 3-11 3-8 3 11 3 10 3 9 3 4 3 4 3 3 3-1 3-3 3-3 3-3 3-3 3 4 3 4 3 3 3-4 3-7 3-6 3-8 3-7 3-8 3-8 3 5 3 9 3 8 3 9 3 7 3 8 3 7 3 0 3-3 3-3 3-3 3-5 3-13 3-2 3 9 3 8 3 8 3 7 3 6 3 5 3 1 3-1 3-2 3 1 3 1 3-6 3-3 3 7 3 6 3 3 3-3 3-3 3 4 3 5 3 5 3 8 3 4 3 2 3 1 3 2 3-2 3-2 3 0 3 2 3-4 3-6 3-8 3-10 3-11 3-13 3 13 3 11 3 10 3 9 3 6 3 4 3-3 3-4 3-7 3-8 3-9 3-9 3 1 3 11 3 10 3-6 3-6 3 6 3 6 3 7 3 7 3 8 3 6 3 4 3 4 3 2 3 0 3 1 3 0 3 0" fill="none" stroke="#000" stroke-width="1.2" stroke-opacity="0.6" stroke-dasharray="87 36 48 15 28 13 25 12 78 27"/><use href="#m7" fill="url(#st1)"/><use href="#m7" fill="url(#mg)"/><g filter="url(#bl)"><path d="M1237,529l1 59" stroke="#c8c8c8" stroke-width="1.6" stroke-opacity="0.36"/><path d="M1291,525l3 49" stroke="#222" stroke-width="2.1" stroke-opacity="0.34"/><path d="M1174,518l-2 57" stroke="#333" stroke-width="1.7" stroke-opacity="0.38"/><path d="M1291,525l-1 57" stroke="#222" stroke-width="2.1" stroke-opacity="0.36"/><path d="M1117,474l1 28" stroke="#333" stroke-width="2.8" stroke-opacity="0.30"/><path d="M958,446l-3 99" stroke="#222" stroke-width="2.1" stroke-opacity="0.46"/><path d="M1174,518l-1 51" stroke="#2a2a2a" stroke-width="1.8" stroke-opacity="0.41"/><path d="M1159,514l-3 64" stroke="#222" stroke-width="2.7" stroke-opacity="0.36"/><path d="M1141,489l-2 109" stroke="#333" stroke-width="1.8" stroke-opacity="0.27"/><path d="M1144,502l-3 46" stroke="#c8c8c8" stroke-width="3.1" stroke-opacity="0.37"/><path d="M916,474l0 74" stroke="#2a2a2a" stroke-width="2.9" stroke-opacity="0.39"/></g><path d="M460,489l3 0 3 0 3 0 3-1 3 0 3 0 3 0 3-1 3 0 3 0 3-1 3 0 3 1 3 1 3 0 3 1 3 1 3 0 3 0 3 0 3-4 3-4 3-5 3-5 3-4 3-5 3-4 3 0 3 1 3 1 3-2 3-2 3-1 3 0 3 0 3-1 3 0 3 0 3 0 3 0 3 2 3 1 3 2 3 1 3 2 3 1 3 1 3 0 3 0 3 0 3-1 3-1 3-1 3-1 3-1 3-1 3-1 3-1 3-2 3-2 3-1 3 2 3 3 3-1 3 0 3 4 3 1 3-1 3-2 3-2 3-2 3-2 3-1 3-1 3-1 3 0 3-2 3-4 3-3 3-1 3 3 3 3 3-1 3-3 3-3 3-4 3-4 3-4 3-2 3 0 3 0 3 1 3 3 3 2 3 0 3-1 3 0 3 0 3-1 3 0 3-1 3-1 3-3 3-14 3 1 3-2 3-1 3-1 3 0 3 0 3-1 3 2 3 2 3-1 3-2 3 0 3-5 3 0 3 1 3 2 3 2 3-1 3 9 3 6 3 2 3 1 3 4 3 2 3 3 3 3 3 0 3-2 3-3 3-1 3 8 3 3 3-1 3-3 3-4 3-6 3-2 3 9 3 8 3 4 3 4 3 4 3 4 3 6 3 5 3 4 3 2 3-1 3 0 3 1 3-6 3-11 3-12 3-13 3-11 3 4 3 6 3 11 3-11 3-23 3 11 3 25 3 21 3 7 3 3 3 2 3 1 3 1 3 2 3 2 3 1 3-3 3-5 3-7 3-7 3-9 3-9 3 6 3 2 3-8 3 2 3-10 3 9 3 9 3 8 3 4 3 5 3 7 3 6 3 1 3 0 3 1 3 1 3-2 3-2 3-5 3-5 3-5 3-4 3-4 3-5 3 1 3 7 3 5 3 6 3 4 3 5 3-2 3-5 3-3 3-4 3-3 3-4 3 3 3 7 3 5 3-2 3 13 3-10 3-13 3-9 3 17 3 15 3 13 3 9 3 1 3 0 3 1 3 0 3 0 3 1 3 1 3 1 3 1 3 2 3 1 3 0 3 1 3 4 3 3 3 1 3 2 3 2 3-2 3-3 3-3 3-1 3-2 3-2 3-2 3-4 3 4 3 2 3 5 3 4 3 3 3 2 3 0 3-1 3 1 3 2 3 1 3-1 3 0 3-1 3-7 3-8 3 7 3 9 3 1 3-4 3-4 3-5 3-3 3-1 3 7 3 5 3 6 3 6 3 4 3 3 3 1 3 0" fill="none" stroke="#000" stroke-width="1.2" stroke-opacity="0.6" stroke-dasharray="35 21 23 29 81 39 86 26 62 11"/><use href="#m8" fill="url(#st2)"/><use href="#m8" fill="url(#mg)"/><g filter="url(#bl)"><path d="M1057,496l1 58" stroke="#222" stroke-width="2.9" stroke-opacity="0.30"/><path d="M1078,498l1 101" stroke="#333" stroke-width="3.4" stroke-opacity="0.32"/><path d="M1264,532l-4 90" stroke="#2a2a2a" stroke-width="3.2" stroke-opacity="0.48"/><path d="M1099,489l-2 95" stroke="#c8c8c8" stroke-width="1.9" stroke-opacity="0.40"/><path d="M1279,538l0 107" stroke="#333" stroke-width="2.8" stroke-opacity="0.43"/><path d="M1123,480l-1 55" stroke="#333" stroke-width="1.9" stroke-opacity="0.39"/><path d="M1111,481l3 105" stroke="#222" stroke-width="2.4" stroke-opacity="0.46"/><path d="M958,482l2 86" stroke="#222" stroke-width="1.8" stroke-opacity="0.25"/><path d="M1027,466l-1 89" stroke="#c8c8c8" stroke-width="3.1" stroke-opacity="0.36"/><path d="M964,486l-3 76" stroke="#c8c8c8" stroke-width="2.3" stroke-opacity="0.39"/><path d="M811,407l3 65" stroke="#222" stroke-width="1.6" stroke-opacity="0.38"/><path d="M796,418l-4 32" stroke="#2a2a2a" stroke-width="1.7" stroke-opacity="0.33"/><path d="M952,478l-1 54" stroke="#222" stroke-width="2.8" stroke-opacity="0.44"/></g><path d="M460,489l3 0 3 0 3 0 3-1 3 0 3 0 3 0 3-1 3 0 3 0 3-1 3 0 3 1 3 1 3 0 3 1 3 1 3 0 3 0 3 0 3-4 3-4 3-5 3-5 3-4 3-5 3-4 3 0 3 1 3 1 3-2 3-2 3-1 3 0 3 0 3-1 3 0 3 0 3 0 3 0 3 2 3 1 3 2 3 1 3 2 3 1 3 1 3 0 3 0 3 0 3-1 3-1 3-1 3-1 3-1 3-1 3-1 3-1 3-2 3-2 3-1 3 2 3 3 3-1 3 0 3 4 3 1 3-1 3-2 3-2 3-2 3-2 3-1 3-1 3-1 3 0 3-2 3-4 3-3 3-1 3 3 3 3 3-1 3-3 3-3 3-4 3-4 3-4 3-2 3 0 3 0 3 1 3 3 3 2 3 0 3-1 3 0 3 0 3-1 3 0 3-1 3-1 3-3 3-13 3 0 3-2 3 1 3 2 3 2 3 1 3 0 3 3 3 2 3-1 3-1 3 2 3-14 3-15 3-9 3 27 3 21 3 0 3 0 3-6 3-12 3-7 3 9 3 9 3 9 3 10 3 8 3 4 3 2 3-1 3 3 3 2 3 2 3 2 3 0 3-2 3-2 3-4 3-4 3-6 3-5 3 8 3 7 3 8 3 8 3 1 3 4 3-5 3-11 3 3 3 10 3 7 3-1 3-2 3 0 3-2 3-4 3 1 3 2 3 2 3 2 3 3 3 2 3 2 3-1 3-3 3-3 3-4 3-4 3-5 3-5 3-5 3 8 3 7 3 8 3 6 3 6 3 5 3-4 3-6 3-7 3-8 3-8 3-4 3 7 3 4 3 3 3 4 3-4 3-2 3 5 3 6 3 5 3 5 3 4 3 3 3 1 3 0 3 1 3 0 3-1 3-2 3-3 3-4 3-6 3-6 3-3 3 6 3 6 3 4 3-4 3-4 3-4 3 5 3-5 3-8 3 7 3 8 3 7 3-3 3-6 3-7 3-2 3 8 3 8 3 8 3 7 3 6 3 5 3 1 3-7 3-8 3-10 3-3 3 12 3 11 3 0 3 10 3 11 3 4 3 2 3 1 3 0 3-4 3-5 3-3 3-3 3 3 3 6 3 5 3 3 3 3 3-1 3 1 3 0 3 0 3 0 3-1 3-2 3-1 3-1 3-3 3-3 3-4 3-4 3-4 3 1 3 8 3 5 3 4 3 3 3 4 3-7 3-11 3-14 3 7 3 15 3 13 3-2 3-3 3 9 3 7 3 0" fill="none" stroke="#000" stroke-width="1.2" stroke-opacity="0.6" stroke-dasharray="86 13 30 10 82 40 80 21 76 27"/><use href="#m9" fill="url(#st0)"/><use href="#m9" fill="url(#mg)"/><g filter="url(#bl)"><path d="M1291,568l-3 63" stroke="#2a2a2a" stroke-width="1.8" stroke-opacity="0.35"/><path d="M1075,510l-3 51" stroke="#333" stroke-width="2.4" stroke-opacity="0.40"/><path d="M1156,534l-5 35" stroke="#c8c8c8" stroke-width="1.9" stroke-opacity="0.30"/><path d="M1081,517l3 45" stroke="#c8c8c8" stroke-width="1.6" stroke-opacity="0.28"/><path d="M1309,574l0 51" stroke="#2a2a2a" stroke-width="2.7" stroke-opacity="0.29"/><path d="M1225,540l3 27" stroke="#c8c8c8" stroke-width="1.9" stroke-opacity="0.48"/><path d="M967,501l0 91" stroke="#333" stroke-width="2.4" stroke-opacity="0.26"/><path d="M937,491l-4 35" stroke="#222" stroke-width="3.0" stroke-opacity="0.47"/><path d="M997,496l1 91" stroke="#2a2a2a" stroke-width="1.8" stroke-opacity="0.32"/><path d="M1060,486l-5 39" stroke="#c8c8c8" stroke-width="3.0" stroke-opacity="0.37"/><path d="M814,427l1 97" stroke="#333" stroke-width="2.8" stroke-opacity="0.27"/></g><path d="M460,489l3 0 3 0 3 0 3-1 3 0 3 0 3 0 3-1 3 0 3 0 3-1 3 0 3 1 3 1 3 0 3 1 3 1 3 0 3 0 3 0 3-4 3-4 3-5 3-5 3-4 3-5 3-4 3 0 3 1 3 1 3-2 3-2 3-1 3 0 3 0 3-1 3 0 3 0 3 0 3 0 3 2 3 1 3 2 3 1 3 2 3 1 3 1 3 0 3 0 3 0 3-1 3-1 3-1 3-1 3-1 3-1 3-1 3-1 3-2 3-2 3-1 3 2 3 3 3-1 3 0 3 4 3 1 3-1 3-2 3-2 3-2 3-2 3-1 3-1 3-1 3 0 3-2 3-4 3-3 3-1 3 3 3 3 3-1 3-3 3-3 3-4 3-4 3-4 3-2 3 0 3 0 3 1 3 3 3 2 3 0 3-1 3 0 3 0 3-1 3 0 3-1 3-1 3-3 3-16 3 2 3 2 3 2 3 3 3 2 3 3 3 2 3 3 3 3 3-5 3-9 3-9 3 6 3 13 3 13 3 7 3 5 3 2 3-5 3-9 3-14 3-11 3 12 3-8 3 4 3-4 3 18 3 9 3 9 3-1 3-2 3-2 3 6 3 6 3 6 3 6 3 0 3-4 3-4 3-8 3-7 3 3 3 9 3 9 3 8 3 8 3 7 3 0 3 1 3 1 3-1 3-1 3-2 3-2 3 1 3-2 3-3 3 1 3 2 3 2 3 2 3 1 3 2 3 2 3 3 3 1 3 1 3 2 3 1 3-1 3-1 3-2 3-2 3-2 3-3 3-1 3 5 3 4 3 3 3 3 3 3 3 1 3 1 3 0 3 0 3-3 3-2 3-2 3-3 3-5 3-13 3 2 3 0 3-5 3-3 3 5 3 5 3 5 3 5 3 5 3 4 3 4 3 4 3 1 3 0 3 0 3 0 3 1 3 0 3 1 3-13 3-22 3-1 3 26 3 17 3 0 3 0 3 1 3 2 3 1 3 2 3 0 3 1 3 0 3 1 3 1 3 1 3-4 3-6 3-7 3-8 3-2 3 10 3 2 3-4 3-5 3-5 3 3 3 9 3 8 3-13 3-4 3 21 3 2 3 3 3 4 3-1 3-2 3-2 3-1 3 4 3 4 3 2 3 5 3 3 3 3 3 2 3 0 3-1 3 1 3-3 3-8 3-9 3-1 3-12 3-13 3 7 3 17 3 12 3 10 3 8 3 1 3 0 3 1 3 2 3 1 3 0 3 1 3 1 3 1 3 0 3 0 3 0" fill="none" stroke="#000" stroke-width="1.2" stroke-opacity="0.6" stroke-dasharray="82 10 53 8 78 17 35 13 51 28"/><use href="#m10" fill="url(#st1)"/><use href="#m10" fill="url(#mg)"/><g filter="url(#bl)"><path d="M1285,578l-5 30" stroke="#c8c8c8" stroke-width="1.9" stroke-opacity="0.44"/><path d="M856,461l0 53" stroke="#333" stroke-width="2.4" stroke-opacity="0.45"/><path d="M1048,521l-5 85" stroke="#333" stroke-width="2.1" stroke-opacity="0.50"/><path d="M1099,509l2 66" stroke="#333" stroke-width="2.5" stroke-opacity="0.37"/><path d="M826,464l-2 109" stroke="#2a2a2a" stroke-width="3.4" stroke-opacity="0.27"/><path d="M1144,547l-3 80" stroke="#222" stroke-width="1.5" stroke-opacity="0.42"/><path d="M1114,539l-4 62" stroke="#333" stroke-width="3.0" stroke-opacity="0.33"/><path d="M1129,542l-2 70" stroke="#2a2a2a" stroke-width="3.4" stroke-opacity="0.37"/><path d="M1216,567l-5 97" stroke="#2a2a2a" stroke-width="3.0" stroke-opacity="0.40"/><path d="M1225,556l-2 109" stroke="#333" stroke-width="2.6" stroke-opacity="0.31"/><path d="M916,492l2 44" stroke="#333" stroke-width="2.8" stroke-opacity="0.39"/><path d="M1192,536l-1 44" stroke="#c8c8c8" stroke-width="1.9" stroke-opacity="0.36"/></g><path d="M460,489l3 0 3 0 3 0 3-1 3 0 3 0 3 0 3-1 3 0 3 0 3-1 3 0 3 1 3 1 3 0 3 1 3 1 3 0 3 0 3 0 3-4 3-4 3-5 3-5 3-4 3-5 3-4 3 0 3 1 3 1 3-2 3-2 3-1 3 0 3 0 3-1 3 0 3 0 3 0 3 0 3 2 3 1 3 2 3 1 3 2 3 1 3 1 3 0 3 0 3 0 3-1 3-1 3-1 3-1 3-1 3-1 3-1 3-1 3-2 3-2 3-1 3 2 3 3 3-1 3 0 3 4 3 1 3-1 3-2 3-2 3-2 3-2 3-1 3-1 3-1 3 0 3-2 3-4 3-3 3-1 3 3 3 3 3-1 3-3 3-3 3-4 3-4 3-4 3-2 3 0 3 0 3 1 3 3 3 2 3 0 3-1 3 0 3 0 3-1 3 0 3-1 3-1 3-3 3-15 3-1 3 2 3 4 3 5 3 3 3-1 3-1 3 0 3 3 3-11 3-8 3 21 3 13 3 6 3 6 3 6 3 5 3 3 3 2 3 2 3-4 3-9 3-10 3-9 3 13 3 12 3 1 3-2 3-4 3-5 3-2 3 8 3 7 3-6 3-5 3 0 3 10 3 9 3 9 3 6 3 6 3 2 3-7 3-7 3-9 3-1 3 12 3 9 3 8 3 5 3-4 3-6 3-7 3-7 3-7 3-8 3-2 3 9 3 8 3 8 3 6 3-3 3-5 3-4 3-4 3-2 3 8 3 7 3 8 3 7 3 6 3 5 3 4 3 1 3 2 3 0 3 0 3 1 3 0 3 0 3 0 3-1 3-6 3-7 3-8 3-11 3-10 3 6 3 10 3 8 3 8 3 6 3-4 3-5 3-18 3 11 3 17 3 3 3-2 3-1 3-2 3-2 3-1 3-2 3-3 3 1 3 1 3-5 3-1 3 7 3 7 3 6 3 6 3 4 3 2 3-1 3 1 3 1 3 1 3 1 3 1 3 1 3 1 3 0 3 1 3 1 3 1 3 0 3 1 3-1 3-4 3-4 3-6 3-6 3-7 3-6 3 9 3 8 3 10 3-8 3-10 3 10 3 12 3 9 3 6 3 2 3 1 3 1 3 1 3-5 3-6 3-8 3-2 3 9 3 8 3 6 3 1 3-2 3-2 3-1 3-1 3-2 3 1 3 2 3 3 3 2 3 2 3 4 3 1 3 0 3 1 3 0 3 1 3 1 3 1 3 1 3 0 3 1 3 1 3 0 3 1 3 0 3 0" fill="none" stroke="#000" stroke-width="1.2" stroke-opacity="0.6" stroke-dasharray="60 15 39 23 60 26 50 30 51 26"/><use href="#m11" fill="url(#st2)"/><use href="#m11" fill="url(#mg)"/><g filter="url(#bl)"><path d="M1168,557l-2 52" stroke="#2a2a2a" stroke-width="1.6" stroke-opacity="0.32"/><path d="M1030,536l0 102" stroke="#222" stroke-width="2.2" stroke-opacity="0.45"/><path d="M805,441l0 57" stroke="#c8c8c8" stroke-width="2.7" stroke-opacity="0.36"/><path d="M796,434l0 75" stroke="#222" stroke-width="3.3" stroke-opacity="0.27"/><path d="M1114,551l-4 88" stroke="#c8c8c8" stroke-width="2.4" stroke-opacity="0.30"/><path d="M796,434l1 58" stroke="#222" stroke-width="3.4" stroke-opacity="0.49"/><path d="M994,507l-1 38" stroke="#2a2a2a" stroke-width="3.2" stroke-opacity="0.33"/><path d="M961,488l2 39" stroke="#222" stroke-width="2.2" stroke-opacity="0.27"/><path d="M1222,580l-4 55" stroke="#2a2a2a" stroke-width="2.1" stroke-opacity="0.40"/><path d="M1231,580l2 84" stroke="#333" stroke-width="1.9" stroke-opacity="0.35"/><path d="M874,489l-2 104" stroke="#222" stroke-width="1.7" stroke-opacity="0.44"/><path d="M1246,582l-1 26" stroke="#2a2a2a" stroke-width="3.0" stroke-opacity="0.46"/><path d="M1318,585l-4 55" stroke="#c8c8c8" stroke-width="2.9" stroke-opacity="0.30"/><path d="M949,482l1 49" stroke="#333" stroke-width="2.9" stroke-opacity="0.28"/><path d="M1201,563l2 49" stroke="#c8c8c8" stroke-width="2.1" stroke-opacity="0.32"/><path d="M967,504l1 27" stroke="#2a2a2a" stroke-width="2.4" stroke-opacity="0.39"/></g><path d="M460,489l3 0 3 0 3 0 3-1 3 0 3 0 3 0 3-1 3 0 3 0 3-1 3 0 3 1 3 1 3 0 3 1 3 1 3 0 3 0 3 0 3-4 3-4 3-5 3-5 3-4 3-5 3-4 3 0 3 1 3 1 3-2 3-2 3-1 3 0 3 0 3-1 3 0 3 0 3 0 3 0 3 2 3 1 3 2 3 1 3 2 3 1 3 1 3 0 3 0 3 0 3-1 3-1 3-1 3-1 3-1 3-1 3-1 3-1 3-2 3-2 3-1 3 2 3 3 3-1 3 0 3 4 3 1 3-1 3-2 3-2 3-2 3-2 3-1 3-1 3-1 3 0 3-2 3-4 3-3 3-1 3 3 3 3 3-1 3-3 3-3 3-4 3-4 3-4 3-2 3 0 3 0 3 1 3 3 3 2 3 0 3-1 3 0 3 0 3-1 3 0 3-1 3-1 3-3 3-6 3 4 3 3 3 2 3 1 3 1 3 1 3 0 3 3 3 7 3 3 3-3 3-6 3-7 3-6 3 4 3 13 3 13 3 7 3-4 3 1 3 6 3 5 3 6 3 5 3 2 3 2 3 3 3 0 3-2 3-4 3-6 3-4 3 11 3 9 3-2 3-2 3 7 3 7 3 5 3 0 3 0 3-1 3-10 3-13 3 6 3 15 3 7 3 1 3 2 3-1 3-4 3-7 3-7 3-7 3-6 3-8 3-5 3 8 3 9 3-7 3 4 3 12 3-4 3 7 3 9 3 9 3 7 3 0 3-5 3-7 3-7 3-8 3 5 3 10 3 9 3-1 3 3 3 3 3 3 3 3 3 2 3 3 3 2 3 2 3 1 3-1 3-1 3-1 3-6 3-7 3-9 3-9 3-2 3 10 3 9 3 8 3 5 3-2 3-1 3-1 3 3 3 3 3 2 3 3 3 2 3-13 3-20 3-8 3 22 3 18 3 6 3 1 3 1 3 2 3 1 3 0 3 0 3 1 3 1 3 1 3 1 3 1 3 1 3 0 3 1 3 1 3 1 3 0 3 1 3 0 3-1 3-4 3-5 3-6 3-7 3 5 3 8 3 7 3 8 3 3 3-2 3-2 3-3 3-5 3 2 3 4 3 5 3 5 3 4 3 2 3 0 3 0 3 0 3 1 3 0 3 0 3 0 3 0 3-2 3-3 3-3 3-4 3-1 3-6 3-7 3-8 3-7 3 11 3 8 3 8 3 8 3 6 3 1 3 3 3 0 3-3 3-4 3-3 3-3 3 4 3 4 3 4 3 4" fill="none" stroke="#000" stroke-width="1.2" stroke-opacity="0.6" stroke-dasharray="50 24 29 14 30 14 72 14 66 16"/><use href="#m12" fill="url(#st0)"/><use href="#m12" fill="url(#mg)"/><g filter="url(#bl)"><path d="M952,526l-5 106" stroke="#333" stroke-width="1.9" stroke-opacity="0.41"/><path d="M1033,518l2 91" stroke="#c8c8c8" stroke-width="2.5" stroke-opacity="0.36"/><path d="M946,517l-4 39" stroke="#222" stroke-width="2.8" stroke-opacity="0.39"/><path d="M1186,575l3 98" stroke="#222" stroke-width="3.3" stroke-opacity="0.40"/><path d="M823,478l-5 56" stroke="#222" stroke-width="3.0" stroke-opacity="0.43"/><path d="M1180,576l0 52" stroke="#333" stroke-width="3.4" stroke-opacity="0.39"/><path d="M781,423l-3 45" stroke="#333" stroke-width="3.3" stroke-opacity="0.28"/><path d="M1054,527l-1 78" stroke="#222" stroke-width="3.4" stroke-opacity="0.37"/><path d="M799,452l-3 26" stroke="#c8c8c8" stroke-width="1.8" stroke-opacity="0.48"/><path d="M862,499l0 39" stroke="#222" stroke-width="2.0" stroke-opacity="0.30"/><path d="M1288,584l-3 107" stroke="#2a2a2a" stroke-width="3.0" stroke-opacity="0.43"/></g><path d="M460,489l3 0 3 0 3 0 3-1 3 0 3 0 3 0 3-1 3 0 3 0 3-1 3 0 3 1 3 1 3 0 3 1 3 1 3 0 3 0 3 0 3-4 3-4 3-5 3-5 3-4 3-5 3-4 3 0 3 1 3 1 3-2 3-2 3-1 3 0 3 0 3-1 3 0 3 0 3 0 3 0 3 2 3 1 3 2 3 1 3 2 3 1 3 1 3 0 3 0 3 0 3-1 3-1 3-1 3-1 3-1 3-1 3-1 3-1 3-2 3-2 3-1 3 2 3 3 3-1 3 0 3 4 3 1 3-1 3-2 3-2 3-2 3-2 3-1 3-1 3-1 3 0 3-2 3-4 3-3 3-1 3 3 3 3 3-1 3-3 3-3 3-4 3-4 3-4 3-2 3 0 3 0 3 1 3 3 3 2 3 0 3-1 3 0 3 0 3-1 3 0 3-1 3-1 3-3 3-7 3 1 3 1 3 3 3 7 3 6 3 3 3 2 3 5 3 6 3 4 3 2 3 4 3 3 3 3 3 4 3 4 3 2 3-1 3-3 3-5 3-3 3 7 3 7 3 6 3 5 3 2 3 2 3 2 3 2 3 1 3 2 3 2 3 1 3-1 3-1 3-2 3-2 3-2 3 3 3 5 3 5 3 5 3 4 3 2 3 1 3-1 3-2 3-2 3-3 3-3 3-4 3-4 3-4 3 2 3 5 3 4 3 3 3 5 3 4 3 5 3-4 3-4 3-5 3-5 3-6 3 5 3 8 3 5 3-4 3 5 3 5 3 5 3 5 3 1 3-5 3-6 3 6 3 7 3 4 3-2 3-3 3-4 3-4 3-3 3-5 3-5 3 0 3 1 3 9 3 4 3-2 3-6 3-5 3 8 3 8 3 6 3 6 3 5 3 1 3-3 3-5 3-6 3-7 3-7 3-8 3 2 3 9 3 8 3 7 3-7 3-7 3 4 3 9 3 8 3 8 3 5 3 2 3 1 3 0 3 0 3-2 3-2 3-3 3-2 3-3 3-3 3-3 3 1 3-5 3-3 3 7 3 6 3 6 3 6 3 5 3 5 3 2 3-3 3-3 3 1 3-10 3-12 3 13 3 12 3 9 3 2 3-1 3 0 3-1 3-1 3-3 3-5 3-6 3-5 3-6 3 1 3 7 3 6 3 6 3 6 3 6 3 2 3-2 3-3 3-3 3-3 3-3 3-3 3 2 3-3 3 5 3 5 3 4 3 5 3 2 3-1 3-2 3-2 3 2 3 3 3 3 3 2 3 2" fill="none" stroke="#000" stroke-width="1.2" stroke-opacity="0.6" stroke-dasharray="82 23 62 11 41 26 52 17 34 36"/><use href="#m13" fill="url(#st1)"/><use href="#m13" fill="url(#mg)"/><g filter="url(#bl)"><path d="M826,476l3 103" stroke="#c8c8c8" stroke-width="1.5" stroke-opacity="0.29"/><path d="M1084,568l0 90" stroke="#2a2a2a" stroke-width="3.3" stroke-opacity="0.29"/><path d="M856,499l-3 45" stroke="#333" stroke-width="3.3" stroke-opacity="0.29"/><path d="M859,504l-2 60" stroke="#c8c8c8" stroke-width="3.5" stroke-opacity="0.35"/><path d="M1267,608l-3 28" stroke="#333" stroke-width="3.0" stroke-opacity="0.34"/><path d="M910,533l1 108" stroke="#333" stroke-width="2.7" stroke-opacity="0.49"/><path d="M1138,557l-4 46" stroke="#333" stroke-width="2.9" stroke-opacity="0.36"/><path d="M970,539l3 80" stroke="#222" stroke-width="2.9" stroke-opacity="0.50"/><path d="M1135,551l2 41" stroke="#2a2a2a" stroke-width="2.4" stroke-opacity="0.40"/><path d="M883,517l-4 85" stroke="#333" stroke-width="1.7" stroke-opacity="0.42"/><path d="M1117,568l-2 98" stroke="#333" stroke-width="3.4" stroke-opacity="0.46"/></g><path d="M460,489l3 0 3 0 3 0 3-1 3 0 3 0 3 0 3-1 3 0 3 0 3-1 3 0 3 1 3 1 3 0 3 1 3 1 3 0 3 0 3 0 3-4 3-4 3-5 3-5 3-4 3-5 3-4 3 0 3 1 3 1 3-2 3-2 3-1 3 0 3 0 3-1 3 0 3 0 3 0 3 0 3 2 3 1 3 2 3 1 3 2 3 1 3 1 3 0 3 0 3 0 3-1 3-1 3-1 3-1 3-1 3-1 3-1 3-1 3-2 3-2 3-1 3 2 3 3 3-1 3 0 3 4 3 1 3-1 3-2 3-2 3-2 3-2 3-1 3-1 3-1 3 0 3-2 3-4 3-3 3-1 3 3 3 3 3-1 3-3 3-3 3-4 3-4 3-4 3-2 3 0 3 0 3 1 3 3 3 2 3 0 3-1 3 0 3 0 3-1 3 0 3-1 3-1 3-3 3-3 3 1 3 2 3 9 3 8 3 6 3 5 3 5 3 5 3 5 3 3 3 2 3 1 3 0 3 1 3 2 3 1 3-1 3-1 3-1 3-2 3-3 3-3 3 6 3 5 3 6 3 5 3 6 3 5 3 5 3 3 3 4 3 2 3 1 3 2 3 1 3 0 3 0 3-1 3 1 3-3 3 2 3 7 3 5 3 2 3 1 3 2 3 1 3 0 3 1 3 1 3 1 3-1 3-5 3-7 3-8 3-2 3 9 3 6 3-4 3-5 3-6 3-6 3 8 3 8 3 7 3 7 3 6 3 0 3-1 3-1 3 2 3 3 3-2 3-3 3-3 3-3 3-3 3 3 3 4 3 4 3 1 3-5 3-5 3-5 3-5 3 6 3-6 3 5 3 6 3 7 3 6 3 5 3 3 3-3 3-1 3 3 3 3 3 3 3 2 3 1 3 1 3 0 3 1 3 0 3 1 3-5 3-8 3-3 3 11 3 7 3 0 3 0 3-1 3-1 3-1 3-1 3 0 3 3 3-5 3-7 3-7 3 6 3 8 3 8 3 7 3 4 3 0 3-1 3-3 3-2 3-3 3-3 3-3 3-3 3 0 3 1 3-3 3 6 3 7 3 5 3 6 3 3 3-2 3-1 3 3 3-2 3-4 3-3 3-4 3-4 3 5 3 5 3 5 3 4 3-4 3-3 3 5 3 5 3 4 3 4 3 2 3 1 3 0 3 1 3 0 3 1 3 0 3 0 3-1 3-4 3-8 3-8 3-5 3 5 3 8 3 4 3 3 3 1 3-6 3 4 3 7 3 5 3 4" fill="none" stroke="#000" stroke-width="1.2" stroke-opacity="0.6" stroke-dasharray="80 35 82 12 70 37 59 28 51 38"/><use href="#m14" fill="url(#st2)"/><use href="#m14" fill="url(#mg)"/><g filter="url(#bl)"><path d="M856,498l1 36" stroke="#2a2a2a" stroke-width="3.4" stroke-opacity="0.48"/><path d="M1141,581l-3 97" stroke="#333" stroke-width="2.1" stroke-opacity="0.28"/><path d="M991,558l2 45" stroke="#333" stroke-width="2.9" stroke-opacity="0.31"/><path d="M796,464l-1 44" stroke="#333" stroke-width="2.6" stroke-opacity="0.30"/><path d="M958,547l3 70" stroke="#c8c8c8" stroke-width="1.9" stroke-opacity="0.47"/><path d="M1159,584l-1 29" stroke="#2a2a2a" stroke-width="2.5" stroke-opacity="0.48"/></g><path d="M460,489l3 0 3 0 3 0 3-1 3 0 3 0 3 0 3-1 3 0 3 0 3-1 3 0 3 1 3 1 3 0 3 1 3 1 3 0 3 0 3 0 3-4 3-4 3-5 3-5 3-4 3-5 3-4 3 0 3 1 3 1 3-2 3-2 3-1 3 0 3 0 3-1 3 0 3 0 3 0 3 0 3 2 3 1 3 2 3 1 3 2 3 1 3 1 3 0 3 0 3 0 3-1 3-1 3-1 3-1 3-1 3-1 3-1 3-1 3-2 3-2 3-1 3 2 3 3 3-1 3 0 3 4 3 1 3-1 3-2 3-2 3-2 3-2 3-1 3-1 3-1 3 0 3-2 3-4 3-3 3-1 3 3 3 3 3-1 3-3 3-3 3-4 3-4 3-4 3-2 3 0 3 0 3 1 3 3 3 2 3 0 3-1 3 0 3 0 3-1 3 0 3-1 3-1 3-3 3 5 3 5 3 2 3 1 3 1 3 1 3 9 3 10 3 5 3 3 3 4 3 5 3 4 3 4 3 4 3 4 3 3 3 2 3 3 3 2 3 2 3 2 3 2 3 1 3-1 3-2 3-2 3-3 3-3 3-3 3-3 3 1 3 6 3 6 3 6 3 6 3 2 3-1 3 5 3 4 3 3 3-1 3-1 3-1 3-1 3 2 3 3 3 4 3 2 3 2 3 1 3-2 3-3 3-2 3-3 3-3 3 3 3 5 3 5 3 4 3 5 3 2 3-3 3 0 3-2 3-2 3-1 3 0 3 5 3-1 3-4 3 4 3 6 3 5 3 5 3-2 3-2 3-2 3-2 3-3 3 2 3 2 3-3 3-4 3-3 3 5 3 1 3-3 3 1 3 4 3 5 3 3 3 4 3 3 3 4 3 2 3-2 3-4 3-4 3-5 3-5 3 6 3 6 3 4 3-4 3-4 3 4 3 5 3 5 3 5 3 2 3 1 3 1 3 0 3 1 3 1 3 0 3 0 3-1 3-1 3-1 3-1 3-1 3-1 3 0 3 2 3 1 3-1 3-2 3 2 3 1 3-9 3 8 3 9 3 3 3-2 3-1 3-1 3-2 3 2 3-4 3-11 3 8 3 11 3 9 3 2 3 0 3-2 3-1 3 3 3 2 3 2 3 2 3 1 3 0 3 1 3 0 3 1 3 0 3 1 3 0 3 1 3-2 3-4 3-5 3-6 3-6 3-7 3 3 3 8 3 7 3 7 3 3 3-1 3-2 3-2 3-3 3 0 3 8 3 4 3 2 3-1 3-13 3 1" fill="none" stroke="#000" stroke-width="1.2" stroke-opacity="0.6" stroke-dasharray="31 22 45 20 82 25 46 18 49 20"/><use href="#r0" transform="translate(0,-3)" fill="none" stroke="#000" stroke-width="3.0" stroke-opacity="0.12" filter="url(#sh)"/><path d="M460,1000l3 0 3 0 3 0 3 0 3 0 3 0 3 0 3 0 3 0 3 0 3 0 3 0 3 0 3 0 3 0 3 0 3 0 3 0 3 0 3 0 3 0 3 0 3 0 3 0 3 0 3 0 3 0 3 0 3 0 3 0 3 0 3-590 3-1 3-3 3-3 3 2 3 3 3 2 3 590 3 0 3 0 3 0 3 0 3 0 3 0 3 0 3-582 3 2 3 1 3 0 3 2 3-1 3-3 3-2 3-2 3-1 3 0 3-3 3-5 3 0 3 1 3 5 3 4 3-2 3-1 3 2 3 585 3 0 3 0 3 0 3 0 3 0 3 0 3 0 3 0 3-599 3-2 3-1 3-1 3 1 3 0 3 2 3 600 3 0 3 0 3 0 3 0 3 0 3 0 3 0 3 0 3 0 3 0 3 0 3 0 3 0 3 0 3-628 3 5 3 2 3 1 3 0 3-1 3 621 3 0 3 0 3 0 3 0 3 0 3 0 3 0 3 0 3 0 3 0 3 0 3 0 3 0 3 0 3 0 3 0 3 0 3 0 3 0 3 0 3 0 3 0 3 0 3 0 3 0 3 0 3 0 3 0 3 0 3 0 3 0 3 0 3 0 3 0 3 0 3 0 3 0 3 0 3 0 3 0 3 0 3 0 3 0 3 0 3 0 3 0 3 0 3 0 3 0 3 0 3 0 3 0 3 0 3 0 3 0 3 0 3 0 3 0 3 0 3 0 3 0 3 0 3 0 3 0 3 0 3 0 3 0 3 0 3 0 3 0 3 0 3 0 3 0 3 0 3 0 3 0 3 0 3 0 3 0 3 0 3 0 3 0 3 0 3 0 3 0 3 0 3 0 3 0 3 0 3 0 3 0 3 0 3 0 3 0 3 0 3 0 3 0 3 0 3 0 3 0 3 0 3 0 3 0 3 0 3 0 3 0 3 0 3 0 3 0 3 0 3 0 3 0 3 0 3 0 3 0 3 0 3 0 3 0 3 0 3 0 3 0 3 0 3 0 3 0 3 0 3 0 3 0 3 0 3 0 3 0 3 0 3 0 3 0 3 0 3 0 3 0 3 0 3 0 3 0 3 0 3 0 3 0 3 0 3 0 3 0 3 0 3 0 3 0 3 0 3 0 3 0 3 0 3 0 3 0 3 0 3 0 3 0 3 0 3 0 3 0 3 0 3 0 3 0 3 0 3 0 3 0 3 0 3 0 3 0 3 0 3 0 3 0 3 0 3 0 3 0 3 0 3 0 3 0 3 0 3 0 3 0 3 0 3 0-21 0-24 0-24 0-24 0-24 0-24 0-24 0-24 0-24 0-24 0-24 0-24 0-24 0-24 0-24 0-24 0-24 0-24 0-24 0-24 0-24 0-24 0-24 0-24 0-24 0-24-555-24 555-24-539-24-1-24 6-24 534-24-543-24 543-24 0-24 0-24 0z" fill="#8a8a8a"/><use href="#r0" transform="translate(0,2.5)" fill="none" stroke="#d4d4d4" stroke-width="3" stroke-opacity="0.5"/><use href="#r0" fill="none" stroke="#000" stroke-width="0.8" stroke-opacity="0.85" stroke-dasharray="94 10 135 17 70 20 119 4 80 7"/><use href="#r1" transform="translate(0,-3)" fill="none" stroke="#000" stroke-width="3.1" stroke-opacity="0.13" filter="url(#sh)"/><path d="M460,1000l3 0 3-551 3-1 3 0 3 1 3 0 3-1 3-1 3 0 3 0 3-1 3 554 3 0 3 0 3 0 3 0 3 0 3 0 3-550 3 0 3-4 3-4 3-4 3-4 3-4 3-6 3-7 3-1 3 0 3-2 3-1 3-1 3-3 3-2 3 3 3 3 3 2 3 3 3 0 3-1 3 583 3 0 3 0 3 0 3 0 3-578 3 1 3-1 3-2 3 0 3 0 3 1 3 0 3 1 3-1 3 1 3 0 3 0 3-2 3-3 3-1 3 3 3 3 3-2 3-1 3 2 3 0 3-3 3-4 3-4 3-3 3-1 3-2 3-1 3-2 3 2 3 1 3-1 3-2 3-1 3 1 3 0 3-3 3-6 3 608 3 0 3 0 3 0 3 0 3 0 3 0 3 0 3 0 3 0 3 0 3-607 3 2 3 0 3-1 3 0 3-1 3-1 3-3 3 611 3 0 3 0 3 0 3 0 3 0 3 0 3 0 3 0 3 0 3 0 3 0 3 0 3 0 3 0 3 0 3 0 3 0 3 0 3 0 3 0 3 0 3 0 3 0 3 0 3 0 3 0 3 0 3 0 3 0 3 0 3 0 3 0 3 0 3 0 3 0 3 0 3 0 3 0 3 0 3 0 3 0 3 0 3 0 3 0 3 0 3 0 3 0 3 0 3 0 3 0 3 0 3 0 3 0 3 0 3 0 3 0 3 0 3 0 3 0 3 0 3 0 3 0 3 0 3 0 3 0 3 0 3 0 3 0 3 0 3 0 3 0 3 0 3 0 3 0 3 0 3 0 3 0 3 0 3 0 3 0 3 0 3 0 3 0 3 0 3 0 3 0 3 0 3 0 3 0 3 0 3 0 3 0 3 0 3 0 3 0 3 0 3 0 3 0 3 0 3 0 3 0 3 0 3 0 3 0 3 0 3 0 3 0 3 0 3 0 3 0 3 0 3 0 3 0 3 0 3 0 3 0 3 0 3 0 3 0 3 0 3 0 3 0 3 0 3 0 3 0 3 0 3 0 3 0 3 0 3 0 3 0 3 0 3 0 3 0 3 0 3 0 3 0 3 0 3 0 3 0 3 0 3 0 3 0 3 0 3 0 3 0 3 0 3 0 3 0 3 0 3 0 3 0 3 0 3 0 3 0 3 0 3 0 3 0 3 0 3 0 3 0 3 0 3 0 3 0 3 0 3 0 3 0 3 0 3 0 3 0 3 0 3 0 3 0 3 0 3 0 3 0 3 0 3 0 3 0 3 0 3 0 3 0 3 0-21 0-24 0-24 0-24 0-24 0-24 0-24 0-24 0-24 0-24 0-24 0-24 0-24 0-24 0-24 0-24 0-24 0-24 0-24 0-24 0-24 0-24 0-24 0-24-552-24 552-24-545-24 6-24 13-24 2-24 1-24-5-24-6-24 23-24 511-24-498-24 498z" fill="#8a8a8a"/><use href="#r1" transform="translate(0,2.5)" fill="none" stroke="#d4d4d4" stroke-width="3" stroke-opacity="0.5"/><use href="#r1" fill="none" stroke="#000" stroke-width="0.7" stroke-opacity="0.85" stroke-dasharray="86 19 58 20 133 7 82 4 90 7"/><use href="#r2" transform="translate(0,-3)" fill="none" stroke="#000" stroke-width="3.2" stroke-opacity="0.13" filter="url(#sh)"/><path d="M460,455l3-1 3 0 3 0 3-1 3-1 3 0 3-1 3 0 3-1 3-1 3-1 3 1 3 1 3 0 3 2 3 0 3 0 3 0 3 1 3 0 3-4 3-5 3-4 3-6 3-5 3-5 3-4 3 2 3 1 3 1 3-4 3-7 3 6 3 1 3-1 3-1 3-1 3-1 3-1 3 1 3 3 3 2 3 3 3 1 3 0 3 0 3 0 3-2 3 1 3 1 3 0 3 1 3 0 3 0 3 1 3 1 3-1 3 0 3-3 3-2 3-1 3 1 3 2 3-3 3 0 3 3 3 0 3-3 3-4 3-3 3-3 3 1 3 0 3 1 3 1 3 1 3-2 3-6 3-5 3-2 3 0 3 3 3 0 3 0 3-2 3-1 3-2 3-2 3 0 3 0 3 0 3 1 3 2 3 3 3-2 3-2 3-3 3-2 3-5 3-6 3 1 3 4 3 1 3 612 3 0 3 0 3 0 3 0 3 0 3 0 3 0 3 0 3 0 3 0 3 0 3 0 3 0 3 0 3 0 3 0 3 0 3 0 3 0 3 0 3 0 3 0 3 0 3 0 3 0 3 0 3 0 3 0 3 0 3 0 3 0 3 0 3 0 3 0 3 0 3 0 3 0 3 0 3 0 3 0 3 0 3 0 3 0 3 0 3 0 3 0 3 0 3 0 3 0 3 0 3 0 3 0 3 0 3 0 3 0 3 0 3 0 3 0 3 0 3 0 3 0 3 0 3 0 3 0 3 0 3 0 3 0 3 0 3 0 3 0 3 0 3 0 3 0 3 0 3 0 3 0 3 0 3 0 3 0 3 0 3 0 3 0 3 0 3 0 3 0 3 0 3 0 3 0 3 0 3 0 3 0 3 0 3 0 3 0 3 0 3 0 3 0 3 0 3 0 3 0 3 0 3 0 3 0 3 0 3 0 3 0 3 0 3 0 3 0 3 0 3 0 3 0 3 0 3 0 3 0 3 0 3 0 3 0 3 0 3 0 3 0 3 0 3 0 3 0 3 0 3 0 3 0 3 0 3 0 3 0 3 0 3 0 3 0 3 0 3 0 3 0 3 0 3 0 3 0 3 0 3 0 3 0 3 0 3 0 3 0 3 0 3 0 3 0 3 0 3 0 3 0 3 0 3 0 3 0 3 0 3 0 3 0 3 0 3 0 3 0 3 0 3 0 3 0 3 0 3 0 3 0 3 0 3 0 3 0 3 0 3 0 3 0 3 0 3 0 3 0 3 0 3 0 3 0 3 0 3 0 3 0 3 0 3 0-21 0-24 0-24 0-24 0-24 0-24 0-24 0-24 0-24 0-24 0-24 0-24 0-24 0-24 0-24 0-24 0-24 0-24 0-24 0-24 0-24 0-24 0-24 0-24-544-24-2-24 4-24 12-24 9-24 7-24-5-24-7-24-3-24 20-24 19-24-1-24 3z" fill="#8a8a8a"/><use href="#r2" transform="translate(0,2.5)" fill="none" stroke="#d4d4d4" stroke-width="3" stroke-opacity="0.5"/><use href="#r2" fill="none" stroke="#000" stroke-width="1.1" stroke-opacity="0.85" stroke-dasharray="131 9 54 7 119 17 125 18 87 11"/><use href="#r3" transform="translate(0,-3)" fill="none" stroke="#000" stroke-width="3.3" stroke-opacity="0.14" filter="url(#sh)"/><path d="M460,454l3-1 3 0 3 1 3 1 3 0 3 0 3 0 3 0 3 0 3-2 3 0 3 2 3-1 3 1 3 1 3 0 3 0 3 0 3 0 3-1 3-3 3-4 3-5 3-3 3-3 3-4 3-6 3-1 3-1 3 0 3-3 3 1 3 0 3 2 3-2 3-2 3 0 3 1 3 1 3 2 3 2 3 0 3 0 3 1 3 4 3 2 3 3 3 0 3 2 3-3 3-1 3-2 3 0 3 0 3-2 3-2 3-2 3-2 3-1 3-2 3 0 3 3 3 3 3 0 3 0 3 0 3 1 3-3 3-3 3-3 3-3 3-3 3 0 3 1 3 1 3 0 3-1 3-3 3-3 3-1 3-1 3 0 3-3 3 0 3 0 3-1 3-4 3-5 3-2 3-2 3-3 3 2 3 6 3 3 3-2 3-3 3-2 3-2 3 0 3 1 3 1 3-3 3-3 3 615 3 0 3 0 3 0 3 0 3 0 3 0 3 0 3 0 3 0 3 0 3 0 3 0 3 0 3 0 3 0 3 0 3 0 3 0 3 0 3 0 3 0 3 0 3 0 3 0 3 0 3 0 3 0 3 0 3 0 3 0 3 0 3 0 3 0 3 0 3 0 3 0 3 0 3 0 3 0 3 0 3 0 3 0 3 0 3 0 3 0 3 0 3 0 3 0 3 0 3 0 3 0 3 0 3 0 3 0 3 0 3 0 3 0 3 0 3 0 3 0 3 0 3 0 3 0 3 0 3 0 3 0 3 0 3 0 3 0 3 0 3 0 3 0 3 0 3 0 3 0 3 0 3 0 3 0 3 0 3 0 3 0 3 0 3 0 3 0 3 0 3 0 3 0 3 0 3 0 3 0 3 0 3 0 3 0 3 0 3 0 3 0 3 0 3 0 3 0 3 0 3 0 3 0 3 0 3 0 3 0 3 0 3 0 3 0 3 0 3 0 3 0 3 0 3 0 3 0 3 0 3 0 3 0 3 0 3 0 3 0 3 0 3 0 3 0 3 0 3 0 3 0 3 0 3 0 3 0 3 0 3 0 3 0 3 0 3 0 3 0 3 0 3 0 3 0 3 0 3 0 3 0 3 0 3 0 3 0 3 0 3 0 3 0 3 0 3 0 3 0 3 0 3 0 3 0 3 0 3 0 3 0 3 0 3 0 3 0 3 0 3 0 3 0 3 0 3 0 3 0 3 0 3 0 3 0 3 0 3 0 3 0 3 0 3 0 3 0 3 0 3 0 3 0 3 0 3 0 3 0 3 0 3 0 3 0-21 0-24 0-24 0-24 0-24 0-24 0-24 0-24 0-24 0-24 0-24 0-24 0-24 0-24 0-24 0-24 0-24 0-24 0-24 0-24 0-24 0-24 0-24 0-24-547-24 2-24 13-24 6-24 15-24 0-24 9-24-13-24-2-24 18-24 15-24-1-24-1z" fill="#8a8a8a"/><use href="#r3" transform="translate(0,2.5)" fill="none" stroke="#d4d4d4" stroke-width="3" stroke-opacity="0.5"/><use href="#r3" fill="none" stroke="#000" stroke-width="0.9" stroke-opacity="0.85" stroke-dasharray="93 17 70 12 132 19 60 20 132 15"/><use href="#r4" transform="translate(0,-3)" fill="none" stroke="#000" stroke-width="3.4" stroke-opacity="0.14" filter="url(#sh)"/><path d="M460,457l3 0 3-1 3 2 3-2 3-1 3-1 3 1 3-1 3 1 3-1 3-1 3 2 3 2 3 1 3 2 3 1 3-1 3 0 3 0 3 1 3-2 3-3 3-4 3-4 3-3 3-4 3-5 3 0 3 0 3 0 3-3 3-1 3-1 3 0 3 1 3 0 3 1 3-1 3-2 3-3 3-1 3-2 3 3 3 5 3 4 3 3 3 0 3 1 3 1 3-2 3-1 3-2 3-3 3-1 3-2 3 0 3-1 3 0 3 0 3-1 3 0 3 2 3-1 3-2 3-3 3 2 3 5 3 3 3-3 3-2 3-7 3 1 3 3 3 2 3 1 3 0 3-2 3-10 3-8 3 4 3 2 3-2 3 0 3 0 3-4 3-5 3-6 3-5 3 0 3 3 3 3 3 2 3 5 3 4 3 3 3 1 3-1 3-7 3-7 3 6 3 2 3-2 3-3 3 598 3 0 3 0 3 0 3 0 3 0 3 0 3 0 3 0 3 0 3 0 3 0 3 0 3 0 3 0 3 0 3 0 3 0 3 0 3 0 3 0 3 0 3 0 3 0 3 0 3 0 3 0 3 0 3 0 3 0 3 0 3 0 3 0 3 0 3 0 3 0 3 0 3 0 3 0 3 0 3 0 3 0 3 0 3 0 3 0 3 0 3 0 3 0 3 0 3 0 3 0 3 0 3 0 3 0 3 0 3 0 3 0 3 0 3 0 3 0 3 0 3 0 3 0 3 0 3 0 3 0 3 0 3 0 3 0 3 0 3 0 3 0 3 0 3 0 3 0 3 0 3 0 3 0 3 0 3 0 3 0 3 0 3 0 3 0 3 0 3 0 3 0 3 0 3 0 3 0 3 0 3 0 3 0 3 0 3 0 3 0 3 0 3 0 3 0 3 0 3 0 3 0 3 0 3 0 3 0 3 0 3 0 3 0 3 0 3 0 3 0 3 0 3 0 3 0 3 0 3 0 3 0 3 0 3 0 3 0 3 0 3 0 3 0 3 0 3 0 3 0 3 0 3 0 3 0 3 0 3 0 3 0 3 0 3 0 3 0 3 0 3 0 3 0 3 0 3 0 3 0 3 0 3 0 3 0 3 0 3 0 3 0 3 0 3 0 3 0 3 0 3 0 3 0 3 0 3 0 3 0 3 0 3 0 3 0 3 0 3 0 3 0 3 0 3 0 3 0 3 0 3 0 3 0 3 0 3 0 3 0 3 0 3 0 3 0 3 0 3 0 3 0 3 0 3 0 3 0 3 0 3 0 3 0 3 0-21 0-24 0-24 0-24 0-24 0-24 0-24 0-24 0-24 0-24 0-24 0-24 0-24 0-24 0-24 0-24 0-24 0-24 0-24 0-24 0-24 0-24 0-24 0-24-524-24-21-24 20-24 10-24 4-24 3-24 10-24-12-24 4-24 16-24 13-24-7-24 3z" fill="#8a8a8a"/><use href="#r4" transform="translate(0,2.5)" fill="none" stroke="#d4d4d4" stroke-width="3" stroke-opacity="0.5"/><use href="#r4" fill="none" stroke="#000" stroke-width="1.1" stroke-opacity="0.85" stroke-dasharray="95 22 103 8 113 6 108 22 92 7"/><use href="#r5" transform="translate(0,-3)" fill="none" stroke="#000" stroke-width="3.5" stroke-opacity="0.15" filter="url(#sh)"/><path d="M460,462l3-2 3 0 3 1 3-1 3 0 3-1 3 1 3 0 3-2 3-1 3 0 3 2 3 1 3 1 3 2 3 2 3-1 3 0 3-1 3 1 3-3 3-5 3-4 3-3 3-5 3-4 3-1 3-1 3 0 3 0 3-2 3-1 3-2 3-2 3 0 3 1 3 2 3 1 3 1 3 1 3 2 3-1 3 1 3 3 3 2 3 1 3 1 3-2 3-1 3-2 3-2 3-2 3 1 3 1 3 1 3 0 3 1 3-3 3-5 3-3 3 2 3 2 3-2 3-1 3 2 3 3 3 1 3-1 3-2 3 1 3 0 3 0 3 0 3 2 3-2 3-3 3-6 3-6 3-7 3-1 3 2 3 5 3 2 3 0 3-1 3-6 3-6 3 2 3 3 3 0 3-2 3-2 3 1 3-1 3-2 3-3 3 0 3 2 3 3 3 2 3-1 3 1 3 0 3 589 3 0 3 0 3 0 3 0 3 0 3 0 3 0 3 0 3 0 3 0 3 0 3 0 3 0 3 0 3 0 3 0 3 0 3 0 3 0 3 0 3 0 3 0 3 0 3 0 3 0 3 0 3 0 3 0 3 0 3 0 3 0 3 0 3 0 3 0 3 0 3 0 3 0 3 0 3 0 3 0 3 0 3 0 3 0 3 0 3 0 3 0 3 0 3 0 3 0 3 0 3 0 3 0 3 0 3 0 3 0 3 0 3 0 3 0 3 0 3 0 3 0 3 0 3 0 3 0 3 0 3 0 3 0 3 0 3 0 3 0 3 0 3 0 3 0 3 0 3 0 3 0 3 0 3 0 3 0 3 0 3 0 3 0 3 0 3 0 3 0 3 0 3 0 3 0 3 0 3 0 3 0 3 0 3 0 3 0 3 0 3 0 3 0 3 0 3 0 3 0 3 0 3 0 3 0 3 0 3 0 3 0 3 0 3 0 3 0 3 0 3 0 3 0 3 0 3 0 3 0 3 0 3 0 3 0 3 0 3 0 3 0 3 0 3 0 3 0 3 0 3 0 3 0 3 0 3 0 3 0 3 0 3 0 3 0 3 0 3 0 3 0 3 0 3 0 3 0 3 0 3 0 3 0 3 0 3 0 3 0 3 0 3 0 3 0 3 0 3 0 3 0 3 0 3 0 3 0 3 0 3 0 3 0 3 0 3 0 3 0 3 0 3 0 3 0 3 0 3 0 3 0 3 0 3 0 3 0 3 0 3 0 3 0 3 0 3 0 3 0 3 0 3 0 3 0 3 0 3 0 3 0 3 0 3 0-21 0-24 0-24 0-24 0-24 0-24 0-24 0-24 0-24 0-24 0-24 0-24 0-24 0-24 0-24 0-24 0-24 0-24 0-24 0-24 0-24 0-24 0-24 0-24-532-24 6-24 2-24 23-24-4-24 9-24 4-24-7-24-2-24 14-24 15-24-4-24 1z" fill="#8a8a8a"/><use href="#r5" transform="translate(0,2.5)" fill="none" stroke="#d4d4d4" stroke-width="3" stroke-opacity="0.5"/><use href="#r5" fill="none" stroke="#000" stroke-width="0.9" stroke-opacity="0.85" stroke-dasharray="120 12 113 10 101 13 73 18 83 6"/><use href="#r6" transform="translate(0,-3)" fill="none" stroke="#000" stroke-width="3.6" stroke-opacity="0.16" filter="url(#sh)"/><path d="M460,464l3 0 3-1 3 0 3 0 3 1 3 0 3 0 3-2 3 1 3-1 3 0 3 0 3 1 3 0 3 1 3 1 3 1 3 0 3-1 3 1 3-2 3-4 3-2 3-4 3-6 3-6 3-4 3-2 3 3 3 1 3 0 3 1 3 2 3 0 3 0 3-1 3-2 3-1 3-2 3 1 3 2 3 3 3 2 3 2 3 3 3 3 3 1 3 0 3 0 3 0 3-1 3-1 3 0 3-1 3-2 3-1 3-2 3-1 3-4 3-2 3-1 3 1 3 2 3 0 3 1 3 2 3 2 3-1 3-1 3-1 3-3 3-2 3-1 3-2 3-1 3 0 3-3 3-2 3 2 3 3 3 2 3-1 3-3 3-5 3-4 3 0 3 0 3-2 3-6 3-5 3-5 3 4 3 8 3 0 3-5 3-2 3 5 3 4 3 3 3 2 3 2 3-1 3-6 3-5 3 586 3 0 3 0 3 0 3 0 3 0 3 0 3 0 3 0 3 0 3 0 3 0 3 0 3 0 3 0 3 0 3 0 3 0 3 0 3 0 3 0 3 0 3 0 3 0 3 0 3 0 3 0 3 0 3 0 3 0 3 0 3 0 3 0 3 0 3 0 3 0 3 0 3 0 3 0 3 0 3 0 3 0 3 0 3 0 3 0 3 0 3 0 3 0 3 0 3 0 3 0 3 0 3 0 3 0 3 0 3 0 3 0 3 0 3 0 3 0 3 0 3 0 3 0 3 0 3 0 3 0 3 0 3 0 3 0 3 0 3 0 3 0 3 0 3 0 3 0 3 0 3 0 3 0 3 0 3 0 3 0 3 0 3 0 3 0 3 0 3 0 3 0 3 0 3 0 3 0 3 0 3 0 3 0 3 0 3 0 3 0 3 0 3 0 3 0 3 0 3 0 3 0 3 0 3 0 3 0 3 0 3 0 3 0 3 0 3 0 3 0 3 0 3 0 3 0 3 0 3 0 3 0 3 0 3 0 3 0 3 0 3 0 3 0 3 0 3 0 3 0 3 0 3 0 3 0 3 0 3 0 3 0 3 0 3 0 3 0 3 0 3 0 3 0 3 0 3 0 3 0 3 0 3 0 3 0 3 0 3 0 3 0 3 0 3 0 3 0 3 0 3 0 3 0 3 0 3 0 3 0 3 0 3 0 3 0 3 0 3 0 3 0 3 0 3 0 3 0 3 0 3 0 3 0 3 0 3 0 3 0 3 0 3 0 3 0 3 0 3 0 3 0 3 0 3 0 3 0 3 0 3 0 3 0-21 0-24 0-24 0-24 0-24 0-24 0-24 0-24 0-24 0-24 0-24 0-24 0-24 0-24 0-24 0-24 0-24 0-24 0-24 0-24 0-24 0-24 0-24-521-24-4-24 11-24 13-24 4-24 3-24 7-24 6-24-16-24 3-24 13-24 11-24-3-24 2z" fill="#8a8a8a"/><use href="#r6" transform="translate(0,2.5)" fill="none" stroke="#d4d4d4" stroke-width="3" stroke-opacity="0.5"/><use href="#r6" fill="none" stroke="#000" stroke-width="0.8" stroke-opacity="0.85" stroke-dasharray="117 16 48 6 57 15 101 9 64 9"/><use href="#r7" transform="translate(0,-3)" fill="none" stroke="#000" stroke-width="3.7" stroke-opacity="0.16" filter="url(#sh)"/><path d="M460,466l3-1 3 1 3 0 3 0 3-2 3 1 3 1 3 0 3 1 3 1 3 1 3-1 3 0 3-2 3 2 3 1 3 1 3-2 3-1 3 1 3-2 3-4 3-1 3-2 3-1 3-2 3-4 3-2 3 0 3-1 3-3 3-2 3-2 3-2 3 0 3 1 3 2 3 1 3 2 3 1 3 3 3 0 3 0 3-1 3 1 3 2 3 1 3-1 3 0 3-1 3 2 3-3 3-4 3 1 3 3 3-2 3-2 3 0 3 0 3-4 3 1 3 2 3-1 3-1 3-2 3 2 3 2 3 1 3 0 3-2 3 0 3 0 3-2 3-3 3 1 3 0 3 0 3 0 3-3 3-2 3 1 3 3 3-2 3-4 3-1 3-2 3-2 3-1 3 0 3 2 3 1 3-3 3-1 3-3 3 4 3 4 3-4 3-5 3-3 3-1 3 5 3 2 3 2 3 2 3 0 3 571 3 0 3 0 3 0 3 0 3 0 3 0 3 0 3 0 3 0 3 0 3 0 3 0 3 0 3 0 3 0 3 0 3 0 3 0 3 0 3 0 3 0 3 0 3 0 3 0 3 0 3 0 3 0 3 0 3 0 3 0 3 0 3 0 3 0 3 0 3 0 3 0 3 0 3 0 3 0 3 0 3 0 3 0 3 0 3 0 3 0 3 0 3 0 3 0 3 0 3 0 3 0 3 0 3 0 3 0 3 0 3 0 3 0 3 0 3 0 3 0 3 0 3 0 3 0 3 0 3 0 3 0 3 0 3 0 3 0 3 0 3 0 3 0 3 0 3 0 3 0 3 0 3 0 3 0 3 0 3 0 3 0 3 0 3 0 3 0 3 0 3 0 3 0 3 0 3 0 3 0 3 0 3 0 3 0 3 0 3 0 3 0 3 0 3 0 3 0 3 0 3 0 3 0 3 0 3 0 3 0 3 0 3 0 3 0 3 0 3 0 3 0 3 0 3 0 3 0 3 0 3 0 3 0 3 0 3 0 3 0 3 0 3 0 3 0 3 0 3 0 3 0 3 0 3 0 3 0 3 0 3 0 3 0 3 0 3 0 3 0 3 0 3 0 3 0 3 0 3 0 3 0 3 0 3 0 3 0 3 0 3 0 3 0 3 0 3 0 3 0 3 0 3 0 3 0 3 0 3 0 3 0 3 0 3 0 3 0 3 0 3 0 3 0 3 0 3 0 3 0 3 0 3 0 3 0 3 0 3 0 3 0 3 0 3 0 3 0 3 0 3 0 3 0 3 0 3 0 3 0 3 0-21 0-24 0-24 0-24 0-24 0-24 0-24 0-24 0-24 0-24 0-24 0-24 0-24 0-24 0-24 0-24 0-24 0-24 0-24 0-24 0-24 0-24 0-24-505-24 2-24-4-24 8-24 9-24-1-24 5-24 4-24-4-24-4-24 15-24 10-24-3-24 0z" fill="#8a8a8a"/><use href="#r7" transform="translate(0,2.5)" fill="none" stroke="#d4d4d4" stroke-width="3" stroke-opacity="0.5"/><use href="#r7" fill="none" stroke="#000" stroke-width="0.8" stroke-opacity="0.85" stroke-dasharray="108 13 93 20 87 10 55 10 49 6"/><use href="#r8" transform="translate(0,-3)" fill="none" stroke="#000" stroke-width="3.7" stroke-opacity="0.17" filter="url(#sh)"/><path d="M460,468l3 0 3 2 3 1 3 0 3-2 3 0 3 0 3 1 3 0 3 1 3 1 3 1 3-2 3 0 3-1 3 0 3-1 3 1 3 0 3 1 3-1 3-2 3-4 3-3 3 0 3-2 3-3 3-1 3 0 3-1 3-2 3-2 3-2 3 1 3 1 3 1 3 0 3 0 3-2 3-2 3 1 3 2 3 2 3 2 3 2 3 2 3-1 3-1 3 2 3-1 3-1 3 0 3 0 3 1 3 1 3 0 3 0 3 1 3 0 3-1 3-2 3 2 3 2 3-2 3 0 3 1 3 0 3-2 3-1 3-1 3-3 3-3 3-2 3-2 3-2 3 1 3-4 3 0 3-2 3 1 3 3 3 3 3 0 3-2 3-6 3-7 3 1 3 1 3 3 3 2 3-1 3-2 3-1 3 0 3-4 3-2 3-2 3 2 3 1 3-2 3-2 3 2 3 0 3-1 3-3 3-3 3 581 3 0 3 0 3 0 3 0 3 0 3 0 3 0 3 0 3 0 3 0 3 0 3 0 3 0 3 0 3 0 3 0 3 0 3 0 3 0 3 0 3 0 3 0 3 0 3 0 3 0 3 0 3 0 3 0 3 0 3 0 3 0 3 0 3 0 3 0 3 0 3 0 3 0 3 0 3 0 3 0 3 0 3 0 3 0 3 0 3 0 3 0 3 0 3 0 3 0 3 0 3 0 3 0 3 0 3 0 3 0 3 0 3 0 3 0 3 0 3 0 3 0 3 0 3 0 3 0 3 0 3 0 3 0 3 0 3 0 3 0 3 0 3 0 3 0 3 0 3 0 3 0 3 0 3 0 3 0 3 0 3 0 3 0 3 0 3 0 3 0 3 0 3 0 3 0 3 0 3 0 3 0 3 0 3 0 3 0 3 0 3 0 3 0 3 0 3 0 3 0 3 0 3 0 3 0 3 0 3 0 3 0 3 0 3 0 3 0 3 0 3 0 3 0 3 0 3 0 3 0 3 0 3 0 3 0 3 0 3 0 3 0 3 0 3 0 3 0 3 0 3 0 3 0 3 0 3 0 3 0 3 0 3 0 3 0 3 0 3 0 3 0 3 0 3 0 3 0 3 0 3 0 3 0 3 0 3 0 3 0 3 0 3 0 3 0 3 0 3 0 3 0 3 0 3 0 3 0 3 0 3 0 3 0 3 0 3 0 3 0 3 0 3 0 3 0 3 0 3 0 3 0 3 0 3 0 3 0 3 0 3 0 3 0 3 0 3 0 3 0 3 0 3 0 3 0 3 0 3 0-21 0-24 0-24 0-24 0-24 0-24 0-24 0-24 0-24 0-24 0-24 0-24 0-24 0-24 0-24 0-24 0-24 0-24 0-24 0-24 0-24 0-24 0-24-508-24 2-24 5-24 7-24 10-24 9-24 0-24-2-24-8-24 2-24 12-24 8-24 0-24-2z" fill="#8a8a8a"/><use href="#r8" transform="translate(0,2.5)" fill="none" stroke="#d4d4d4" stroke-width="3" stroke-opacity="0.5"/><use href="#r8" fill="none" stroke="#000" stroke-width="1.2" stroke-opacity="0.85" stroke-dasharray="113 6 98 15 125 7 129 8 122 8"/><use href="#r9" transform="translate(0,-3)" fill="none" stroke="#000" stroke-width="3.8" stroke-opacity="0.17" filter="url(#sh)"/><path d="M460,469l3 2 3 1 3 1 3 1 3 1 3-1 3 0 3 0 3 0 3-1 3-1 3 1 3 1 3-1 3 2 3-1 3 1 3 1 3 0 3 0 3-1 3-1 3-3 3-5 3-5 3-4 3-2 3 3 3 3 3 0 3-1 3-1 3 0 3 1 3 0 3 1 3 0 3-1 3-1 3-2 3 0 3 0 3-1 3 0 3 2 3 2 3 2 3 1 3 2 3-1 3-3 3 0 3 1 3 0 3 1 3 1 3 1 3 0 3-3 3-3 3-1 3 0 3 1 3-2 3-1 3 2 3 2 3 1 3-5 3 0 3 2 3 1 3-1 3 1 3-2 3-1 3-2 3-3 3-2 3-1 3 2 3 3 3 0 3-5 3-4 3-6 3-5 3-5 3 1 3 2 3 3 3 4 3 5 3 5 3 2 3 0 3 0 3 1 3-3 3-4 3-3 3-4 3 3 3 2 3 2 3-5 3-4 3 565 3 0 3 0 3 0 3 0 3 0 3 0 3 0 3 0 3 0 3 0 3 0 3 0 3 0 3 0 3 0 3 0 3 0 3 0 3 0 3 0 3 0 3 0 3 0 3 0 3 0 3 0 3 0 3 0 3 0 3 0 3 0 3 0 3 0 3 0 3 0 3 0 3 0 3 0 3 0 3 0 3 0 3 0 3 0 3 0 3 0 3 0 3 0 3 0 3 0 3 0 3 0 3 0 3 0 3 0 3 0 3 0 3 0 3 0 3 0 3 0 3 0 3 0 3 0 3 0 3 0 3 0 3 0 3 0 3 0 3 0 3 0 3 0 3 0 3 0 3 0 3 0 3 0 3 0 3 0 3 0 3 0 3 0 3 0 3 0 3 0 3 0 3 0 3 0 3 0 3 0 3 0 3 0 3 0 3 0 3 0 3 0 3 0 3 0 3 0 3 0 3 0 3 0 3 0 3 0 3 0 3 0 3 0 3 0 3 0 3 0 3 0 3 0 3 0 3 0 3 0 3 0 3 0 3 0 3 0 3 0 3 0 3 0 3 0 3 0 3 0 3 0 3 0 3 0 3 0 3 0 3 0 3 0 3 0 3 0 3 0 3 0 3 0 3 0 3 0 3 0 3 0 3 0 3 0 3 0 3 0 3 0 3 0 3 0 3 0 3 0 3 0 3 0 3 0 3 0 3 0 3 0 3 0 3 0 3 0 3 0 3 0 3 0 3 0 3 0 3 0 3 0 3 0 3 0 3 0 3 0 3 0 3 0 3 0 3 0 3 0 3 0 3 0 3 0 3 0-21 0-24 0-24 0-24 0-24 0-24 0-24 0-24 0-24 0-24 0-24 0-24 0-24 0-24 0-24 0-24 0-24 0-24 0-24 0-24 0-24 0-24 0-24-490-24 8-24-22-24 20-24 11-24-2-24 7-24-1-24-6-24 2-24 7-24 9-24-1-24-4z" fill="#8a8a8a"/><use href="#r9" transform="translate(0,2.5)" fill="none" stroke="#d4d4d4" stroke-width="3" stroke-opacity="0.5"/><use href="#r9" fill="none" stroke="#000" stroke-width="1.0" stroke-opacity="0.85" stroke-dasharray="110 4 49 7 45 10 56 12 47 17"/><use href="#r10" transform="translate(0,-3)" fill="none" stroke="#000" stroke-width="3.9" stroke-opacity="0.18" filter="url(#sh)"/><path d="M460,477l3-1 3 0 3-1 3-1 3 0 3-1 3 2 3 0 3 1 3-2 3 2 3 1 3 2 3 2 3-1 3-2 3 1 3 2 3 0 3 0 3-2 3-2 3-3 3-1 3-2 3-1 3-2 3 0 3 2 3 1 3-1 3-1 3-1 3 1 3 0 3-1 3-2 3-1 3-1 3-1 3 2 3 1 3-1 3-2 3 0 3 4 3 2 3 0 3-1 3 0 3 2 3 0 3 0 3 1 3-2 3-1 3-2 3-2 3-3 3-4 3-2 3 4 3 2 3 1 3 2 3 3 3 3 3-3 3-2 3-4 3-2 3-1 3 0 3 1 3 0 3 1 3 0 3 0 3 0 3-2 3-1 3-1 3-3 3-4 3-3 3 0 3 1 3-4 3-2 3 0 3 1 3 2 3 4 3 4 3 0 3 2 3 1 3-3 3-2 3-3 3-3 3-3 3-5 3 0 3 0 3-7 3-2 3-6 3 579 3 0 3 0 3 0 3 0 3 0 3 0 3 0 3 0 3 0 3 0 3 0 3 0 3 0 3 0 3 0 3 0 3 0 3 0 3 0 3 0 3 0 3 0 3 0 3 0 3 0 3 0 3 0 3 0 3 0 3 0 3 0 3 0 3 0 3 0 3 0 3 0 3 0 3 0 3 0 3 0 3 0 3 0 3 0 3 0 3 0 3 0 3 0 3 0 3 0 3 0 3 0 3 0 3 0 3 0 3 0 3 0 3 0 3 0 3 0 3 0 3 0 3 0 3 0 3 0 3 0 3 0 3 0 3 0 3 0 3 0 3 0 3 0 3 0 3 0 3 0 3 0 3 0 3 0 3 0 3 0 3 0 3 0 3 0 3 0 3 0 3 0 3 0 3 0 3 0 3 0 3 0 3 0 3 0 3 0 3 0 3 0 3 0 3 0 3 0 3 0 3 0 3 0 3 0 3 0 3 0 3 0 3 0 3 0 3 0 3 0 3 0 3 0 3 0 3 0 3 0 3 0 3 0 3 0 3 0 3 0 3 0 3 0 3 0 3 0 3 0 3 0 3 0 3 0 3 0 3 0 3 0 3 0 3 0 3 0 3 0 3 0 3 0 3 0 3 0 3 0 3 0 3 0 3 0 3 0 3 0 3 0 3 0 3 0 3 0 3 0 3 0 3 0 3 0 3 0 3 0 3 0 3 0 3 0 3 0 3 0 3 0 3 0 3 0 3 0 3 0 3 0 3 0 3 0 3 0 3 0 3 0 3 0 3 0 3 0 3 0 3 0 3 0 3 0-21 0-24 0-24 0-24 0-24 0-24 0-24 0-24 0-24 0-24 0-24 0-24 0-24 0-24 0-24 0-24 0-24 0-24 0-24 0-24 0-24 0-24 0-24-495-24 18-24-11-24 15-24 0-24 4-24 6-24 1-24-6-24 6-24 4-24 5-24-3-24 2z" fill="#8a8a8a"/><use href="#r10" transform="translate(0,2.5)" fill="none" stroke="#d4d4d4" stroke-width="3" stroke-opacity="0.5"/><use href="#r10" fill="none" stroke="#000" stroke-width="0.8" stroke-opacity="0.85" stroke-dasharray="37 11 31 16 54 15 73 6 37 17"/><use href="#r11" transform="translate(0,-3)" fill="none" stroke="#000" stroke-width="4.0" stroke-opacity="0.19" filter="url(#sh)"/><path d="M460,479l3 0 3 0 3 0 3 1 3-1 3-1 3 0 3 0 3 1 3 1 3 1 3 2 3 0 3-1 3 0 3 0 3-1 3 0 3 3 3 0 3-3 3-2 3-3 3-3 3-1 3-1 3-1 3 0 3 2 3-1 3-2 3-3 3-1 3-1 3-3 3 0 3 2 3 2 3-1 3-1 3 0 3 2 3 2 3 2 3-1 3 3 3 2 3 2 3-1 3-3 3-2 3-2 3 2 3 2 3 2 3 0 3-2 3-3 3-3 3 0 3 0 3 1 3 1 3 2 3 0 3 4 3 3 3 0 3-1 3-3 3-3 3-2 3-2 3-1 3 1 3 1 3-1 3-5 3-3 3-3 3 3 3 4 3 2 3 0 3-1 3-1 3-3 3-3 3-1 3 1 3 0 3-1 3 2 3 2 3 2 3 0 3 0 3-5 3-5 3-2 3 3 3-5 3 2 3 3 3 4 3-12 3-10 3-9 3-1 3 577 3 0 3 0 3 0 3 0 3 0 3 0 3 0 3 0 3 0 3 0 3 0 3 0 3 0 3 0 3 0 3 0 3 0 3 0 3 0 3 0 3 0 3 0 3 0 3 0 3 0 3 0 3 0 3 0 3 0 3 0 3 0 3 0 3 0 3 0 3 0 3 0 3 0 3 0 3 0 3 0 3 0 3 0 3 0 3 0 3 0 3 0 3 0 3 0 3 0 3 0 3 0 3 0 3 0 3 0 3 0 3 0 3 0 3 0 3 0 3 0 3 0 3 0 3 0 3 0 3 0 3 0 3 0 3 0 3 0 3 0 3 0 3 0 3 0 3 0 3 0 3 0 3 0 3 0 3 0 3 0 3 0 3 0 3 0 3 0 3 0 3 0 3 0 3 0 3 0 3 0 3 0 3 0 3 0 3 0 3 0 3 0 3 0 3 0 3 0 3 0 3 0 3 0 3 0 3 0 3 0 3 0 3 0 3 0 3 0 3 0 3 0 3 0 3 0 3 0 3 0 3 0 3 0 3 0 3 0 3 0 3 0 3 0 3 0 3 0 3 0 3 0 3 0 3 0 3 0 3 0 3 0 3 0 3 0 3 0 3 0 3 0 3 0 3 0 3 0 3 0 3 0 3 0 3 0 3 0 3 0 3 0 3 0 3 0 3 0 3 0 3 0 3 0 3 0 3 0 3 0 3 0 3 0 3 0 3 0 3 0 3 0 3 0 3 0 3 0 3 0 3 0 3 0 3 0 3 0 3 0 3 0 3 0 3 0 3 0 3 0 3 0 3 0-21 0-24 0-24 0-24 0-24 0-24 0-24 0-24 0-24 0-24 0-24 0-24 0-24 0-24 0-24 0-24 0-24 0-24 0-24 0-24 0-24 0-24 0-24-479-24 9-24-6-24 0-24 13-24 1-24 5-24 2-24-12-24 2-24 8-24 8-24-3-24 0z" fill="#8a8a8a"/><use href="#r11" transform="translate(0,2.5)" fill="none" stroke="#d4d4d4" stroke-width="3" stroke-opacity="0.5"/><use href="#r11" fill="none" stroke="#000" stroke-width="1.2" stroke-opacity="0.85" stroke-dasharray="36 14 117 5 116 4 84 8 103 15"/><use href="#r12" transform="translate(0,-3)" fill="none" stroke="#000" stroke-width="4.1" stroke-opacity="0.19" filter="url(#sh)"/><path d="M460,483l3 0 3-1 3-2 3 0 3 0 3 0 3 1 3 0 3 1 3 1 3 0 3 0 3 0 3 0 3 0 3 0 3 2 3 1 3 1 3 1 3-3 3-1 3-2 3-3 3-4 3-3 3 0 3 1 3 2 3 2 3-3 3-3 3 3 3 1 3 3 3-1 3-1 3-1 3-1 3-1 3 0 3-1 3 2 3 1 3 1 3 0 3-1 3 0 3 1 3 1 3 1 3 2 3-1 3-1 3-2 3-1 3-2 3-2 3 1 3 0 3 2 3 2 3 1 3-3 3 0 3 4 3-1 3 2 3 3 3-3 3-4 3-3 3 2 3 2 3-1 3-1 3-2 3-3 3-5 3-1 3 4 3 3 3 1 3 1 3-1 3 0 3-1 3-4 3-1 3-1 3-1 3-1 3 2 3 2 3 2 3-2 3 2 3 1 3-3 3-2 3-3 3-1 3-4 3-1 3 1 3-3 3-3 3-4 3-2 3-1 3 557 3 0 3 0 3 0 3 0 3 0 3 0 3 0 3 0 3 0 3-523 3 5 3 6 3 4 3 4 3 4 3 3 3 497 3 0 3 0 3 0 3 0 3 0 3 0 3 0 3 0 3 0 3 0 3 0 3 0 3 0 3 0 3 0 3 0 3 0 3 0 3 0 3 0 3 0 3 0 3 0 3 0 3 0 3 0 3 0 3 0 3 0 3 0 3 0 3 0 3 0 3 0 3 0 3 0 3 0 3 0 3 0 3 0 3 0 3 0 3 0 3 0 3 0 3 0 3 0 3 0 3 0 3 0 3 0 3 0 3 0 3 0 3 0 3 0 3 0 3 0 3 0 3 0 3 0 3 0 3 0 3 0 3 0 3 0 3 0 3 0 3 0 3 0 3 0 3 0 3 0 3 0 3 0 3 0 3 0 3 0 3 0 3 0 3 0 3 0 3 0 3 0 3 0 3 0 3 0 3 0 3 0 3 0 3 0 3 0 3 0 3 0 3 0 3 0 3 0 3 0 3 0 3 0 3 0 3 0 3 0 3 0 3 0 3 0 3 0 3 0 3 0 3 0 3 0 3 0 3 0 3 0 3 0 3 0 3 0 3 0 3 0 3 0 3 0 3 0 3 0 3 0 3 0 3 0 3 0 3 0 3 0 3 0 3 0 3 0 3 0 3 0 3 0 3 0 3 0 3 0 3 0 3 0 3 0 3 0 3 0 3 0 3 0 3 0 3 0 3 0 3 0 3 0 3 0 3 0 3 0 3 0 3 0 3 0 3 0 3 0 3 0-21 0-24 0-24 0-24 0-24 0-24 0-24 0-24 0-24 0-24 0-24 0-24 0-24 0-24 0-24 0-24 0-24 0-24 0-24 0-24 0-24 0-24 0-24-474-24 11-24 0-24-3-24 9-24 2-24 0-24 0-24-1-24-2-24 7-24 4-24-1-24 2z" fill="#8a8a8a"/><use href="#r12" transform="translate(0,2.5)" fill="none" stroke="#d4d4d4" stroke-width="3" stroke-opacity="0.5"/><use href="#r12" fill="none" stroke="#000" stroke-width="0.8" stroke-opacity="0.85" stroke-dasharray="37 15 140 14 80 18 30 14 80 17"/><use href="#r13" transform="translate(0,-3)" fill="none" stroke="#000" stroke-width="4.2" stroke-opacity="0.20" filter="url(#sh)"/><path d="M460,484l3-1 3 1 3 0 3 1 3 1 3 1 3 1 3 1 3 1 3 1 3-1 3 0 3 1 3-1 3-1 3-1 3 0 3 0 3 2 3-1 3-2 3-1 3-1 3-1 3 0 3-1 3-2 3-2 3-1 3-1 3-2 3-1 3 1 3 2 3 1 3-1 3 0 3 1 3 2 3 1 3 2 3 2 3-1 3 0 3-1 3 0 3 0 3-1 3 2 3 0 3-1 3 0 3-2 3 0 3 2 3 1 3 1 3-3 3-2 3-5 3 0 3 5 3 3 3 4 3 2 3 3 3 0 3 0 3-2 3-3 3-4 3-3 3-3 3 1 3 2 3 0 3 1 3-3 3-3 3-1 3 3 3-1 3-2 3-2 3 1 3 0 3-1 3-3 3 0 3 1 3 1 3 1 3 4 3 2 3 1 3 1 3 0 3 0 3 0 3-1 3-1 3-1 3-3 3-2 3-4 3-4 3-5 3-4 3-3 3-2 3-2 3-3 3 555 3 0 3 0 3 0 3 0 3-538 3 9 3 5 3 2 3 4 3 5 3 4 3 5 3 0 3-2 3-1 3 6 3 4 3 2 3 1 3 494 3 0 3 0 3 0 3 0 3 0 3 0 3 0 3 0 3 0 3 0 3 0 3 0 3 0 3 0 3 0 3 0 3 0 3 0 3 0 3 0 3 0 3 0 3 0 3 0 3 0 3 0 3 0 3 0 3 0 3 0 3 0 3 0 3 0 3 0 3 0 3 0 3 0 3 0 3 0 3 0 3 0 3 0 3 0 3 0 3 0 3 0 3 0 3 0 3 0 3 0 3 0 3 0 3 0 3 0 3 0 3 0 3 0 3 0 3 0 3 0 3 0 3 0 3 0 3 0 3 0 3 0 3 0 3 0 3 0 3 0 3 0 3 0 3 0 3 0 3 0 3 0 3 0 3 0 3 0 3 0 3 0 3 0 3 0 3 0 3 0 3 0 3 0 3 0 3 0 3 0 3 0 3 0 3 0 3 0 3 0 3 0 3 0 3 0 3 0 3 0 3 0 3 0 3 0 3 0 3 0 3 0 3 0 3 0 3 0 3 0 3 0 3 0 3 0 3 0 3 0 3 0 3 0 3 0 3 0 3 0 3 0 3 0 3 0 3 0 3 0 3 0 3 0 3 0 3 0 3 0 3 0 3 0 3 0 3 0 3 0 3 0 3 0 3 0 3 0 3 0 3 0 3 0 3 0 3 0 3 0 3 0 3 0 3 0 3 0 3 0 3 0 3 0 3 0 3 0-21 0-24 0-24 0-24 0-24 0-24 0-24 0-24 0-24 0-24 0-24 0-24 0-24 0-24 0-24 0-24 0-24 0-24 0-24 0-24-436-24-17-24-31-24 27-24 9-24-12-24 6-24 5-24 7-24-3-24-1-24-2-24-7-24 10-24 4-24 1-24-5z" fill="#8a8a8a"/><use href="#r13" transform="translate(0,2.5)" fill="none" stroke="#d4d4d4" stroke-width="3" stroke-opacity="0.5"/><use href="#r13" fill="none" stroke="#000" stroke-width="1.3" stroke-opacity="0.85" stroke-dasharray="92 9 30 15 61 13 111 15 102 15"/><use href="#r14" transform="translate(0,-3)" fill="none" stroke="#000" stroke-width="4.3" stroke-opacity="0.20" filter="url(#sh)"/><path d="M460,493l3 0 3 1 3 0 3 0 3 0 3-2 3-2 3-1 3 3 3 3 3 0 3 1 3 0 3 0 3 1 3 0 3-1 3-1 3-2 3 1 3 2 3-1 3-3 3-2 3-2 3-2 3-2 3 1 3 1 3 2 3-1 3-1 3 0 3-2 3-1 3 0 3-2 3-3 3 3 3 2 3 4 3 0 3 0 3 0 3 2 3 0 3-1 3 1 3 1 3 2 3 0 3-2 3-3 3-1 3 1 3 2 3 2 3 1 3-1 3-2 3 0 3 1 3 2 3 0 3-1 3 1 3 1 3-1 3 1 3-1 3-2 3-2 3-2 3-2 3-1 3 1 3 2 3-1 3 1 3-2 3 0 3-1 3 1 3 1 3 0 3 0 3-3 3-3 3-4 3 1 3 2 3 1 3-1 3-1 3-2 3-1 3 3 3-1 3 3 3-1 3-3 3-1 3-2 3-4 3 1 3-1 3-5 3-5 3-4 3-3 3-2 3 3 3 4 3 4 3 3 3 3 3 2 3 7 3 1 3 2 3 0 3 6 3 1 3 7 3-2 3-1 3 0 3 2 3 4 3 3 3 4 3-2 3-2 3-4 3 2 3 504 3 0 3 0 3 0 3 0 3 0 3 0 3 0 3 0 3 0 3 0 3 0 3 0 3 0 3 0 3 0 3 0 3 0 3 0 3 0 3 0 3 0 3 0 3 0 3 0 3 0 3 0 3 0 3 0 3 0 3 0 3 0 3 0 3 0 3 0 3 0 3 0 3 0 3 0 3 0 3 0 3 0 3 0 3 0 3 0 3 0 3 0 3 0 3 0 3 0 3 0 3 0 3 0 3 0 3 0 3 0 3 0 3 0 3 0 3 0 3 0 3 0 3 0 3 0 3 0 3 0 3 0 3 0 3 0 3 0 3 0 3 0 3 0 3 0 3 0 3 0 3 0 3 0 3 0 3 0 3 0 3 0 3 0 3 0 3 0 3 0 3 0 3 0 3 0 3 0 3 0 3 0 3 0 3 0 3 0 3 0 3 0 3 0 3 0 3 0 3 0 3 0 3 0 3 0 3 0 3 0 3 0 3 0 3 0 3 0 3 0 3 0 3 0 3 0 3 0 3 0 3 0 3 0 3 0 3 0 3 0 3 0 3 0 3 0 3 0 3 0 3 0 3 0 3 0 3 0 3 0 3 0 3 0 3 0 3 0 3 0 3 0 3 0 3 0 3 0 3 0 3 0 3 0 3 0 3 0 3 0 3 0 3 0 3 0 3 0 3 0 3 0-21 0-24 0-24 0-24 0-24 0-24 0-24 0-24 0-24 0-24 0-24 0-24 0-24 0-24 0-24 0-24 0-24 0-24 0-24 0-24-437-24-13-24-26-24 16-24 6-24 4-24 6-24 4-24 4-24-3-24 0-24-6-24 3-24 4-24 7-24-8-24 4z" fill="#8a8a8a"/><use href="#r14" transform="translate(0,2.5)" fill="none" stroke="#d4d4d4" stroke-width="3" stroke-opacity="0.5"/><use href="#r14" fill="none" stroke="#000" stroke-width="0.9" stroke-opacity="0.85" stroke-dasharray="54 17 63 22 70 22 89 7 83 9"/><use href="#r15" transform="translate(0,-3)" fill="none" stroke="#000" stroke-width="4.4" stroke-opacity="0.21" filter="url(#sh)"/><path d="M460,495l3 0 3 1 3 1 3 0 3 0 3-1 3 0 3-1 3 1 3 0 3 0 3 2 3 0 3 0 3 0 3 0 3 0 3 1 3 1 3-1 3 0 3-2 3-2 3-2 3-1 3-2 3-3 3-2 3 2 3 4 3 0 3-2 3-2 3 0 3 3 3 3 3 1 3 2 3-1 3 2 3 0 3 1 3 1 3-3 3-2 3-1 3-1 3-2 3 1 3 3 3 0 3 0 3 3 3 3 3-1 3-1 3-1 3-1 3-2 3-2 3-2 3 2 3 2 3 1 3-1 3 1 3 2 3-2 3-1 3-3 3-1 3 0 3 1 3 1 3 0 3-2 3 1 3 0 3-2 3-2 3 1 3-1 3 1 3 1 3 0 3 1 3-1 3-3 3-2 3-2 3-2 3 3 3 1 3 3 3 2 3 1 3 1 3 1 3 1 3 1 3 1 3-1 3 0 3-1 3-2 3-4 3-6 3-5 3-4 3-4 3-3 3-3 3-1 3 0 3 5 3 6 3 1 3 0 3 5 3 7 3 6 3 6 3 5 3 4 3 0 3 0 3-1 3-3 3-3 3-2 3-1 3 3 3 3 3 2 3 4 3 2 3 4 3 3 3 483 3 0 3 0 3 0 3 0 3 0 3 0 3 0 3 0 3 0 3 0 3 0 3 0 3 0 3 0 3 0 3 0 3 0 3 0 3 0 3 0 3 0 3 0 3 0 3 0 3 0 3 0 3 0 3 0 3 0 3 0 3 0 3 0 3 0 3 0 3 0 3 0 3 0 3 0 3 0 3 0 3 0 3 0 3 0 3 0 3 0 3 0 3 0 3 0 3 0 3 0 3 0 3 0 3 0 3 0 3 0 3 0 3 0 3 0 3 0 3 0 3 0 3 0 3 0 3 0 3 0 3 0 3 0 3 0 3 0 3 0 3 0 3 0 3 0 3 0 3 0 3 0 3 0 3 0 3 0 3 0 3 0 3 0 3 0 3 0 3 0 3 0 3 0 3 0 3 0 3 0 3 0 3 0 3 0 3 0 3 0 3 0 3 0 3 0 3 0 3 0 3 0 3 0 3 0 3 0 3 0 3 0 3 0 3 0 3 0 3 0 3 0 3 0 3 0 3 0 3 0 3 0 3 0 3 0 3 0 3 0 3 0 3 0 3 0 3 0 3 0 3 0 3 0 3 0 3 0 3 0 3 0 3 0 3 0 3 0 3 0 3 0 3 0 3 0 3 0 3 0 3 0 3 0 3 0 3 0 3 0 3 0 3 0 3 0-21 0-24 0-24 0-24 0-24 0-24 0-24 0-24 0-24 0-24 0-24 0-24 0-24 0-24 0-24 0-24 0-24 0-24 0-24-418-24-8-24-17-24-22-24 31-24-4-24-3-24 0-24 4-24 5-24 3-24-9-24 7-24-8-24 5-24 4-24-2-24-1z" fill="#8a8a8a"/><use href="#r15" transform="translate(0,2.5)" fill="none" stroke="#d4d4d4" stroke-width="3" stroke-opacity="0.5"/><use href="#r15" fill="none" stroke="#000" stroke-width="0.9" stroke-opacity="0.85" stroke-dasharray="60 10 109 22 92 18 126 10 95 12"/><use href="#r16" transform="translate(0,-3)" fill="none" stroke="#000" stroke-width="4.5" stroke-opacity="0.22" filter="url(#sh)"/><path d="M460,495l3 1 3 1 3 0 3 2 3 0 3 0 3 0 3-1 3-1 3 0 3 1 3 1 3 1 3 0 3 1 3-2 3 0 3 0 3 3 3 2 3 1 3-1 3 0 3-3 3-3 3-1 3-2 3 1 3 2 3 2 3-2 3 0 3 0 3 0 3 0 3-2 3 1 3 0 3 2 3 0 3 2 3-1 3 0 3 0 3 0 3 1 3 1 3 0 3-2 3-2 3-3 3 2 3 3 3 4 3 3 3 0 3 0 3 0 3-2 3-2 3 0 3-1 3 0 3-2 3 0 3 3 3 1 3 1 3 2 3 0 3 1 3 0 3-2 3 0 3-1 3-2 3-2 3-3 3-2 3-1 3 0 3 2 3 1 3 0 3 0 3-1 3 0 3-1 3 1 3-3 3-5 3-3 3 6 3 6 3 4 3-1 3-1 3-2 3-1 3-2 3-1 3-2 3-3 3-2 3-1 3-7 3-4 3 2 3 3 3 1 3-1 3 3 3 2 3 1 3 3 3 4 3 2 3 6 3 5 3 3 3-1 3-3 3-3 3 4 3-2 3-1 3-1 3 4 3 3 3 3 3 3 3 1 3 3 3 3 3-1 3-3 3-1 3-2 3-3 3 4 3 1 3 483 3 0 3 0 3 0 3 0 3-476 3 1 3 4 3 1 3-4 3-2 3 2 3 1 3 3 3 470 3 0 3 0 3 0 3 0 3 0 3 0 3 0 3 0 3 0 3 0 3 0 3 0 3 0 3 0 3 0 3 0 3 0 3 0 3 0 3 0 3 0 3 0 3 0 3 0 3 0 3 0 3 0 3 0 3 0 3 0 3 0 3 0 3 0 3 0 3 0 3 0 3 0 3 0 3 0 3 0 3 0 3 0 3 0 3 0 3 0 3 0 3 0 3 0 3 0 3 0 3 0 3 0 3 0 3 0 3 0 3 0 3 0 3 0 3 0 3 0 3 0 3 0 3 0 3 0 3 0 3 0 3 0 3 0 3 0 3 0 3 0 3 0 3 0 3 0 3 0 3 0 3 0 3 0 3 0 3 0 3 0 3 0 3 0 3 0 3 0 3 0 3 0 3 0 3 0 3 0 3 0 3 0 3 0 3 0 3 0 3 0 3 0 3 0 3 0 3 0 3 0 3 0 3 0 3 0 3 0 3 0 3 0 3 0 3 0 3 0 3 0 3 0 3 0 3 0 3 0 3 0 3 0 3 0 3 0 3 0 3 0 3 0 3 0 3 0 3 0 3 0 3 0 3 0 3 0 3 0 3 0-21 0-24 0-24 0-24 0-24 0-24 0-24 0-24 0-24 0-24 0-24 0-24 0-24 0-24 0-24 0-24 0-24-403-24 403-24-409-24-12-24 3-24-26-24 4-24 14-24-5-24-1-24 13-24-8-24 7-24-5-24-3-24-1-24 3-24-2-24-2-24-2z" fill="#8a8a8a"/><use href="#r16" transform="translate(0,2.5)" fill="none" stroke="#d4d4d4" stroke-width="3" stroke-opacity="0.5"/><use href="#r16" fill="none" stroke="#000" stroke-width="1.3" stroke-opacity="0.85" stroke-dasharray="133 13 131 7 45 10 70 5 120 6"/><use href="#r17" transform="translate(0,-3)" fill="none" stroke="#000" stroke-width="4.6" stroke-opacity="0.22" filter="url(#sh)"/><path d="M460,504l3-1 3-1 3-1 3-2 3 0 3 1 3 2 3 0 3-1 3 0 3 0 3 1 3 1 3 2 3-1 3-1 3 1 3 0 3 0 3 1 3 0 3-1 3-3 3 2 3 0 3-1 3-2 3-4 3 6 3 1 3 0 3 1 3 1 3 1 3 1 3-3 3-3 3-1 3-3 3 1 3 2 3 2 3-1 3 0 3-1 3 3 3 3 3 1 3-1 3-1 3 0 3 1 3 1 3-1 3-2 3-1 3 1 3 2 3 2 3 0 3-1 3 0 3 3 3 1 3 2 3 1 3 1 3-2 3-1 3-2 3-2 3-2 3 2 3 0 3-4 3-2 3 1 3 2 3 2 3 2 3-1 3 0 3-2 3-3 3-2 3-1 3-1 3-2 3 3 3-1 3 1 3 0 3 1 3 2 3 0 3 2 3 1 3 0 3-2 3-1 3-2 3-3 3-2 3-2 3-3 3-4 3 3 3 2 3 1 3-1 3-4 3-4 3-3 3 1 3 3 3-1 3-2 3 2 3 7 3 8 3 7 3 4 3 7 3 3 3-1 3 2 3 0 3 0 3 2 3 0 3 2 3 1 3-1 3 0 3 1 3-2 3-1 3 0 3 3 3 1 3 0 3-1 3-2 3 1 3 1 3 2 3 2 3 1 3 1 3-4 3-3 3 3 3-2 3-1 3-1 3 3 3 0 3 2 3 1 3 470 3 0 3 0 3 0 3 0 3 0 3 0 3 0 3 0 3 0 3 0 3 0 3 0 3 0 3 0 3 0 3 0 3 0 3 0 3 0 3 0 3 0 3 0 3 0 3 0 3 0 3 0 3 0 3 0 3 0 3 0 3 0 3 0 3 0 3 0 3 0 3 0 3 0 3 0 3 0 3 0 3 0 3 0 3 0 3 0 3 0 3 0 3 0 3 0 3 0 3 0 3 0 3 0 3 0 3 0 3 0 3 0 3 0 3 0 3 0 3 0 3 0 3 0 3 0 3 0 3 0 3 0 3 0 3 0 3 0 3 0 3 0 3 0 3 0 3 0 3 0 3 0 3 0 3 0 3 0 3 0 3 0 3 0 3 0 3 0 3 0 3 0 3 0 3 0 3 0 3 0 3 0 3 0 3 0 3 0 3 0 3 0 3 0 3 0 3 0 3 0 3 0 3 0 3 0 3 0 3 0 3 0 3 0 3 0 3 0 3 0 3 0 3 0 3 0 3 0 3 0 3 0 3 0 3 0 3 0 3 0 3 0 3 0 3 0 3 0 3 0 3 0 3 0-21 0-24 0-24 0-24 0-24 0-24 0-24 0-24 0-24 0-24 0-24 0-24 0-24 0-24 0-24 0-24 0-24-399-24-2-24-1-24-3-24-22-24-15-24 10-24 10-24-7-24 12-24-3-24 5-24-9-24 5-24-9-24 6-24-2-24 1-24-2-24 3z" fill="#8a8a8a"/><use href="#r17" transform="translate(0,2.5)" fill="none" stroke="#d4d4d4" stroke-width="3" stroke-opacity="0.5"/><use href="#r17" fill="none" stroke="#000" stroke-width="1.1" stroke-opacity="0.85" stroke-dasharray="85 19 87 4 109 7 58 16 64 18"/><use href="#r18" transform="translate(0,-3)" fill="none" stroke="#000" stroke-width="4.7" stroke-opacity="0.23" filter="url(#sh)"/><path d="M460,502l3-2 3 1 3 1 3 2 3-2 3 1 3 3 3 0 3-1 3 0 3 0 3 3 3 0 3-1 3 1 3 0 3 2 3 1 3 0 3-1 3-1 3 0 3 0 3 1 3 0 3-3 3-2 3-2 3 0 3 2 3 2 3 1 3-2 3 0 3 0 3-2 3 4 3 1 3-2 3 0 3 0 3-2 3 2 3 5 3 2 3 1 3 1 3 1 3-1 3-1 3-1 3-1 3-2 3 0 3 0 3-1 3-2 3 0 3 1 3 2 3 2 3 1 3-1 3-3 3 1 3 1 3 2 3 1 3 1 3 2 3-1 3-3 3-2 3 0 3 2 3 0 3-5 3 1 3 2 3-2 3 1 3 3 3 1 3 0 3 1 3 1 3 0 3-1 3-1 3 0 3 0 3 0 3 1 3-1 3-3 3-1 3 1 3 3 3 1 3 0 3 0 3-3 3-4 3-3 3-4 3-6 3 0 3 2 3 2 3 2 3-3 3-3 3-4 3-5 3 4 3 8 3 1 3 1 3 4 3 7 3 6 3 5 3 6 3 1 3-2 3-2 3 4 3-1 3-3 3 3 3 0 3 0 3-3 3-2 3-2 3 4 3 2 3 3 3-1 3-2 3-3 3 0 3 4 3 1 3 5 3 2 3 1 3 0 3 1 3 1 3 1 3-2 3-3 3-2 3-3 3 1 3 3 3-4 3-2 3 3 3 3 3 465 3 0 3 0 3 0 3 0 3 0 3 0 3 0 3 0 3 0 3 0 3 0 3 0 3 0 3 0 3 0 3 0 3 0 3 0 3 0 3 0 3 0 3 0 3 0 3 0 3 0 3 0 3 0 3 0 3 0 3 0 3 0 3 0 3 0 3 0 3 0 3 0 3 0 3 0 3 0 3 0 3 0 3 0 3 0 3 0 3 0 3 0 3 0 3 0 3 0 3 0 3 0 3 0 3 0 3 0 3 0 3 0 3 0 3 0 3 0 3 0 3 0 3 0 3 0 3 0 3 0 3 0 3 0 3 0 3 0 3 0 3 0 3 0 3 0 3 0 3 0 3 0 3 0 3 0 3 0 3 0 3 0 3 0 3 0 3 0 3 0 3 0 3 0 3 0 3 0 3 0 3 0 3 0 3 0 3 0 3 0 3 0 3 0 3 0 3 0 3 0 3 0 3 0 3 0 3 0 3 0 3 0 3 0 3 0 3 0 3 0 3 0 3 0 3 0 3 0 3 0 3 0 3 0 3 0 3 0 3 0 3 0 3 0 3 0 3 0 3 0-21 0-24 0-24 0-24 0-24 0-24 0-24 0-24 0-24 0-24 0-24 0-24 0-24 0-24 0-24 0-24-394-24 7-24-9-24-4-24 3-24-17-24-16-24 10-24 5-24 5-24-6-24 4-24-4-24 0-24 7-24-10-24 1-24 2-24-2-24-2-24-4z" fill="#8a8a8a"/><use href="#r18" transform="translate(0,2.5)" fill="none" stroke="#d4d4d4" stroke-width="3" stroke-opacity="0.5"/><use href="#r18" fill="none" stroke="#000" stroke-width="0.9" stroke-opacity="0.85" stroke-dasharray="94 15 69 22 104 17 65 8 32 11"/><use href="#r19" transform="translate(0,-3)" fill="none" stroke="#000" stroke-width="4.8" stroke-opacity="0.23" filter="url(#sh)"/><path d="M460,510l3 0 3 0 3 1 3-1 3 2 3-1 3 0 3 1 3-1 3 1 3-1 3 2 3 2 3 0 3-2 3-1 3 2 3 1 3-2 3-1 3 2 3 1 3 1 3 0 3 1 3 1 3-1 3-1 3-1 3 0 3-1 3-2 3-1 3-1 3-1 3 1 3 1 3 1 3 1 3 2 3 2 3 1 3 0 3 0 3-1 3 0 3 1 3 0 3 0 3-2 3 0 3 1 3 2 3 1 3 2 3-6 3-2 3 6 3 0 3-1 3-1 3-1 3-1 3 3 3 0 3 3 3 0 3 2 3 1 3-2 3-4 3 3 3 1 3-3 3-1 3 1 3-3 3 1 3 1 3-1 3 2 3 0 3-2 3-1 3 1 3 0 3 0 3-1 3 0 3-2 3-2 3-1 3-1 3-1 3 0 3 2 3 1 3 2 3 1 3 2 3 1 3 1 3 2 3 0 3-3 3-4 3-4 3-4 3-3 3-1 3-4 3-2 3 8 3 0 3-2 3-1 3-1 3 0 3 7 3 6 3 5 3 5 3 5 3 5 3 2 3 0 3-5 3 2 3-4 3-6 3 3 3 5 3 5 3-1 3-2 3-3 3-2 3 5 3 3 3-4 3-1 3 6 3 6 3 4 3 1 3 0 3-3 3-2 3-1 3-2 3-1 3-2 3-1 3-2 3-1 3 1 3-3 3 1 3 2 3 2 3 3 3 1 3 0 3-1 3 1 3 3 3 2 3 1 3 2 3 2 3 0 3-1 3 0 3 451 3 0 3 0 3 0 3 0 3 0 3 0 3 0 3 0 3 0 3 0 3 0 3 0 3 0 3 0 3 0 3 0 3 0 3 0 3 0 3 0 3 0 3 0 3 0 3 0 3 0 3 0 3 0 3 0 3 0 3 0 3 0 3 0 3 0 3 0 3 0 3 0 3 0 3 0 3 0 3 0 3 0 3 0 3 0 3 0 3 0 3 0 3 0 3 0 3 0 3 0 3 0 3 0 3 0 3 0 3 0 3 0 3 0 3 0 3 0 3 0 3 0 3 0 3 0 3 0 3 0 3 0 3 0 3 0 3 0 3 0 3 0 3 0 3 0 3 0 3 0 3 0 3 0 3 0 3 0 3 0 3 0 3 0 3 0 3 0 3 0 3 0 3 0 3 0 3 0 3 0 3 0 3 0 3 0 3 0 3 0 3 0 3 0 3 0 3 0 3 0 3 0 3 0 3 0 3 0 3 0 3 0 3 0 3 0 3 0 3 0 3 0 3 0 3 0-21 0-24 0-24 0-24 0-24 0-24 0-24 0-24 0-24 0-24 0-24 0-24 0-24 0-24 0-24-379-24-10-24 0-24 11-24-17-24 2-24-19-24-17-24 26-24-11-24 6-24 1-24 4-24-4-24-3-24 2-24-2-24-3-24 4-24-4-24 0-24-3z" fill="#8a8a8a"/><use href="#r19" transform="translate(0,2.5)" fill="none" stroke="#d4d4d4" stroke-width="3" stroke-opacity="0.5"/><use href="#r19" fill="none" stroke="#000" stroke-width="0.9" stroke-opacity="0.85" stroke-dasharray="128 21 64 15 123 6 35 4 38 22"/><use href="#r20" transform="translate(0,-3)" fill="none" stroke="#000" stroke-width="4.9" stroke-opacity="0.24" filter="url(#sh)"/><path d="M460,508l3 0 3 2 3-1 3-3 3 3 3 2 3 4 3 0 3 0 3 1 3-1 3 1 3 0 3-1 3-1 3 3 3 3 3 0 3-2 3 0 3-2 3 0 3-1 3 2 3 1 3-2 3-3 3 2 3 1 3-1 3 1 3 3 3 1 3 0 3-1 3-1 3-2 3-1 3 3 3 2 3 1 3-1 3-3 3 3 3 0 3-1 3 0 3 3 3 0 3-2 3-1 3 0 3 1 3 0 3 2 3 1 3 1 3 0 3 0 3 0 3 2 3 1 3 2 3 1 3 2 3 2 3 0 3 0 3-3 3-3 3-3 3-2 3 3 3 2 3 1 3-1 3-2 3-2 3-2 3 2 3 2 3 0 3-1 3-1 3-2 3 1 3 0 3-1 3-3 3 6 3 1 3 1 3 2 3-1 3-2 3-5 3-4 3 5 3-2 3 1 3-3 3 1 3 1 3 0 3-2 3-4 3 0 3 0 3 1 3 2 3 1 3 2 3 2 3 2 3 2 3 3 3 0 3 4 3 3 3-2 3-2 3 2 3 6 3 6 3-2 3-3 3 1 3 4 3 4 3-1 3 1 3 0 3-1 3 0 3 0 3-2 3 0 3-1 3-1 3 0 3-2 3 0 3 2 3 1 3 1 3-5 3-2 3 4 3 5 3 4 3 0 3 0 3-3 3-1 3 3 3 3 3 1 3-1 3-2 3-3 3-3 3-4 3-2 3-1 3 3 3 2 3-1 3 1 3 2 3 1 3 2 3 1 3 0 3-1 3-1 3-2 3 453 3 0 3 0 3 0 3 0 3 0 3 0 3 0 3 0 3 0 3 0 3 0 3 0 3-451 3-2 3 0 3 2 3 1 3 1 3-2 3-2 3 2 3 1 3 450 3 0 3 0 3 0 3 0 3 0 3 0 3 0 3 0 3 0 3 0 3 0 3 0 3 0 3 0 3 0 3 0 3 0 3 0 3 0 3 0 3 0 3 0 3 0 3 0 3 0 3 0 3 0 3 0 3 0 3 0 3 0 3 0 3 0 3 0 3 0 3 0 3 0 3 0 3 0 3 0 3 0 3 0 3 0 3 0 3 0 3 0 3 0 3 0 3 0 3 0 3 0 3 0 3 0 3 0 3 0 3 0 3 0 3 0 3 0 3 0 3 0 3 0 3 0 3 0 3 0 3 0 3 0 3 0 3 0 3 0 3 0 3 0 3 0 3 0 3 0 3 0 3 0 3 0 3 0 3 0 3 0 3 0 3 0 3 0 3 0 3 0 3 0-21 0-24 0-24 0-24 0-24 0-24 0-24 0-24 0-24 0-24 0-24 0-24-378-24 378-24-378-24-2-24 5-24 3-24-7-24 1-24-1-24-12-24-14-24 0-24 1-24 1-24 2-24-1-24 7-24-7-24-1-24-2-24-1-24-2-24 0-24-2-24-7z" fill="#8a8a8a"/><use href="#r20" transform="translate(0,2.5)" fill="none" stroke="#d4d4d4" stroke-width="3" stroke-opacity="0.5"/><use href="#r20" fill="none" stroke="#000" stroke-width="1.1" stroke-opacity="0.85" stroke-dasharray="37 21 96 5 120 9 47 7 90 7"/><use href="#r21" transform="translate(0,-3)" fill="none" stroke="#000" stroke-width="5.0" stroke-opacity="0.25" filter="url(#sh)"/><path d="M460,512l3 2 3 0 3-1 3-1 3 1 3-1 3 1 3 1 3 1 3 2 3 0 3 2 3 1 3 2 3 1 3 2 3 2 3 0 3 0 3 1 3 0 3 1 3 0 3-1 3 0 3 0 3-1 3-1 3-2 3 2 3-1 3 0 3-1 3-1 3 0 3 1 3 1 3 1 3 1 3 2 3-1 3 1 3 0 3 1 3 2 3 0 3 1 3 2 3 0 3-1 3-1 3 0 3-1 3-2 3 0 3-2 3-1 3 2 3 0 3 2 3 0 3 0 3-2 3 0 3 0 3-1 3 2 3 1 3 2 3-3 3 5 3 1 3-1 3-1 3-2 3 2 3-2 3 1 3 1 3 0 3 0 3 0 3 0 3 1 3-1 3-4 3-1 3-1 3 2 3 1 3-1 3-2 3 0 3-1 3 1 3 1 3-1 3-1 3-2 3 1 3 1 3 1 3-1 3 2 3 0 3-2 3-2 3-2 3 0 3 0 3 1 3 3 3 2 3 2 3 1 3 3 3-3 3-3 3-2 3 7 3 8 3 0 3-1 3-1 3-2 3-1 3 1 3 3 3 3 3-1 3-3 3 0 3 3 3 3 3 0 3 3 3-2 3-1 3-1 3 2 3 2 3 2 3 2 3 1 3-1 3-4 3 1 3 2 3 2 3 1 3-1 3-2 3-1 3 4 3-3 3-4 3 4 3 4 3 4 3-4 3-3 3-2 3 0 3 2 3 0 3-5 3-2 3 4 3 4 3 4 3 3 3-2 3-3 3-2 3-2 3 3 3 4 3 3 3 4 3-2 3 0 3-2 3-2 3-2 3-1 3-1 3 1 3 2 3 2 3 1 3 2 3 2 3 0 3 0 3 0 3 0 3 0 3 0 3-1 3 0 3 0 3 0 3-5 3-3 3-6 3-4 3 4 3 4 3 0 3-1 3 446 3 0 3 0 3 0 3 0 3 0 3 0 3 0 3 0 3 0 3 0 3 0 3 0 3 0 3 0 3 0 3 0 3 0 3 0 3 0 3 0 3 0 3 0 3 0 3 0 3 0 3 0 3 0 3 0 3 0 3 0 3 0 3 0 3 0 3 0 3 0 3 0 3 0 3 0 3 0 3 0 3 0 3 0 3 0 3 0 3 0 3 0 3 0 3 0 3 0 3 0 3 0 3 0 3 0 3 0 3 0 3 0 3 0 3 0 3 0 3 0 3 0 3 0 3 0 3 0 3 0 3 0 3 0 3 0 3 0 3 0 3 0 3 0 3 0 3 0 3 0 3 0-21 0-24 0-24 0-24 0-24 0-24 0-24 0-24 0-24 0-24-370-24 10-24 1-24-7-24-3-24-5-24 6-24-5-24 2-24-4-24-9-24-6-24-8-24 2-24 1-24-2-24 7-24 2-24-8-24-1-24 7-24-6-24-3-24 3-24-3-24-12-24-1z" fill="#8a8a8a"/><use href="#r21" transform="translate(0,2.5)" fill="none" stroke="#d4d4d4" stroke-width="3" stroke-opacity="0.5"/><use href="#r21" fill="none" stroke="#000" stroke-width="0.9" stroke-opacity="0.85" stroke-dasharray="139 19 37 17 116 17 36 21 106 9"/><use href="#r22" transform="translate(0,-3)" fill="none" stroke="#000" stroke-width="5.0" stroke-opacity="0.25" filter="url(#sh)"/><path d="M460,520l3-1 3 0 3 1 3-1 3-1 3 1 3-1 3-1 3 1 3 2 3 0 3-1 3 2 3 3 3 2 3 2 3 2 3 1 3 0 3 1 3-1 3 0 3-1 3-2 3-2 3-3 3 3 3-2 3 0 3 1 3 2 3 0 3-1 3-1 3 1 3 2 3 1 3-1 3-1 3 0 3 2 3 1 3-1 3 0 3 4 3 3 3 1 3 1 3 1 3-2 3 0 3-2 3-2 3-1 3 0 3 3 3 1 3-1 3-1 3-2 3 0 3 0 3 1 3 2 3 2 3 2 3 2 3 2 3-1 3-1 3-1 3-1 3-1 3 0 3-2 3-2 3 2 3 1 3 1 3 2 3 2 3-4 3-2 3-1 3 2 3-2 3-2 3 0 3 2 3 0 3 2 3-1 3 1 3 2 3 1 3-1 3-1 3-2 3-1 3 2 3-3 3 1 3 1 3 1 3 1 3-1 3-4 3-1 3-3 3 2 3 2 3 0 3 0 3-2 3 0 3 4 3 1 3 5 3 5 3 3 3 0 3 0 3-4 3 5 3 4 3 2 3-1 3-1 3 0 3-2 3 0 3 0 3 1 3 2 3 2 3 1 3-1 3 4 3 2 3 3 3-2 3 0 3-1 3 0 3-1 3-2 3-1 3 1 3 2 3 1 3 2 3 1 3-1 3-3 3-1 3-3 3-2 3-1 3 2 3-1 3-4 3 7 3-1 3 1 3-1 3 1 3 1 3-1 3 2 3 2 3 2 3 0 3-2 3-3 3 3 3 4 3 4 3 2 3 0 3 0 3 1 3 0 3-1 3-2 3-1 3-1 3 0 3 0 3-6 3-1 3 5 3 4 3-2 3-3 3-3 3-3 3 2 3 2 3 3 3 0 3-2 3 0 3-1 3 0 3 0 3-2 3-2 3-1 3 1 3 1 3 1 3 2 3 2 3 434 3 0 3 0 3 0 3 0 3 0 3 0 3 0 3 0 3 0 3 0 3 0 3 0 3 0 3 0 3 0 3 0 3 0 3 0 3 0 3 0 3 0 3 0 3 0 3 0 3 0 3 0 3 0 3 0 3 0 3 0 3 0 3 0 3 0 3 0 3 0 3 0 3 0 3 0 3 0 3 0 3 0 3 0 3 0 3 0 3 0 3 0 3 0 3 0 3 0 3 0 3 0 3 0 3 0 3 0 3 0 3 0 3 0 3 0 3 0 3 0 3 0 3 0 3 0 3 0 3 0 3 0 3 0 3 0 3 0 3 0 3 0 3 0 3 0-21 0-24 0-24 0-24 0-24 0-24 0-24 0-24 0-24 0-24-366-24 9-24 4-24 0-24-4-24-8-24-3-24 9-24-3-24-4-24-4-24-6-24-16-24 5-24 2-24-6-24 6-24 0-24-4-24-1-24 3-24-10-24 0-24 1-24 0-24-11-24 2z" fill="#8a8a8a"/><use href="#r22" transform="translate(0,2.5)" fill="none" stroke="#d4d4d4" stroke-width="3" stroke-opacity="0.5"/><use href="#r22" fill="none" stroke="#000" stroke-width="1.1" stroke-opacity="0.85" stroke-dasharray="38 13 59 14 56 8 58 16 51 20"/><use href="#r23" transform="translate(0,-3)" fill="none" stroke="#000" stroke-width="5.1" stroke-opacity="0.26" filter="url(#sh)"/><path d="M460,517l3 1 3 0 3 2 3 1 3-3 3 3 3 4 3 1 3 0 3 0 3 1 3-1 3 2 3 1 3-1 3-1 3 0 3 0 3 0 3 2 3 2 3 2 3 1 3 0 3 0 3 0 3-1 3-1 3-2 3-1 3-1 3 2 3 4 3 0 3-1 3 0 3-1 3-1 3 3 3 1 3 0 3 3 3 2 3 3 3 0 3 0 3-2 3 1 3 0 3-1 3-1 3 1 3 0 3 1 3-2 3-1 3 0 3 0 3-2 3 2 3 3 3 1 3 0 3-1 3 1 3 1 3 0 3-2 3-1 3 0 3 1 3-2 3-1 3 2 3 0 3 3 3 0 3 1 3 1 3-1 3 0 3-1 3-1 3-1 3 1 3 1 3 1 3 1 3 1 3-2 3-1 3 0 3 2 3 1 3 1 3-1 3-1 3-2 3-1 3-3 3 2 3 2 3-2 3 0 3 1 3 0 3 0 3 1 3 1 3 0 3 1 3 3 3 0 3 1 3 1 3 0 3 1 3 3 3 1 3 3 3 0 3 1 3-1 3 0 3 0 3-1 3-1 3 2 3-2 3 0 3-1 3 1 3 2 3 2 3 2 3 2 3-1 3 1 3 0 3 1 3 0 3 1 3 1 3 1 3 0 3-2 3-1 3-2 3-2 3 1 3 1 3 3 3 3 3-1 3-1 3 0 3 1 3 2 3-1 3-4 3 2 3 2 3-2 3-2 3-2 3-1 3 3 3 2 3 3 3 1 3 0 3-1 3 2 3-3 3-3 3 1 3 5 3 2 3 1 3 1 3-1 3 1 3 0 3-1 3-2 3-2 3 1 3 2 3 3 3 2 3 1 3 1 3-1 3-2 3-2 3-2 3-2 3-2 3 0 3-2 3-3 3-2 3 0 3 2 3 3 3 0 3 2 3 1 3-1 3-1 3 0 3 0 3 1 3-2 3-3 3-3 3 5 3 432 3 0 3 0 3 0 3 0 3 0 3 0 3 0 3 0 3 0 3 0 3 0 3 0 3 0 3 0 3 0 3 0 3 0 3 0 3 0 3 0 3 0 3 0 3 0 3 0 3 0 3 0 3 0 3 0 3 0 3 0 3 0 3 0 3 0 3 0 3 0 3 0 3 0 3 0 3 0 3 0 3 0 3 0 3 0 3 0 3 0 3 0 3 0 3 0 3 0 3 0 3 0 3 0 3 0 3 0 3 0 3 0 3 0 3 0 3 0 3 0 3 0 3 0 3 0 3 0 3 0 3 0 3 0 3 0 3 0-21 0-24 0-24 0-24 0-24 0-24 0-24 0-24 0-24-360-24 8-24-3-24 13-24-5-24-9-24 0-24-2-24 1-24 2-24-4-24-6-24 0-24-10-24-7-24 6-24-2-24-1-24-4-24 1-24-3-24 3-24-7-24-4-24 3-24-6-24-2-24-8z" fill="#8a8a8a"/><use href="#r23" transform="translate(0,2.5)" fill="none" stroke="#d4d4d4" stroke-width="3" stroke-opacity="0.5"/><use href="#r23" fill="none" stroke="#000" stroke-width="1.5" stroke-opacity="0.85" stroke-dasharray="83 6 35 12 63 18 128 6 135 4"/><use href="#r24" transform="translate(0,-3)" fill="none" stroke="#000" stroke-width="5.2" stroke-opacity="0.27" filter="url(#sh)"/><path d="M460,516l3-1 3 1 3 0 3 1 3 3 3 0 3 1 3 2 3 1 3 3 3 1 3 2 3 0 3-3 3 4 3 4 3 1 3 2 3-1 3-1 3 0 3-2 3-1 3-1 3 0 3 1 3 1 3 2 3 2 3 0 3 0 3-1 3-1 3 0 3 1 3 2 3 2 3 1 3-2 3 3 3 3 3 2 3 0 3 0 3-1 3 2 3 1 3 2 3-1 3-3 3-2 3 1 3 1 3-2 3 0 3 0 3 0 3-2 3 1 3 2 3 1 3 2 3 1 3 0 3 0 3 0 3-1 3-3 3 4 3 1 3 0 3-5 3 2 3 5 3-2 3-1 3-1 3-1 3 0 3-1 3-1 3 0 3 4 3 1 3 0 3-2 3 1 3-2 3-1 3-2 3-1 3 1 3 3 3 1 3 2 3 2 3 2 3 1 3 2 3 1 3-1 3 0 3 0 3-1 3-2 3-2 3-2 3-2 3-1 3-1 3-1 3 2 3 1 3 2 3 2 3 1 3-3 3 1 3 1 3-2 3 3 3 3 3 3 3 4 3 1 3-1 3 2 3 1 3-1 3 0 3-1 3-1 3 1 3 2 3 3 3 2 3 1 3 2 3 1 3-3 3-1 3-1 3-1 3 0 3 1 3 2 3 2 3 2 3 1 3 0 3-3 3-1 3 0 3-2 3 2 3 1 3 3 3 2 3 1 3 0 3 0 3 0 3-1 3 1 3-2 3-1 3-1 3 0 3-2 3-1 3-1 3 0 3 1 3 1 3-1 3 0 3 3 3 2 3 3 3-1 3-1 3-2 3 0 3-2 3 0 3 2 3 1 3 0 3 1 3 2 3 1 3-3 3-1 3-1 3-2 3-2 3 2 3 3 3-2 3-4 3-2 3 1 3 2 3 2 3 2 3 3 3 0 3 0 3 0 3 0 3-1 3-3 3-1 3-2 3-4 3 2 3 4 3 1 3 1 3 421 3 0 3 0 3 0 3 0 3 0 3 0 3 0 3-430 3-2 3 1 3 431 3 0 3 0 3 0 3 0 3 0 3 0 3 0 3 0 3 0 3 0 3 0 3 0 3 0 3 0 3 0 3 0 3 0 3 0 3 0 3 0 3 0 3 0 3 0 3 0 3 0 3 0 3 0 3 0 3 0 3 0 3 0 3 0 3 0 3 0 3 0 3 0 3 0 3 0 3 0 3 0 3 0 3 0 3 0 3 0 3 0 3 0 3 0 3 0 3 0 3 0 3 0 3 0 3 0 3 0 3 0 3 0-21 0-24 0-24 0-24 0-24 0-24 0-24 0-24 0-24-350-24 9-24-8-24 7-24-4-24-2-24 2-24 4-24-6-24-4-24 2-24-5-24-16-24-3-24 8-24-4-24-5-24 0-24-1-24 4-24-5-24 5-24-8-24-6-24-5-24 3-24-12-24-7z" fill="#8a8a8a"/><use href="#r24" transform="translate(0,2.5)" fill="none" stroke="#d4d4d4" stroke-width="3" stroke-opacity="0.5"/><use href="#r24" fill="none" stroke="#000" stroke-width="1.0" stroke-opacity="0.85" stroke-dasharray="110 4 129 17 56 4 74 10 121 15"/><use href="#r25" transform="translate(0,-3)" fill="none" stroke="#000" stroke-width="5.3" stroke-opacity="0.27" filter="url(#sh)"/><path d="M460,519l3 1 3 1 3 0 3 0 3-1 3 0 3 3 3 3 3 3 3 2 3 1 3 2 3 2 3 0 3 2 3 1 3 1 3 0 3-2 3-2 3 0 3 3 3 1 3 0 3 1 3-1 3-1 3 1 3 0 3 0 3 0 3 3 3 1 3 2 3 2 3 1 3 2 3 1 3-1 3-3 3-4 3 5 3 4 3-2 3 0 3-1 3-1 3-2 3 0 3 1 3 2 3 1 3-1 3-1 3 2 3 0 3-1 3 2 3 2 3 1 3-1 3-3 3 0 3 3 3 1 3 0 3-1 3-1 3 0 3 1 3 2 3 0 3 1 3 0 3-1 3 1 3 0 3-1 3-2 3 0 3-2 3 1 3 2 3 2 3 1 3 0 3-3 3 1 3-2 3 2 3 3 3 2 3 0 3-1 3-1 3 0 3-2 3 1 3 1 3 1 3 1 3 2 3-1 3 1 3-1 3 0 3-2 3-2 3-1 3-2 3 0 3-2 3 1 3 2 3 2 3 2 3 2 3 3 3 3 3 1 3 1 3 1 3 2 3 1 3-2 3-1 3-1 3 1 3 2 3 0 3 0 3 2 3 2 3 1 3 2 3-1 3-3 3-2 3 4 3 2 3 3 3-2 3-3 3-2 3-2 3 4 3 3 3 4 3 1 3-1 3 0 3-1 3-1 3-1 3 1 3 0 3 1 3-2 3-1 3-1 3-1 3 1 3 1 3 1 3 2 3 1 3 1 3-2 3 0 3-1 3 0 3 1 3 1 3 0 3 0 3 2 3 2 3 1 3 1 3 2 3 0 3-1 3-2 3-2 3 1 3 0 3-2 3-1 3 1 3-1 3 0 3 2 3-2 3-2 3 1 3 1 3 2 3 1 3 1 3-2 3-1 3-2 3-2 3-1 3 1 3-2 3 0 3 0 3-1 3-1 3-1 3 1 3 1 3 0 3-2 3-2 3 3 3 1 3 2 3 1 3 1 3 416 3 0 3 0 3-425 3 1 3 2 3 2 3 0 3 1 3 0 3 1 3-1 3 419 3 0 3 0 3 0 3 0 3 0 3 0 3 0 3 0 3 0 3 0 3 0 3 0 3 0 3 0 3 0 3 0 3 0 3 0 3 0 3 0 3 0 3 0 3 0 3 0 3 0 3 0 3 0 3 0 3 0 3 0 3 0 3 0 3 0 3 0 3 0 3 0 3 0 3 0 3 0 3 0 3 0 3 0 3 0 3 0 3 0 3 0 3 0 3 0 3 0 3 0 3 0 3 0 3 0-21 0-24 0-24 0-24 0-24 0-24 0-24-341-24 341-24-347-24 5-24 7-24 0-24 0-24-1-24-3-24-4-24 4-24-8-24 3-24-8-24-2-24-15-24 9-24-4-24-3-24-2-24 2-24-2-24-3-24-4-24 1-24-5-24-3-24-1-24-13-24-7z" fill="#8a8a8a"/><use href="#r25" transform="translate(0,2.5)" fill="none" stroke="#d4d4d4" stroke-width="3" stroke-opacity="0.5"/><use href="#r25" fill="none" stroke="#000" stroke-width="1.5" stroke-opacity="0.85" stroke-dasharray="100 10 125 13 108 10 49 4 92 10"/><use href="#r26" transform="translate(0,-3)" fill="none" stroke="#000" stroke-width="5.4" stroke-opacity="0.28" filter="url(#sh)"/><path d="M460,513l3-1 3 3 3 2 3 0 3 2 3 3 3 3 3 3 3 1 3 0 3 1 3 0 3 2 3 2 3 2 3 2 3 1 3 1 3 0 3 2 3 1 3 1 3 3 3 0 3 2 3 0 3 1 3 1 3 1 3 0 3 2 3 0 3 0 3-2 3-1 3 0 3-3 3 1 3 2 3 0 3-1 3 1 3 1 3 1 3 1 3 0 3 2 3 1 3 2 3 1 3 1 3 0 3 1 3 0 3 1 3 0 3 1 3 0 3-1 3-2 3-2 3 0 3 3 3-1 3-2 3-1 3 2 3 2 3 2 3 1 3 1 3-1 3-1 3-2 3-1 3-1 3-1 3 1 3 1 3 2 3-2 3 3 3-1 3-1 3 0 3 2 3 2 3 1 3 1 3-1 3-1 3 1 3-1 3 1 3 1 3 2 3 0 3 1 3 1 3-2 3-1 3-2 3-2 3-1 3 0 3 1 3 1 3 1 3 1 3-1 3-2 3-2 3-1 3 6 3 2 3 0 3-1 3-1 3 1 3 0 3 3 3 4 3 2 3 2 3 0 3 1 3 0 3-2 3 2 3 0 3 2 3 1 3 1 3 1 3 1 3-1 3-1 3-1 3 1 3 1 3 0 3 1 3 1 3 1 3 2 3-1 3-1 3-1 3 0 3 0 3-2 3 2 3 0 3 2 3 2 3-2 3-4 3 1 3 3 3 3 3 0 3 0 3-1 3-1 3-2 3 0 3 0 3 2 3 1 3 2 3 0 3 3 3 1 3 0 3 1 3 0 3-1 3-1 3-2 3-1 3-1 3 2 3 2 3 0 3-2 3-1 3-2 3 2 3 1 3 1 3 1 3-3 3-1 3 1 3 3 3-2 3-2 3-1 3-2 3 0 3 2 3 2 3 1 3 2 3 2 3 0 3-1 3 1 3-2 3-1 3-1 3-2 3-2 3-1 3-2 3 0 3 1 3 1 3-1 3-1 3-2 3-1 3 1 3-2 3-1 3 1 3 1 3 2 3 1 3-1 3-1 3-2 3-1 3-1 3-1 3 0 3 0 3 419 3 0 3 0 3 0 3 0 3 0 3 0 3 0 3 0 3 0 3 0 3 0 3 0 3 0 3 0 3 0 3 0 3 0 3 0 3 0 3 0 3 0 3 0 3 0 3 0 3 0 3 0 3 0 3 0 3 0 3 0 3 0 3 0 3 0 3 0 3 0 3 0 3 0 3 0 3 0 3 0 3 0 3 0 3 0 3 0 3 0 3 0 3 0 3 0 3 0-21 0-24 0-24 0-24 0-24 0-24 0-24-339-24 1-24 4-24 10-24-9-24 5-24 2-24 2-24-8-24 3-24-6-24 2-24-4-24-6-24-10-24-6-24 0-24 6-24-2-24-4-24 2-24-5-24 2-24-6-24-6-24 3-24-6-24-10-24-10-24-14z" fill="#8a8a8a"/><use href="#r26" transform="translate(0,2.5)" fill="none" stroke="#d4d4d4" stroke-width="3" stroke-opacity="0.5"/><use href="#r26" fill="none" stroke="#000" stroke-width="1.5" stroke-opacity="0.85" stroke-dasharray="55 18 44 15 77 18 65 21 121 13"/><use href="#r27" transform="translate(0,-3)" fill="none" stroke="#000" stroke-width="5.5" stroke-opacity="0.28" filter="url(#sh)"/><path d="M460,516l3 0 3 0 3 2 3 2 3 2 3 3 3 0 3 0 3 1 3 0 3 1 3 3 3 1 3 2 3 3 3 3 3 2 3 0 3 1 3-1 3 0 3 0 3 0 3-1 3 2 3 3 3 1 3 3 3 2 3 2 3 3 3 0 3 0 3 0 3 2 3 2 3 0 3 0 3 0 3-1 3 1 3 0 3 1 3 0 3 1 3-1 3 0 3-1 3 0 3 0 3 0 3 0 3 2 3 2 3 1 3 1 3 1 3 1 3 1 3 1 3 0 3 1 3 1 3 0 3-1 3-3 3-3 3 2 3-2 3-1 3 2 3 1 3 1 3-1 3 0 3 0 3 0 3-1 3 0 3-1 3 3 3 2 3 2 3 2 3 1 3-1 3-1 3-1 3 0 3 2 3 1 3 2 3-1 3 2 3 1 3 0 3-1 3 0 3-2 3-4 3 4 3 0 3-1 3-2 3-2 3 1 3 2 3 1 3 1 3-1 3 1 3 4 3 2 3-1 3 0 3 0 3-1 3 0 3 1 3 0 3 0 3 1 3 2 3 3 3 1 3 0 3-2 3-1 3 0 3 2 3 2 3 0 3-4 3 3 3 0 3-1 3 2 3 2 3 1 3 1 3 1 3-1 3-1 3-1 3 0 3-2 3-1 3 2 3 3 3 4 3 0 3 0 3-1 3-1 3 0 3 1 3 0 3 0 3-2 3-1 3 1 3 1 3 1 3 0 3 1 3 2 3-1 3-1 3-1 3-1 3 1 3 2 3-1 3-1 3 4 3 1 3 0 3 1 3 2 3 2 3 0 3-1 3-1 3-2 3-2 3 1 3 1 3 1 3-2 3-2 3 1 3 2 3 3 3 2 3 0 3 0 3-1 3-1 3 0 3-1 3-1 3-2 3 1 3 2 3 0 3 0 3-2 3-2 3-2 3-1 3-2 3 1 3 0 3 2 3-1 3-1 3 0 3 0 3 0 3-3 3-1 3-1 3 1 3 1 3 1 3 1 3-3 3 1 3 3 3-1 3-1 3-2 3 0 3-2 3-2 3 0 3 0 3 0 3 1 3 1 3 410 3 0 3 0 3 0 3 0 3 0 3 0 3 0 3 0 3 0 3 0 3 0 3 0 3 0 3 0 3 0 3 0 3 0 3 0 3 0 3 0 3 0 3 0 3 0 3 0 3 0 3 0 3 0 3 0 3 0 3 0 3 0 3 0 3 0 3 0 3 0 3 0 3 0 3 0 3 0 3 0 3 0 3 0 3 0 3 0 3 0 3 0-21 0-24 0-24 0-24 0-24 0-24-332-24 2-24 1-24 3-24 4-24 4-24-2-24 0-24-1-24-4-24-4-24 4-24-6-24-4-24-2-24-4-24-1-24-7-24 6-24-7-24-7-24 2-24 5-24-6-24-6-24-1-24-3-24-16-24-2-24-13-24-10z" fill="#8a8a8a"/><use href="#r27" transform="translate(0,2.5)" fill="none" stroke="#d4d4d4" stroke-width="3" stroke-opacity="0.5"/><use href="#r27" fill="none" stroke="#000" stroke-width="1.0" stroke-opacity="0.85" stroke-dasharray="86 20 107 10 89 17 62 15 34 11"/><use href="#r28" transform="translate(0,-3)" fill="none" stroke="#000" stroke-width="5.6" stroke-opacity="0.29" filter="url(#sh)"/><path d="M460,511l3 3 3 4 3 1 3 2 3 0 3 2 3 3 3 2 3 2 3 2 3 2 3-1 3-1 3 5 3 3 3 2 3 1 3 1 3 2 3 0 3 1 3-1 3 0 3-1 3 3 3 1 3 1 3-1 3-1 3 3 3 1 3 0 3 3 3 2 3 3 3 2 3 2 3 0 3-1 3-2 3 0 3-2 3-1 3 2 3 2 3 2 3-1 3-1 3-3 3 2 3 3 3 2 3 1 3 3 3 1 3 0 3-1 3 0 3-2 3 0 3-1 3-1 3 1 3 2 3 1 3 2 3 2 3 1 3-2 3-1 3 1 3-1 3-1 3 1 3 2 3 3 3 2 3-1 3-1 3-2 3 0 3 1 3-1 3 1 3 3 3 2 3 1 3 0 3 0 3 0 3-1 3-1 3-2 3 4 3 3 3 2 3 0 3-1 3-1 3-2 3 0 3 1 3-3 3 0 3 4 3 0 3-3 3 2 3-2 3-1 3 0 3 0 3-1 3 1 3 2 3 2 3 2 3 1 3 0 3 0 3 1 3 1 3 1 3 0 3 0 3 1 3-2 3 2 3 2 3 1 3 0 3-2 3-2 3 0 3 2 3 2 3-1 3-1 3 1 3 0 3 2 3 1 3 2 3 1 3 1 3-1 3-2 3-3 3 5 3 0 3 0 3 1 3 2 3 1 3 1 3 1 3 0 3 1 3 1 3 0 3 0 3 1 3 0 3 0 3 0 3 1 3 0 3 0 3-1 3-1 3-2 3 0 3-2 3 0 3 1 3 3 3 3 3 1 3 3 3 2 3 1 3 0 3 0 3-2 3-2 3-1 3-1 3-2 3-1 3 2 3 3 3-1 3-2 3 1 3 1 3 1 3 0 3 1 3 0 3-1 3-1 3-2 3-1 3-2 3-1 3 2 3 2 3 2 3 0 3 0 3-1 3-1 3-1 3-3 3-4 3-2 3 2 3 0 3 0 3-2 3-1 3-1 3 1 3 0 3 1 3 0 3 1 3 0 3-2 3-2 3-2 3 0 3 3 3 2 3-3 3-2 3 1 3-1 3-3 3 1 3-4 3 3 3 2 3-3 3 408 3 0 3 0 3 0 3 0 3 0 3 0 3 0 3 0 3 0 3 0 3 0 3 0 3 0 3 0 3 0 3 0 3 0 3 0 3 0 3 0 3 0 3 0 3 0 3 0 3 0 3 0 3 0 3 0 3 0 3 0 3 0 3 0 3 0 3 0 3 0 3 0 3 0 3 0 3 0 3 0 3 0 3 0-21 0-24 0-24 0-24 0-24 0-24-328-24 3-24 4-24 0-24 12-24 1-24-1-24 3-24-7-24 1-24-2-24-7-24-1-24-4-24-4-24-4-24-7-24 0-24 6-24-4-24-7-24-4-24-3-24 2-24-9-24 0-24-10-24-7-24-3-24-14-24-17z" fill="#8a8a8a"/><use href="#r28" transform="translate(0,2.5)" fill="none" stroke="#d4d4d4" stroke-width="3" stroke-opacity="0.5"/><use href="#r28" fill="none" stroke="#000" stroke-width="1.5" stroke-opacity="0.85" stroke-dasharray="41 6 72 19 45 12 124 4 99 13"/><use href="#r29" transform="translate(0,-3)" fill="none" stroke="#000" stroke-width="5.7" stroke-opacity="0.30" filter="url(#sh)"/><path d="M460,516l3 2 3 3 3 0 3 0 3 0 3 1 3-1 3 3 3 1 3 2 3 3 3 3 3 1 3 1 3 0 3 3 3 1 3 1 3 1 3-1 3 2 3 0 3 0 3 1 3 1 3 2 3 0 3 1 3 3 3 0 3 1 3 1 3 3 3 3 3 2 3 2 3 3 3 1 3 2 3 0 3 1 3 2 3 1 3-1 3-1 3-1 3-1 3 2 3 2 3-1 3 0 3 0 3-1 3 0 3-1 3 0 3 2 3 1 3 2 3 2 3 2 3 1 3 1 3-1 3 1 3 1 3 1 3-1 3-2 3-2 3 1 3 0 3 1 3-1 3 4 3-2 3-1 3 2 3 0 3-1 3 2 3 1 3-1 3 0 3-1 3 0 3 1 3 2 3 1 3 2 3 2 3-1 3 2 3 3 3-1 3-1 3 1 3 0 3 0 3-2 3-2 3-2 3 0 3 1 3 1 3 1 3 2 3 0 3 2 3-1 3-2 3-2 3 1 3 0 3 1 3 2 3-1 3 1 3 2 3 2 3 2 3 1 3 0 3 0 3 2 3 1 3 1 3-1 3-2 3 0 3 0 3 1 3 1 3 2 3-1 3-2 3 1 3 2 3 1 3-1 3-1 3 0 3-2 3 0 3 2 3 1 3 3 3 2 3 1 3 2 3 3 3 0 3-2 3-2 3-2 3-1 3-2 3-2 3 3 3 2 3 3 3 0 3-2 3-2 3-1 3-1 3 2 3 3 3 2 3 2 3 2 3 2 3 0 3 0 3 0 3-1 3 0 3 0 3 0 3-1 3 1 3 0 3 0 3-1 3-1 3 1 3 1 3 1 3 1 3-1 3-2 3-2 3-1 3-1 3 2 3 1 3 1 3 2 3 1 3 0 3 1 3 0 3-1 3 0 3 0 3 1 3 0 3-1 3 0 3 0 3-1 3 0 3-1 3 0 3-2 3-1 3 0 3-1 3 0 3 0 3-1 3 0 3-1 3 0 3-1 3-2 3-1 3-1 3-1 3-2 3 2 3 0 3 1 3 0 3 1 3 1 3-1 3-3 3-3 3-2 3-2 3 1 3 1 3-2 3 3 3 2 3-3 3-1 3 2 3 1 3 0 3-2 3-6 3-4 3 410 3 0 3 0 3 0 3 0 3 0 3 0 3 0 3 0 3 0 3 0 3 0 3 0 3 0 3 0 3 0 3 0 3 0 3 0 3 0 3 0 3 0 3 0 3 0 3 0 3 0 3 0 3 0 3 0 3 0 3 0 3 0 3 0-21 0-24 0-24 0-24 0-24-322-24 1-24 6-24 5-24 4-24 5-24 0-24-5-24 1-24 2-24-8-24-1-24 6-24-15-24 1-24 0-24-6-24-7-24-1-24 4-24-8-24-4-24-2-24 2-24-11-24 2-24-2-24-16-24-9-24-6-24-13-24-8z" fill="#8a8a8a"/><use href="#r29" transform="translate(0,2.5)" fill="none" stroke="#d4d4d4" stroke-width="3" stroke-opacity="0.5"/><use href="#r29" fill="none" stroke="#000" stroke-width="1.6" stroke-opacity="0.85" stroke-dasharray="64 10 117 15 47 21 87 17 46 16"/><use href="#r30" transform="translate(0,-3)" fill="none" stroke="#000" stroke-width="5.8" stroke-opacity="0.30" filter="url(#sh)"/><path d="M460,517l3 1 3 2 3 1 3 1 3-1 3 1 3-1 3 0 3 3 3 3 3 1 3 3 3 1 3 0 3-4 3 5 3-2 3 2 3 3 3 2 3 4 3 2 3-3 3-2 3 3 3 4 3 3 3-1 3-1 3 4 3 2 3 0 3 0 3 0 3 0 3 4 3 3 3 3 3 3 3 2 3 0 3 1 3 0 3 1 3 0 3 1 3 0 3 2 3 2 3-2 3-2 3 1 3 4 3 4 3 4 3 0 3 0 3 0 3-1 3-1 3 1 3 0 3-2 3 0 3-1 3 0 3 2 3 2 3 2 3 0 3-1 3-1 3 0 3-1 3 1 3 2 3 1 3 2 3-1 3-1 3-1 3 2 3 1 3 1 3 1 3 0 3-1 3 0 3 3 3-1 3 0 3-1 3 0 3 1 3 2 3 1 3 1 3 1 3-4 3-3 3 4 3 0 3-1 3-2 3 2 3 1 3-1 3-1 3 3 3 2 3 2 3 2 3 2 3 2 3 0 3-2 3-3 3 4 3 3 3 1 3 1 3 1 3-1 3 1 3-1 3-2 3-2 3 0 3-1 3 3 3 2 3 1 3 0 3-2 3-2 3 4 3 4 3 1 3 1 3 0 3 0 3-1 3 0 3-2 3-1 3-1 3 2 3-1 3 0 3 0 3 1 3-1 3-2 3 3 3 2 3 2 3 0 3 0 3-2 3 0 3 3 3 2 3 1 3 2 3 0 3 0 3-1 3-1 3 1 3-1 3-2 3 0 3 0 3-1 3 0 3 0 3 0 3 3 3 1 3 1 3 1 3 2 3 1 3 2 3 1 3-1 3 1 3 0 3 0 3 0 3 1 3-1 3 0 3 0 3-1 3 0 3-1 3-2 3-3 3-2 3-3 3-1 3 1 3 3 3 1 3 2 3 1 3 3 3-1 3-1 3-6 3-4 3 2 3 2 3-3 3-2 3 1 3 2 3 2 3-1 3-3 3-2 3 0 3 2 3 1 3-1 3 0 3-2 3-1 3-1 3 0 3-2 3 2 3-2 3-2 3-1 3-1 3 2 3 0 3 1 3-2 3-3 3-2 3 0 3 0 3 1 3 0 3 1 3 1 3-1 3-3 3-3 3-2 3 3 3 3 3 0 3 0 3 1 3-1 3-1 3 399 3 0 3 0 3 0 3 0 3 0 3 0 3 0 3 0 3 0 3 0 3 0 3 0 3 0 3 0 3 0 3 0 3 0 3 0 3 0 3 0 3 0 3 0 3 0 3 0 3 0 3 0-21 0-24 0-24 0-24-319-24 2-24 5-24 1-24 6-24-1-24 13-24-7-24 9-24-2-24-10-24 3-24-7-24-2-24 1-24-3-24-6-24 4-24-7-24-10-24 4-24-5-24-3-24-3-24-3-24 3-24-11-24-5-24-15-24-14-24-7-24-11-24-4z" fill="#8a8a8a"/><use href="#r30" transform="translate(0,2.5)" fill="none" stroke="#d4d4d4" stroke-width="3" stroke-opacity="0.5"/><use href="#r30" fill="none" stroke="#000" stroke-width="1.6" stroke-opacity="0.85" stroke-dasharray="57 18 138 21 60 20 126 19 115 19"/><use href="#r31" transform="translate(0,-3)" fill="none" stroke="#000" stroke-width="5.9" stroke-opacity="0.31" filter="url(#sh)"/><path d="M460,515l3 4 3-1 3-1 3 3 3 4 3-1 3 0 3 0 3 2 3 2 3 0 3 1 3 1 3 3 3 0 3-2 3 0 3 3 3 3 3 3 3 2 3 2 3 1 3-1 3 1 3 1 3 0 3 1 3 2 3 2 3 2 3 2 3 3 3 0 3 0 3-1 3-1 3 1 3 3 3 3 3 0 3 0 3 3 3 4 3 0 3 0 3-1 3-1 3 1 3 3 3 2 3 2 3 1 3 2 3 3 3 0 3 5 3 3 3 2 3 2 3-1 3-1 3 0 3-2 3-2 3-1 3-1 3-1 3 3 3-1 3 1 3 3 3 0 3 1 3 0 3 0 3 3 3 0 3 3 3 3 3 2 3 1 3 0 3 0 3-1 3-4 3-1 3 1 3 3 3 3 3 1 3 1 3-1 3-3 3-4 3 3 3 2 3-1 3-1 3-1 3-1 3 1 3 1 3 0 3 1 3 1 3 1 3 2 3 0 3 0 3-1 3-1 3-1 3-1 3 1 3 2 3 2 3 1 3 1 3-1 3-1 3-2 3-2 3 2 3 3 3 2 3 1 3-1 3-1 3-1 3 0 3 2 3 2 3-1 3 4 3 2 3 1 3 3 3-1 3-1 3 0 3-1 3-1 3-1 3-1 3-1 3 0 3 2 3 0 3-1 3 2 3 2 3 1 3 2 3 1 3 3 3 1 3 1 3 2 3 0 3 0 3 0 3 0 3 1 3-1 3 0 3-2 3-1 3-1 3 0 3 2 3 3 3 0 3-2 3 0 3-1 3-1 3-1 3-1 3-1 3 2 3 2 3 2 3 2 3 0 3-1 3 0 3-1 3-2 3 1 3 0 3 0 3-2 3-1 3 2 3 2 3 2 3 2 3-3 3-3 3-2 3 1 3 3 3 3 3 2 3 0 3-1 3-1 3-2 3-2 3-3 3-2 3 1 3 1 3 0 3-3 3-3 3 2 3-2 3 1 3-1 3-2 3-1 3-2 3 2 3 0 3 2 3-3 3 0 3 4 3 3 3 1 3 0 3 0 3-1 3 0 3 0 3-1 3 0 3-1 3 0 3-2 3-1 3-2 3-2 3-2 3-1 3-2 3 0 3-2 3-2 3 2 3 1 3-2 3 1 3-2 3-3 3-4 3 5 3 3 3 0 3-1 3-2 3-1 3-2 3 400 3 0 3 0 3-403 3 1 3 1 3 1 3 400 3 0 3 0 3 0 3 0 3 0 3 0 3 0 3 0 3 0 3 0 3 0 3 0 3 0 3 0-21 0-24-321-24 3-24 2-24 4-24 13-24 2-24-8-24 7-24 10-24-5-24 1-24 3-24-4-24-1-24 3-24-11-24-3-24 1-24-6-24-3-24-3-24-4-24 0-24-3-24 2-24-10-24-1-24-8-24-14-24-5-24-8-24-11-24-13-24-7-24-8z" fill="#8a8a8a"/><use href="#r31" transform="translate(0,2.5)" fill="none" stroke="#d4d4d4" stroke-width="3" stroke-opacity="0.5"/><use href="#r31" fill="none" stroke="#000" stroke-width="1.3" stroke-opacity="0.85" stroke-dasharray="120 20 136 4 138 4 101 21 139 20"/><use href="#r32" transform="translate(0,-3)" fill="none" stroke="#000" stroke-width="6.0" stroke-opacity="0.31" filter="url(#sh)"/><path d="M460,522l3 0 3-1 3 1 3 0 3-1 3 0 3 1 3 2 3-1 3 3 3 3 3-1 3-1 3 1 3 2 3 3 3 3 3 1 3 0 3 4 3 3 3 1 3-1 3 0 3 1 3 2 3 0 3 1 3 0 3 0 3 2 3 3 3 2 3 2 3 0 3-2 3-3 3 5 3 3 3 0 3 0 3 0 3 3 3 2 3 3 3 4 3-1 3-1 3 1 3 3 3 2 3 4 3 3 3 3 3 2 3 1 3-1 3 0 3 0 3 0 3 0 3 2 3 2 3 0 3-1 3 1 3 0 3 2 3 1 3 3 3 1 3 0 3 1 3-1 3 2 3 0 3 3 3-2 3-1 3 1 3 2 3 0 3-5 3 1 3 5 3 4 3 0 3-2 3-3 3-2 3 3 3 1 3 0 3 0 3 1 3 0 3 0 3 2 3 2 3 0 3-1 3-2 3 0 3-2 3 0 3 0 3 1 3 2 3 3 3 1 3 1 3 1 3-1 3 0 3-2 3-1 3 0 3 1 3 1 3 2 3-3 3 6 3 1 3-2 3-1 3-1 3-1 3 3 3 1 3 0 3 0 3-1 3-3 3 3 3 3 3-2 3-1 3-1 3 1 3 3 3-1 3 3 3 1 3-1 3 0 3 1 3 2 3 1 3 0 3 2 3-1 3-1 3-2 3 0 3 2 3 2 3 3 3 2 3 2 3-1 3 0 3-1 3-1 3 0 3-1 3-1 3-1 3 1 3 2 3 0 3 1 3 0 3-1 3 1 3 1 3 2 3 0 3 0 3-2 3-3 3-1 3 4 3 3 3 3 3-1 3 0 3-1 3-1 3-1 3-1 3-2 3 2 3 0 3 2 3 0 3-1 3-1 3 1 3 1 3 2 3 0 3-4 3-1 3 2 3 0 3 0 3-1 3-1 3-1 3 0 3 0 3 1 3 1 3 0 3 0 3 0 3 1 3-3 3-1 3-2 3-2 3-1 3 0 3 2 3-3 3-2 3 0 3-1 3 2 3 3 3 1 3-3 3-2 3-3 3 1 3 2 3 2 3-1 3-1 3-2 3 0 3-1 3-1 3 1 3 0 3-1 3-2 3-1 3-1 3-1 3-2 3 0 3 0 3 1 3 0 3 0 3 1 3 0 3 0 3-2 3-4 3-4 3 2 3 0 3-1 3-1 3-2 3 2 3 0 3 2 3 0 3 1 3 2 3-1 3-2 3-3 3-2 3-3 3 2 3-1 3 400 3 0 3 0 3 0 3 0 3 0 3 0-21-321-24 9-24-2-24 8-24 2-24 6-24 4-24 3-24 6-24-2-24 5-24-4-24 5-24-4-24-5-24 4-24-9-24-3-24-4-24-1-24-2-24-1-24-8-24 0-24 0-24-4-24-4-24-7-24-3-24-18-24-10-24-7-24-9-24-11-24-10-24-1z" fill="#8a8a8a"/><use href="#r32" transform="translate(0,2.5)" fill="none" stroke="#d4d4d4" stroke-width="3" stroke-opacity="0.5"/><use href="#r32" fill="none" stroke="#000" stroke-width="1.1" stroke-opacity="0.85" stroke-dasharray="46 17 34 22 78 18 82 13 134 12"/><use href="#r33" transform="translate(0,-3)" fill="none" stroke="#000" stroke-width="6.1" stroke-opacity="0.32" filter="url(#sh)"/><path d="M460,514l3 2 3 4 3 3 3 4 3 1 3-1 3-1 3 0 3-1 3-1 3 0 3 2 3 4 3 2 3 2 3 3 3 1 3-1 3 2 3-1 3 2 3-2 3-3 3 5 3-1 3 1 3 4 3 2 3 3 3 2 3 1 3-1 3 0 3-1 3 0 3 3 3 2 3 3 3 1 3-1 3 1 3 2 3 3 3 2 3 3 3 1 3 0 3-1 3-1 3 1 3 2 3 3 3 3 3 1 3-1 3-1 3 1 3 4 3 2 3 2 3 3 3 2 3 2 3 2 3 0 3 0 3-1 3-3 3-1 3 2 3 4 3 2 3 1 3-1 3-1 3 4 3 3 3 3 3 3 3 1 3 0 3-1 3-3 3 2 3 0 3 1 3 2 3 1 3 1 3 1 3 2 3 0 3-2 3-2 3-2 3 2 3-1 3-2 3 1 3 2 3 2 3 2 3 3 3 1 3-1 3-2 3 0 3-1 3 3 3 0 3 1 3 2 3 1 3 0 3-4 3 4 3 0 3-1 3-2 3-1 3-2 3 1 3 2 3 2 3 3 3 3 3 2 3 2 3 0 3 0 3-3 3-3 3-2 3-2 3 3 3 2 3-3 3-1 3 4 3-1 3 0 3 1 3 3 3 0 3 1 3-1 3-1 3-1 3 0 3 1 3 3 3 3 3 0 3-1 3-2 3 1 3 1 3 3 3 1 3 2 3 2 3 1 3 0 3 0 3-1 3 0 3 0 3-1 3-1 3 2 3 2 3 0 3-1 3 1 3 2 3 2 3 0 3 0 3-1 3-1 3-1 3 1 3-1 3-1 3 0 3-1 3-2 3-1 3 2 3 1 3 0 3 1 3 1 3 1 3 2 3 2 3-1 3-3 3-2 3 2 3 3 3-1 3-4 3-3 3-2 3 3 3-1 3-1 3 1 3 1 3 0 3-2 3 0 3-2 3 0 3 0 3 1 3 1 3-1 3 1 3 0 3 1 3 1 3-1 3 0 3-1 3-2 3-2 3-3 3-3 3-3 3 0 3-1 3 3 3 3 3 2 3-4 3-4 3-5 3 3 3 0 3-3 3-3 3 1 3 1 3 1 3 0 3 0 3 0 3 1 3 1 3 0 3 0 3 1 3 1 3-1 3 0 3-1 3 1 3 0 3-1 3 0 3-1 3 0 3 0 3 0 3 0 3-2 3 0 3 0 3-1 3-2 3-4 3-2 3-3 3-3 3 1 3 1 3 2 3 2 3 0 3-1 3-2 3-1 3 393 3 0 3 0-21-309-24 5-24 6-24 2-24-3-24 3-24 3-24 14-24-3-24 2-24 6-24-2-24 0-24 3-24-6-24-1-24-5-24-5-24-3-24 4-24-13-24 4-24-2-24-8-24 0-24-2-24-13-24-3-24-18-24-7-24-11-24-7-24-11-24-4-24-10-24-13z" fill="#8a8a8a"/><use href="#r33" transform="translate(0,2.5)" fill="none" stroke="#d4d4d4" stroke-width="3" stroke-opacity="0.5"/><use href="#r33" fill="none" stroke="#000" stroke-width="1.6" stroke-opacity="0.85" stroke-dasharray="81 5 119 18 46 11 56 5 123 4"/><use href="#r34" transform="translate(0,-3)" fill="none" stroke="#000" stroke-width="6.2" stroke-opacity="0.33" filter="url(#sh)"/><path d="M460,523l3 1 3 1 3 1 3-1 3-2 3-2 3-1 3 3 3 3 3 0 3 1 3 2 3 3 3 2 3 2 3 0 3-1 3 0 3 2 3 2 3 2 3 2 3 0 3 1 3-1 3 0 3 0 3 0 3 4 3 3 3 1 3 0 3 1 3 4 3 1 3 3 3 3 3 1 3 0 3 0 3 1 3 3 3 2 3 2 3 3 3 2 3 1 3 0 3-1 3 1 3 0 3 0 3 0 3 0 3 0 3 3 3 3 3 3 3-1 3 0 3-2 3 2 3 2 3-2 3-1 3 1 3 1 3 3 3 0 3 0 3 1 3 3 3 2 3 0 3 0 3 2 3 3 3 0 3 2 3 3 3 2 3 2 3 3 3 2 3 2 3-2 3 0 3-1 3 0 3-1 3 0 3 2 3 3 3 2 3-1 3-1 3 3 3 3 3 0 3-1 3 1 3-1 3-1 3-1 3-1 3 1 3 0 3 2 3 2 3 1 3 1 3 1 3 1 3 1 3-1 3-1 3-2 3-2 3-2 3 2 3 2 3 2 3-1 3 2 3 3 3 3 3 1 3 3 3 1 3 0 3 1 3 0 3 1 3-1 3-2 3-1 3-1 3-1 3-1 3-2 3-1 3 0 3 1 3 2 3 2 3 0 3-2 3-2 3 2 3 0 3 3 3 1 3 1 3 1 3 1 3 2 3 2 3 2 3 0 3 0 3-1 3-1 3-1 3-2 3-1 3 0 3 1 3 3 3 1 3-1 3 2 3 1 3 3 3 1 3 2 3 1 3 0 3-1 3-2 3-1 3 0 3-1 3 1 3 1 3 1 3 0 3 2 3 1 3-1 3-2 3-1 3-2 3-1 3 1 3 1 3 2 3-2 3-2 3-1 3-2 3 1 3 1 3 1 3 1 3 0 3-2 3-2 3-1 3-2 3-1 3 1 3 1 3 1 3 1 3 0 3 2 3 1 3 1 3 0 3-1 3-1 3-1 3-1 3-2 3-1 3-1 3-2 3-1 3-2 3-2 3-3 3-1 3 0 3 2 3-1 3-1 3-2 3-2 3 1 3 1 3 3 3-1 3-2 3 2 3-2 3-3 3 2 3 1 3-1 3-4 3-2 3-2 3 3 3 1 3 1 3 1 3-3 3-2 3 1 3 2 3-3 3-3 3 1 3 3 3 2 3 2 3-3 3 0 3-2 3-2 3-3 3-2 3-2 3 0 3 1 3 1 3 0 3-2 3-3 3-1 3 0 3 1 3 2 3 0 3 2 3-1 3 1-21 75-24 7-24 7-24 4-24 3-24 0-24 2-24 13-24 4-24-3-24 1-24 4-24 2-24 3-24-10-24 2-24-9-24-4-24 3-24 1-24-15-24 4-24-7-24-3-24-4-24-8-24-12-24-8-24-4-24-4-24-14-24-13-24-7-24-8-24-13-24 0z" fill="#8a8a8a"/><use href="#r34" transform="translate(0,2.5)" fill="none" stroke="#d4d4d4" stroke-width="3" stroke-opacity="0.5"/><use href="#r34" fill="none" stroke="#000" stroke-width="1.6" stroke-opacity="0.85" stroke-dasharray="52 16 72 21 93 9 67 17 124 22"/><use href="#r35" transform="translate(0,-3)" fill="none" stroke="#000" stroke-width="6.3" stroke-opacity="0.33" filter="url(#sh)"/><path d="M460,517l3 1 3 1 3 2 3 2 3 2 3 3 3 3 3 2 3 2 3 2 3 2 3 0 3 0 3 1 3 1 3 0 3 0 3 1 3-1 3-3 3-3 3 5 3 2 3-2 3 0 3 8 3 5 3 2 3 1 3 0 3 0 3 0 3-1 3 2 3 1 3 2 3 1 3 2 3 1 3 2 3 2 3 2 3 2 3 0 3-1 3-1 3-1 3 2 3 0 3 1 3 1 3 2 3 3 3 2 3 1 3 1 3 3 3 2 3 0 3-1 3-3 3-1 3 4 3 3 3 5 3 2 3 0 3-2 3-1 3-1 3-3 3 5 3 3 3 0 3 3 3 2 3 2 3 1 3 2 3-1 3-2 3 2 3 4 3 3 3 1 3-1 3 1 3 0 3 1 3 0 3 3 3 3 3 3 3 2 3 2 3 3 3 2 3 1 3 0 3-1 3-1 3-1 3-1 3-1 3-1 3-1 3 2 3-1 3-1 3 1 3 1 3 2 3 1 3 1 3 0 3-1 3 1 3 1 3 2 3 1 3 2 3 2 3 1 3 0 3-2 3 0 3-1 3-2 3 0 3 0 3 2 3-1 3 0 3 0 3 3 3 1 3 0 3-3 3 3 3 1 3 3 3 1 3-1 3-2 3-1 3-2 3 0 3-2 3 2 3 3 3 2 3 2 3-2 3-3 3 3 3 2 3 4 3 3 3 0 3-1 3 0 3 0 3-1 3 1 3 1 3 2 3 1 3 1 3 0 3 1 3 0 3 1 3 1 3 2 3 0 3 0 3-2 3 1 3-1 3 1 3 2 3 0 3 1 3 2 3-1 3-2 3-1 3-1 3-1 3-1 3-3 3 2 3 1 3 2 3 1 3 1 3 0 3 0 3-1 3 0 3 0 3-1 3-1 3-2 3 0 3-2 3-1 3 0 3-2 3 0 3-1 3 1 3-1 3-2 3-2 3-1 3 2 3 0 3-1 3 1 3-3 3-2 3 1 3 1 3-1 3-2 3-1 3 0 3-2 3 1 3 2 3 0 3-1 3-1 3-1 3 0 3-1 3-2 3-2 3-2 3-1 3-1 3 1 3 2 3 1 3 1 3 1 3-1 3-3 3-1 3-2 3-1 3-2 3 1 3 1 3-2 3-1 3-1 3 2 3 4 3 1 3 0 3 2 3 0 3-3 3-1 3-3 3-2 3-3 3-2 3-1 3 1 3 1 3 1 3-1 3 0 3 1 3 0 3 1 3-4 3-3 3-1 3 2 3 4 3 1 3 0 3-2-21 80-24 1-24 13-24-6-24 8-24-3-24 11-24 2-24 2-24 7-24 7-24-4-24 8-24-4-24-4-24-6-24-5-24-4-24-2-24-6-24 0-24-6-24-2-24 2-24-17-24-7-24-13-24-5-24-6-24-11-24-6-24-10-24-15-24 1-24-9-24-16z" fill="#8a8a8a"/><use href="#r35" transform="translate(0,2.5)" fill="none" stroke="#d4d4d4" stroke-width="3" stroke-opacity="0.5"/><use href="#r35" fill="none" stroke="#000" stroke-width="1.1" stroke-opacity="0.85" stroke-dasharray="137 16 39 10 114 9 118 12 110 13"/><use href="#r36" transform="translate(0,-3)" fill="none" stroke="#000" stroke-width="6.3" stroke-opacity="0.34" filter="url(#sh)"/><path d="M460,522l3-1 3 0 3-1 3 0 3 0 3 3 3 3 3 3 3 4 3 3 3 2 3-1 3-1 3 0 3-1 3-1 3-1 3-1 3-1 3 0 3 2 3 3 3 4 3 2 3 3 3-1 3-2 3 5 3 3 3-2 3 2 3 3 3-1 3 0 3 1 3 4 3 0 3-1 3 2 3 4 3 2 3-1 3 1 3 0 3 3 3 2 3 2 3 3 3 2 3 3 3 2 3 3 3 1 3 1 3 1 3 1 3 0 3 0 3 0 3-1 3-5 3 2 3 4 3 1 3 0 3-1 3-2 3 0 3 2 3 4 3 1 3 1 3 2 3 3 3 2 3 3 3 1 3-1 3 0 3 2 3-2 3 1 3 4 3 1 3 1 3-1 3-1 3 1 3 6 3 5 3 0 3-1 3 0 3-2 3 4 3 4 3 3 3 1 3-1 3-2 3 0 3 5 3 4 3 0 3-1 3 1 3-3 3 1 3 3 3 3 3-5 3 0 3 5 3 3 3 1 3 1 3-1 3 0 3-1 3 0 3 2 3-1 3-4 3 4 3 5 3-1 3 1 3-1 3 0 3 0 3-1 3 0 3 2 3 2 3 2 3-2 3-2 3-1 3-2 3-1 3 0 3 1 3 1 3 2 3 3 3 1 3 2 3 1 3 0 3 0 3 1 3 0 3-3 3-4 3 2 3 5 3 5 3 1 3-1 3-1 3-2 3-3 3-1 3 2 3 4 3 3 3 3 3 2 3 1 3-1 3 1 3 0 3-1 3 0 3 0 3-1 3-2 3-2 3 0 3-3 3 1 3 2 3 2 3 2 3 1 3 2 3 0 3-3 3-2 3-1 3-2 3-2 3 2 3 1 3 1 3 2 3-1 3 0 3-2 3 0 3 2 3-1 3-1 3-1 3 0 3-2 3-2 3 0 3 0 3-1 3-2 3 2 3 3 3 0 3-2 3-2 3-1 3 2 3 1 3 0 3-2 3 2 3 0 3-2 3-3 3-2 3 1 3 1 3 2 3 1 3 2 3-2 3 0 3-3 3-4 3-3 3-4 3-1 3 1 3 2 3 3 3 2 3 1 3-1 3 0 3 0 3-2 3-3 3-3 3-4 3 1 3 3 3 0 3-1 3 0 3 1 3-1 3-3 3 1 3 3 3 1 3 0 3 0 3 1 3-1 3-1 3 0 3-1 3-1 3 0 3-1 3-1 3-1 3-2 3-1 3-3 3-1 3-3 3-2 3-2 3 1 3-1 3-1 3-1 3-2 3-2 3-3-21 90-24 15-24 5-24-2-24 3-24 1-24 12-24 0-24 0-24 2-24 4-24-2-24 7-24 0-24 0-24-8-24-3-24-8-24 1-24-2-24-6-24-8-24 2-24-10-24-16-24-4-24-12-24-5-24-2-24-14-24-11-24-10-24-10-24-8-24-5-24-8z" fill="#8a8a8a"/><use href="#r36" transform="translate(0,2.5)" fill="none" stroke="#d4d4d4" stroke-width="3" stroke-opacity="0.5"/><use href="#r36" fill="none" stroke="#000" stroke-width="1.3" stroke-opacity="0.85" stroke-dasharray="36 22 72 8 64 17 45 18 120 6"/><use href="#r37" transform="translate(0,-3)" fill="none" stroke="#000" stroke-width="6.4" stroke-opacity="0.34" filter="url(#sh)"/><path d="M460,519l3 0 3 0 3 2 3 1 3-1 3 0 3 3 3 3 3 1 3 2 3 1 3 2 3 2 3 0 3-2 3 0 3-2 3 0 3 0 3 3 3 1 3 3 3 3 3 3 3 2 3-1 3-2 3 0 3 4 3 1 3-1 3 0 3 3 3 3 3 4 3 2 3 1 3-2 3 0 3 3 3 2 3 2 3 0 3 0 3-2 3-1 3 3 3 3 3 3 3-1 3 3 3 2 3 2 3 2 3 2 3 2 3 1 3 1 3-1 3-2 3 0 3 2 3 2 3 2 3 3 3 4 3 0 3-1 3 1 3 0 3 1 3 0 3 0 3 2 3 2 3 3 3 2 3 1 3 0 3 1 3-1 3 0 3 2 3 2 3 3 3-1 3-4 3 5 3 7 3 1 3-1 3-2 3-2 3 3 3 3 3 4 3 4 3 3 3 3 3-1 3 0 3-2 3 0 3 1 3 3 3 3 3 2 3 3 3 0 3-3 3-2 3-2 3-2 3 4 3 5 3 2 3 0 3 1 3 2 3-1 3 1 3 2 3 2 3 3 3 0 3-1 3 1 3-2 3-3 3 3 3 3 3 0 3 0 3 0 3 0 3 0 3 1 3-3 3-1 3 2 3 0 3 1 3 1 3 1 3 3 3-1 3-1 3 0 3-2 3-1 3 2 3 2 3 1 3 2 3 2 3 1 3 2 3 1 3 1 3 0 3 1 3 0 3 0 3 1 3-5 3-4 3 2 3 5 3 5 3 1 3 0 3 0 3 2 3-1 3-1 3-2 3 0 3 0 3 1 3-1 3-2 3-3 3 2 3 3 3-6 3 2 3 4 3 1 3 1 3 1 3-1 3-1 3-1 3-2 3-1 3 1 3-2 3-2 3 3 3 1 3 3 3 0 3-2 3-5 3-2 3 3 3-2 3-2 3-3 3-2 3-1 3 3 3 1 3 2 3 1 3 2 3 0 3 1 3 0 3 0 3-2 3-1 3-2 3-3 3-2 3-2 3-1 3-1 3 0 3 2 3 0 3-1 3 1 3-1 3 0 3-1 3 0 3 0 3-2 3-1 3-2 3-1 3-1 3-2 3 0 3-2 3 1 3 0 3 2 3 0 3 1 3 0 3 2 3-1 3-4 3-4 3-1 3 2 3 3 3 1 3-3 3-4 3 3 3 0 3-2 3-3 3-1 3-1 3-2 3-2 3-1 3-3 3-1 3 0 3 0 3 0 3-1 3-1 3-1 3 0 3 0 3 0 3 0 3-1 3 0 3-1 3-1-21 83-24 5-24 15-24-1-24 4-24 7-24 4-24 5-24 7-24-3-24 7-24 3-24-1-24 0-24-4-24 0-24-10-24-2-24-2-24-3-24-6-24-11-24-4-24-8-24-13-24-6-24-11-24-8-24-6-24-14-24-7-24-14-24-3-24-11-24-6-24-8z" fill="#8a8a8a"/><use href="#r37" transform="translate(0,2.5)" fill="none" stroke="#d4d4d4" stroke-width="3" stroke-opacity="0.5"/><use href="#r37" fill="none" stroke="#000" stroke-width="1.4" stroke-opacity="0.85" stroke-dasharray="62 4 117 20 68 8 64 9 137 17"/><use href="#r38" transform="translate(0,-3)" fill="none" stroke="#000" stroke-width="6.5" stroke-opacity="0.35" filter="url(#sh)"/><path d="M460,515l3 2 3 3 3 3 3 3 3 0 3-4 3 2 3 3 3 1 3-1 3 0 3-1 3 3 3 4 3 3 3 3 3 2 3 2 3-1 3 0 3-1 3 2 3 2 3 3 3-1 3 0 3 0 3 0 3-1 3-1 3 1 3 3 3-1 3 4 3 3 3 3 3 3 3-2 3 0 3 4 3 3 3 3 3-4 3-2 3-1 3 3 3 2 3-1 3 0 3 0 3 3 3 3 3-1 3 0 3 2 3 4 3 4 3 2 3 3 3 3 3 2 3-1 3 1 3-1 3 0 3 0 3 1 3 1 3 0 3-1 3 0 3 0 3 3 3 3 3 0 3-1 3 4 3 3 3-3 3 3 3 2 3 1 3-1 3 3 3 3 3-1 3-1 3 4 3 4 3 0 3-1 3-1 3 1 3 4 3 3 3 3 3-2 3-1 3 0 3 0 3 4 3 3 3 1 3 0 3 2 3 2 3 3 3 2 3 4 3 1 3 4 3 1 3 0 3 2 3-2 3 1 3-1 3 0 3-1 3 1 3-1 3 0 3 4 3 1 3 3 3 3 3 2 3 2 3 0 3 1 3-1 3 0 3 1 3 1 3 2 3 1 3-1 3 0 3-1 3-1 3-1 3-1 3-2 3-2 3 4 3 2 3 1 3 2 3 2 3 2 3-3 3 0 3 3 3-1 3-3 3 1 3 1 3 0 3-2 3-2 3-2 3 2 3 3 3 2 3 4 3-2 3-2 3 2 3 3 3 4 3 0 3-1 3-2 3-3 3 0 3 2 3 3 3 0 3-1 3 2 3 1 3 2 3 1 3 3 3 1 3-2 3-1 3-1 3 1 3 1 3 2 3 0 3-1 3-1 3-2 3-1 3-1 3-1 3-1 3-2 3 2 3 0 3 0 3-1 3 1 3-1 3 0 3 1 3-1 3-2 3-1 3 0 3-1 3-3 3-2 3-2 3-3 3-2 3 0 3 3 3 0 3 3 3-3 3-1 3 2 3 1 3 2 3 0 3-2 3-3 3-3 3-4 3-1 3-1 3 4 3 0 3-1 3 1 3 0 3-3 3-1 3 3 3-1 3-1 3 0 3 1 3 1 3 0 3 0 3-2 3-3 3-1 3 0 3 1 3-1 3-2 3-2 3 0 3-1 3 1 3-4 3-3 3-4 3 0 3-5 3-5 3 3 3 2 3-3 3-2 3-2 3 0 3 1 3 1 3 0 3 0 3 0 3 0 3-2 3-2 3-3 3-4 3 0 3-1 3 2 3-2 3-3-21 92-24 2-24 12-24 13-24 8-24-1-24 1-24 6-24 3-24 12-24-2-24 11-24-2-24-11-24-3-24-7-24 3-24-9-24 8-24-5-24-14-24 0-24-19-24-5-24-13-24-10-24-12-24 0-24-14-24-11-24-3-24-14-24-1-24-9-24-12-24-12z" fill="#8a8a8a"/><use href="#r38" transform="translate(0,2.5)" fill="none" stroke="#d4d4d4" stroke-width="3" stroke-opacity="0.5"/><use href="#r38" fill="none" stroke="#000" stroke-width="1.4" stroke-opacity="0.85" stroke-dasharray="66 13 42 9 131 20 66 5 35 21"/><use href="#r39" transform="translate(0,-3)" fill="none" stroke="#000" stroke-width="6.6" stroke-opacity="0.36" filter="url(#sh)"/><path d="M460,524l3 1 3 2 3 1 3 1 3-1 3 0 3 1 3-1 3 0 3 2 3-1 3 0 3-1 3-1 3 3 3 2 3 4 3 1 3 2 3 0 3 2 3-1 3-3 3 4 3 2 3 3 3 3 3 4 3 3 3 0 3 0 3 0 3 1 3 0 3 1 3-3 3 2 3 3 3-1 3-1 3-1 3 2 3 1 3 3 3 2 3-1 3-1 3 0 3 1 3 0 3 5 3 4 3 3 3 4 3 1 3 3 3 1 3 2 3 1 3 3 3-1 3 0 3 0 3-1 3 1 3 0 3 2 3 1 3 3 3 2 3 0 3-1 3 0 3 2 3 1 3-1 3 0 3-1 3 2 3 3 3 3 3 3 3 2 3-1 3 0 3-1 3 0 3 0 3 3 3 2 3 4 3 2 3 2 3 2 3 1 3 1 3 2 3-1 3-1 3 0 3-1 3 2 3 3 3 1 3-1 3 3 3 2 3 0 3-1 3 3 3 3 3 3 3 2 3 2 3 3 3 2 3-2 3-4 3 1 3 5 3 2 3 1 3-1 3-2 3 1 3 3 3 3 3 3 3 2 3 0 3 0 3-1 3 1 3 2 3 2 3 1 3-1 3 1 3 1 3 1 3 2 3 1 3 2 3-1 3 0 3-1 3-1 3 0 3 3 3 1 3 2 3 2 3 2 3 1 3 1 3 2 3-1 3 0 3 0 3-1 3 0 3 1 3 0 3 2 3 0 3 1 3 0 3 2 3-1 3-1 3 0 3-2 3-2 3-4 3 3 3 4 3 0 3 3 3 1 3 3 3-1 3 1 3-1 3 1 3-1 3-2 3-1 3-1 3-1 3-1 3 1 3 2 3 0 3 2 3 0 3-1 3 1 3 0 3-1 3-2 3-3 3-2 3 2 3-1 3-5 3-4 3 2 3 2 3 2 3 2 3-3 3-1 3-1 3 1 3-2 3-3 3-1 3-3 3-1 3-3 3 1 3 2 3 0 3-3 3 2 3 1 3 2 3-2 3-2 3-2 3-2 3 1 3-2 3 4 3-3 3-3 3-2 3-1 3 2 3 2 3 2 3 1 3 0 3-1 3-2 3-3 3 0 3 1 3-1 3-3 3-3 3-3 3-1 3-3 3-3 3 0 3 0 3 0 3 1 3-1 3-2 3 2 3-4 3-3 3-3 3-3 3-3 3 0 3 1 3 2 3 1 3 1 3 2 3 1 3-2 3-3 3-2 3-2 3 0 3-3 3-4 3-1 3-2 3 0 3 0 3 0 3 0-21 89-24 9-24 3-24 7-24 18-24 1-24 3-24 3-24 8-24 5-24 8-24 1-24 4-24-6-24 2-24-5-24-5-24-5-24-6-24-8-24-9-24-10-24-12-24-4-24-18-24-6-24-5-24-8-24-6-24-21-24-4-24-2-24-16-24-9-24-3-24-5z" fill="#8a8a8a"/><use href="#r39" transform="translate(0,2.5)" fill="none" stroke="#d4d4d4" stroke-width="3" stroke-opacity="0.5"/><use href="#r39" fill="none" stroke="#000" stroke-width="1.7" stroke-opacity="0.85" stroke-dasharray="69 14 76 20 109 16 119 9 49 7"/><use href="#r40" transform="translate(0,-3)" fill="none" stroke="#000" stroke-width="6.7" stroke-opacity="0.36" filter="url(#sh)"/><path d="M460,514l3 2 3 2 3 3 3 2 3 3 3-1 3 0 3 1 3 3 3 2 3 3 3 4 3 1 3 1 3-1 3 1 3-1 3 1 3 0 3 0 3 1 3 2 3 2 3 2 3 1 3 2 3 0 3-1 3-2 3 2 3 0 3-1 3 1 3 3 3 2 3 3 3 3 3 3 3 1 3-1 3 1 3-1 3-2 3-1 3 1 3 3 3 0 3-1 3 0 3 2 3 4 3 1 3-2 3 5 3 5 3 3 3 1 3 0 3-2 3-1 3 1 3 0 3 2 3 3 3 1 3 3 3 2 3 2 3-1 3 1 3 1 3 3 3 2 3 0 3-2 3-2 3 3 3 5 3 2 3 5 3 3 3 3 3 1 3-1 3-1 3-1 3-2 3 4 3 2 3-3 3 1 3 0 3-2 3 2 3 3 3 5 3 1 3-1 3-2 3 6 3 5 3 6 3 1 3-4 3-3 3 3 3 6 3 2 3-1 3-2 3-4 3 5 3 0 3 1 3 3 3 1 3 0 3 3 3 2 3 2 3 2 3-1 3-1 3 0 3-2 3 0 3 4 3 2 3 2 3 3 3 1 3-2 3-1 3 3 3 3 3 1 3-2 3-1 3-3 3 0 3 6 3 3 3 0 3 0 3 3 3 2 3 3 3 2 3 2 3 1 3-1 3 0 3-1 3 0 3 0 3 2 3 2 3-1 3-2 3-1 3-1 3 0 3 2 3 2 3 3 3 2 3 3 3 2 3 0 3-5 3-3 3 6 3 3 3-2 3 0 3 3 3 1 3 1 3-1 3-1 3-1 3-2 3-2 3 1 3 2 3 1 3 3 3 3 3 2 3 0 3-5 3 1 3 3 3 2 3-2 3-5 3-5 3 4 3 5 3-1 3-2 3-2 3-3 3-1 3-4 3 1 3 2 3 0 3-6 3-3 3 2 3-2 3 2 3 1 3-3 3-3 3 2 3 0 3-1 3 1 3 1 3 2 3 0 3 0 3-2 3-2 3-1 3-3 3-2 3-3 3 0 3-1 3 1 3 0 3-1 3-4 3-3 3 0 3 1 3 2 3 1 3-1 3-2 3-2 3 0 3 1 3-2 3-6 3 4 3 3 3-2 3-2 3-3 3-2 3-2 3 0 3 0 3-1 3-2 3-2 3-2 3-3 3-1 3-1 3-3 3-2 3-4 3-2 3-2 3-1 3 2 3 1 3 2 3 1 3 0 3-2 3-4 3-3 3-2 3-2 3 2 3 0 3-4 3 2 3 1 3 3 3 0-21 78-24 10-24 11-24 11-24 4-24 12-24 4-24 14-24-6-24 13-24 8-24 0-24-8-24 5-24-2-24-13-24 0-24-11-24-4-24-9-24-4-24-12-24-6-24-13-24-8-24-5-24-13-24-12-24-4-24-19-24 1-24-15-24-2-24-6-24-14-24-12z" fill="#8a8a8a"/><use href="#r40" transform="translate(0,2.5)" fill="none" stroke="#d4d4d4" stroke-width="3" stroke-opacity="0.5"/><use href="#r40" fill="none" stroke="#000" stroke-width="1.2" stroke-opacity="0.85" stroke-dasharray="118 16 140 20 32 17 71 21 103 20"/><use href="#r41" transform="translate(0,-3)" fill="none" stroke="#000" stroke-width="6.8" stroke-opacity="0.37" filter="url(#sh)"/><path d="M460,517l3 0 3-2 3 2 3 2 3 4 3-2 3-1 3 6 3 3 3 2 3-2 3 1 3 5 3 2 3-3 3-1 3-1 3 3 3 3 3 4 3 2 3-1 3-2 3-1 3 1 3 5 3-1 3 0 3-1 3 0 3 4 3 2 3 1 3-1 3-1 3 2 3 1 3 4 3 3 3 0 3 3 3-1 3-3 3 1 3 4 3 4 3 4 3 2 3 2 3 2 3 2 3 2 3-1 3-1 3 0 3-2 3-2 3 2 3 4 3 4 3 4 3 3 3-1 3 0 3 0 3-1 3 1 3 2 3 2 3 0 3 1 3 0 3 0 3 1 3 2 3 2 3 3 3 2 3-1 3 5 3-1 3-1 3-1 3-2 3-1 3 2 3 4 3 2 3 4 3 3 3-1 3-1 3-1 3 1 3 3 3 1 3-3 3 5 3 3 3 3 3-2 3 3 3 0 3 0 3 3 3 3 3 3 3 3 3 3 3 3 3 0 3 2 3 1 3 1 3 1 3 2 3-1 3-3 3-3 3 3 3 5 3 5 3 2 3 1 3 1 3 0 3 0 3 0 3-1 3 0 3 0 3 0 3 2 3 1 3 2 3 2 3 2 3 2 3 0 3 0 3-2 3 0 3-2 3 0 3 4 3 3 3-3 3 0 3 2 3 2 3 4 3 3 3 1 3-1 3 0 3 0 3-1 3 0 3-1 3 2 3 3 3 2 3 2 3 1 3 2 3-2 3 1 3 2 3 3 3 3 3 3 3-2 3-1 3 0 3-1 3 0 3 0 3-2 3-1 3-2 3 2 3 2 3 2 3 2 3 1 3 1 3 2 3 0 3 1 3-4 3-3 3 1 3 4 3 3 3 2 3-1 3 1 3-2 3-2 3-2 3-2 3-2 3-3 3-2 3-2 3-3 3 1 3 0 3 1 3 2 3 1 3-1 3 0 3 1 3 0 3 1 3-2 3-6 3-4 3-4 3 0 3 2 3 3 3 0 3-2 3-2 3-2 3-3 3-3 3 0 3 0 3 0 3-1 3 1 3-1 3-3 3-2 3-5 3-4 3 3 3 4 3 2 3-2 3-1 3-2 3-3 3-3 3-4 3-4 3 0 3 3 3-2 3-1 3 0 3 2 3-5 3-4 3-1 3 1 3 1 3 1 3-3 3-4 3-3 3 1 3 1 3 1 3-3 3-3 3-3 3-3 3-3 3-2 3 1 3 2 3 1 3 1 3 1 3 2 3-6 3-6 3 0 3 2 3-3 3-3 3 0 3 1-21 91-24 0-24 12-24 13-24 6-24 9-24 12-24 12-24 11-24-5-24 13-24-3-24 1-24-3-24-5-24-11-24 0-24-15-24 0-24-6-24-14-24-1-24-20-24-9-24-9-24-2-24-14-24-4-24-15-24-4-24-14-24-9-24-10-24-7-24-7-24-9z" fill="#8a8a8a"/><use href="#r41" transform="translate(0,2.5)" fill="none" stroke="#d4d4d4" stroke-width="3" stroke-opacity="0.5"/><use href="#r41" fill="none" stroke="#000" stroke-width="1.8" stroke-opacity="0.85" stroke-dasharray="53 19 60 5 119 16 119 15 52 21"/><use href="#r42" transform="translate(0,-3)" fill="none" stroke="#000" stroke-width="6.9" stroke-opacity="0.37" filter="url(#sh)"/><path d="M460,514l3 5 3 1 3-2 3-1 3 0 3 2 3 0 3 5 3-1 3-1 3 0 3 3 3 3 3 2 3 3 3 3 3-1 3-5 3 0 3 7 3 6 3 2 3 1 3 0 3 0 3 1 3 0 3 0 3 0 3 1 3 0 3 7 3-2 3-3 3 0 3 5 3 1 3 1 3 3 3 2 3 1 3-1 3 0 3 0 3 0 3 0 3 3 3 3 3 2 3 1 3-1 3 0 3-1 3 0 3 2 3 4 3 2 3 2 3-2 3-1 3 5 3 4 3 4 3 3 3 0 3 0 3 0 3-1 3 2 3-1 3 2 3 2 3 3 3 0 3 1 3 4 3 3 3 0 3-1 3-1 3-2 3-1 3 3 3 2 3 2 3 0 3-4 3 5 3 5 3-1 3 3 3 3 3 2 3 3 3 2 3 2 3 1 3 1 3 1 3 0 3 2 3 0 3 1 3 0 3 2 3 1 3 2 3 2 3 3 3 2 3 1 3 3 3 1 3 0 3 2 3 1 3 0 3 2 3 1 3 1 3 2 3 1 3 0 3-1 3-2 3-3 3 1 3 0 3-1 3-2 3 3 3 2 3 4 3-1 3 2 3 2 3 3 3-2 3-3 3 5 3 1 3 2 3 1 3 1 3 0 3 0 3 2 3 2 3 3 3 2 3 0 3 1 3 1 3 1 3-1 3 0 3 0 3 0 3 0 3 2 3 3 3 2 3 3 3 3 3 2 3 3 3 3 3 3 3 1 3 0 3-1 3 0 3-2 3 1 3-2 3 0 3 0 3 3 3 1 3-1 3-2 3 1 3 2 3 0 3-3 3 0 3 2 3 2 3 3 3 2 3 2 3 2 3 0 3-2 3-2 3-1 3-1 3-2 3-3 3-1 3 0 3 0 3 2 3 0 3-6 3-1 3 1 3-3 3 0 3-2 3-3 3-3 3 0 3 0 3 0 3 1 3 1 3-1 3 2 3-2 3-3 3 0 3 0 3 2 3 0 3-1 3-2 3-3 3-1 3-3 3-3 3-2 3-3 3-3 3-1 3-4 3 1 3 1 3 2 3-4 3-3 3-1 3-5 3 1 3 1 3 1 3 1 3 0 3 2 3-2 3-1 3 0 3-1 3-1 3-5 3-5 3-6 3 2 3 2 3 4 3-1 3-1 3-1 3-2 3-2 3-1 3-1 3-6 3-5 3-5 3 3 3 3 3 0 3-3 3-3 3-4 3-3 3-1 3 1 3 1 3 1 3 0 3 0 3-1 3-2 3-2 3 1-21 85-24 12-24 14-24 3-24 14-24 4-24 11-24 15-24 1-24 8-24 6-24 13-24-11-24-4-24 3-24-22-24-3-24-10-24-8-24-8-24 2-24-9-24-15-24-6-24-19-24-6-24-9-24-4-24-17-24-7-24-6-24-7-24-9-24-10-24-12-24-10z" fill="#8a8a8a"/><use href="#r42" transform="translate(0,2.5)" fill="none" stroke="#d4d4d4" stroke-width="3" stroke-opacity="0.5"/><use href="#r42" fill="none" stroke="#000" stroke-width="1.4" stroke-opacity="0.85" stroke-dasharray="100 15 136 5 56 8 70 5 111 9"/><path d="M460,514l3 1 3 1 3 4 3 2 3 1 3 1 3-3 3 0 3 1 3 0 3 3 3 3 3 3 3 0 3 0 3-1 3 1 3-1 3 2 3 3 3 2 3 4 3 3 3 2 3 2 3 1 3 1 3 0 3 1 3 1 3 3 3 1 3 1 3 2 3 1 3-2 3-1 3-2 3-3 3-2 3 5 3 3 3 2 3-1 3 1 3 2 3 3 3 2 3 3 3-1 3 0 3-2 3 2 3 2 3 2 3 2 3 3 3 1 3 3 3 2 3 3 3 2 3 0 3 0 3 0 3 1 3 0 3 0 3 4 3 4 3 2 3 2 3 3 3 2 3 2 3-1 3-2 3-3 3-4 3 2 3 5 3 4 3-3 3-3 3-2 3 3 3 4 3 1 3 0 3 1 3 3 3-1 3 0 3 0 3 3 3 4 3 3 3 2 3 1 3 4 3 3 3 3 3 2 3 2 3 1 3 2 3-1 3-1 3-1 3-1 3-3 3 3 3 5 3 3 3 5 3 2 3-1 3-1 3-1 3 4 3-1 3 1 3-1 3 0 3-1 3 2 3-1 3 3 3 5 3-1 3 0 3-1 3-1 3 2 3 1 3 0 3-1 3 1 3 1 3 4 3 1 3 3 3 3 3 2 3 0 3-3 3-3 3 2 3 4 3 0 3 2 3 0 3 3 3 0 3-1 3 1 3 2 3 3 3 3 3 3 3 0 3-1 3 0 3 3 3 1 3-2 3 0 3 3 3 3 3 2 3 3 3 3 3 4 3 2 3 3 3 2 3 1 3 1 3-2 3-1 3-1 3-1 3 2 3 2 3 2 3 1 3 2 3 2 3 1 3 0 3 0 3-1 3-2 3-2 3-2 3 1 3-2 3-1 3-2 3-3 3-1 3 1 3-1 3 1 3-2 3-6 3-5 3 4 3 3 3 4 3-2 3-3 3-3 3-2 3-3 3-3 3-2 3-4 3 1 3 1 3 2 3-2 3-2 3-1 3-1 3-2 3-2 3 1 3-1 3 0 3 0 3-1 3-3 3-3 3-5 3-3 3-4 3 2 3 1 3 1 3 1 3 0 3-2 3-5 3 1 3-2 3-4 3-2 3-2 3-2 3-2 3-4 3 0 3 2 3 2 3 0 3 0 3-2 3 0 3 0 3 0 3 0 3 0 3 0 3-2 3-3 3-1 3-3 3-2 3-2 3-2 3-3 3-2 3-1 3 1 3-1 3 0 3-2 3-6 3-5 3 3 3 4 3 4 3 1 3-1 3-1 3-1-21 74-24 16-24 17-24 3-24 5-24 14-24 13-24 6-24 7-24 9-24 10-24 12-24-6-24-2-24-22-24-3-24-14-24-2-24-14-24-6-24-2-24-16-24 2-24-21-24-10-24-8-24 1-24-13-24-14-24-8-24-17-24 6-24-10-24-17-24-9-24-6z" fill="#8a8a8a"/>
</g>
<g transform="translate(464,551) skewY(20.32)"><rect x="0" y="-42" width="566.5" height="42" fill="url(#wg)"/></g>
<g transform="translate(1030.5,760.5) skewY(-18.01)"><polygon points="0,-40 285.5,-58 285.5,0 0,0" fill="url(#wg)"/></g>
<g filter="url(#bl)"><path d="M1248,649V689" stroke="#4a7a6a" stroke-width="4" stroke-opacity="0.25"/><path d="M809,658V678" stroke="#0e4a52" stroke-width="2" stroke-opacity="0.31"/><path d="M813,660V680" stroke="#2a6a6a" stroke-width="4" stroke-opacity="0.34"/><path d="M1116,700V732" stroke="#0e4a52" stroke-width="2" stroke-opacity="0.27"/><path d="M803,658V676" stroke="#0e4a52" stroke-width="3" stroke-opacity="0.28"/><path d="M1310,637V669" stroke="#0e4a52" stroke-width="2" stroke-opacity="0.28"/><path d="M1244,656V690" stroke="#4a7a6a" stroke-width="3" stroke-opacity="0.24"/><path d="M643,603V617" stroke="#4a7a6a" stroke-width="4" stroke-opacity="0.30"/><path d="M798,660V674" stroke="#4a7a6a" stroke-width="2" stroke-opacity="0.30"/><path d="M761,642V660" stroke="#4a7a6a" stroke-width="3" stroke-opacity="0.32"/><path d="M720,625V645" stroke="#4a7a6a" stroke-width="4" stroke-opacity="0.21"/><path d="M1248,648V689" stroke="#4a7a6a" stroke-width="3" stroke-opacity="0.27"/><path d="M1107,706V735" stroke="#4a7a6a" stroke-width="4" stroke-opacity="0.25"/><path d="M647,605V618" stroke="#2a6a6a" stroke-width="2" stroke-opacity="0.35"/><path d="M661,610V623" stroke="#0e4a52" stroke-width="4" stroke-opacity="0.18"/><path d="M1168,683V715" stroke="#0e4a52" stroke-width="3" stroke-opacity="0.30"/><path d="M727,634V648" stroke="#0e4a52" stroke-width="4" stroke-opacity="0.22"/><path d="M886,690V707" stroke="#4a7a6a" stroke-width="2" stroke-opacity="0.16"/><path d="M664,607V625" stroke="#4a7a6a" stroke-width="2" stroke-opacity="0.31"/><path d="M1007,731V752" stroke="#0e4a52" stroke-width="2" stroke-opacity="0.19"/><path d="M1219,666V698" stroke="#2a6a6a" stroke-width="2" stroke-opacity="0.16"/><path d="M564,561V588" stroke="#4a7a6a" stroke-width="3" stroke-opacity="0.32"/><path d="M931,705V724" stroke="#0e4a52" stroke-width="3" stroke-opacity="0.33"/><path d="M605,581V603" stroke="#2a6a6a" stroke-width="3" stroke-opacity="0.23"/><path d="M548,564V582" stroke="#2a6a6a" stroke-width="3" stroke-opacity="0.31"/><path d="M471,531V553" stroke="#0e4a52" stroke-width="2" stroke-opacity="0.29"/><path d="M572,567V591" stroke="#2a6a6a" stroke-width="2" stroke-opacity="0.19"/><path d="M764,646V662" stroke="#4a7a6a" stroke-width="2" stroke-opacity="0.25"/><path d="M593,578V598" stroke="#0e4a52" stroke-width="4" stroke-opacity="0.28"/><path d="M573,574V591" stroke="#4a7a6a" stroke-width="3" stroke-opacity="0.32"/><path d="M1007,734V752" stroke="#4a7a6a" stroke-width="3" stroke-opacity="0.30"/><path d="M1170,678V714" stroke="#4a7a6a" stroke-width="4" stroke-opacity="0.34"/><path d="M1101,709V737" stroke="#2a6a6a" stroke-width="2" stroke-opacity="0.26"/><path d="M1251,658V688" stroke="#0e4a52" stroke-width="3" stroke-opacity="0.25"/><path d="M955,711V732" stroke="#2a6a6a" stroke-width="3" stroke-opacity="0.35"/><path d="M1068,721V748" stroke="#0e4a52" stroke-width="3" stroke-opacity="0.31"/><path d="M613,590V606" stroke="#2a6a6a" stroke-width="2" stroke-opacity="0.24"/><path d="M500,543V564" stroke="#4a7a6a" stroke-width="2" stroke-opacity="0.16"/><path d="M736,636V651" stroke="#4a7a6a" stroke-width="2" stroke-opacity="0.16"/><path d="M611,580V605" stroke="#4a7a6a" stroke-width="4" stroke-opacity="0.18"/><path d="M1293,631V674" stroke="#0e4a52" stroke-width="3" stroke-opacity="0.34"/><path d="M625,584V610" stroke="#0e4a52" stroke-width="3" stroke-opacity="0.35"/><path d="M1161,681V717" stroke="#0e4a52" stroke-width="4" stroke-opacity="0.21"/><path d="M1151,690V721" stroke="#4a7a6a" stroke-width="4" stroke-opacity="0.21"/><path d="M765,643V662" stroke="#4a7a6a" stroke-width="3" stroke-opacity="0.19"/><path d="M932,705V724" stroke="#4a7a6a" stroke-width="4" stroke-opacity="0.29"/><path d="M940,705V727" stroke="#2a6a6a" stroke-width="3" stroke-opacity="0.29"/><path d="M1267,651V683" stroke="#4a7a6a" stroke-width="2" stroke-opacity="0.33"/><path d="M610,585V605" stroke="#0e4a52" stroke-width="4" stroke-opacity="0.19"/><path d="M569,563V590" stroke="#0e4a52" stroke-width="2" stroke-opacity="0.23"/><path d="M787,654V670" stroke="#4a7a6a" stroke-width="2" stroke-opacity="0.22"/><path d="M693,617V635" stroke="#4a7a6a" stroke-width="4" stroke-opacity="0.34"/><path d="M1225,657V696" stroke="#4a7a6a" stroke-width="2" stroke-opacity="0.21"/><path d="M1285,645V677" stroke="#2a6a6a" stroke-width="3" stroke-opacity="0.26"/><path d="M1063,718V749" stroke="#0e4a52" stroke-width="2" stroke-opacity="0.20"/><path d="M1256,647V686" stroke="#2a6a6a" stroke-width="2" stroke-opacity="0.22"/><path d="M884,681V706" stroke="#0e4a52" stroke-width="2" stroke-opacity="0.34"/><path d="M824,664V684" stroke="#4a7a6a" stroke-width="2" stroke-opacity="0.33"/><path d="M787,648V670" stroke="#0e4a52" stroke-width="2" stroke-opacity="0.32"/><path d="M644,591V617" stroke="#2a6a6a" stroke-width="4" stroke-opacity="0.24"/><path d="M1010,734V753" stroke="#0e4a52" stroke-width="3" stroke-opacity="0.20"/><path d="M1291,643V675" stroke="#0e4a52" stroke-width="4" stroke-opacity="0.21"/><path d="M759,637V660" stroke="#2a6a6a" stroke-width="4" stroke-opacity="0.34"/><path d="M999,724V749" stroke="#2a6a6a" stroke-width="4" stroke-opacity="0.25"/><path d="M513,545V569" stroke="#2a6a6a" stroke-width="2" stroke-opacity="0.16"/><path d="M549,561V582" stroke="#2a6a6a" stroke-width="3" stroke-opacity="0.20"/><path d="M766,646V663" stroke="#2a6a6a" stroke-width="3" stroke-opacity="0.19"/><path d="M1018,737V756" stroke="#2a6a6a" stroke-width="3" stroke-opacity="0.25"/><path d="M1285,636V677" stroke="#0e4a52" stroke-width="3" stroke-opacity="0.31"/><path d="M1114,703V733" stroke="#2a6a6a" stroke-width="2" stroke-opacity="0.34"/></g>
</g>
<polyline points="464.0,449.0 467.3,448.4 470.6,447.8 474.0,447.6 477.3,447.4 480.6,447.8 484.0,447.6 487.5,446.4 490.9,446.1 494.3,446.1 497.4,446.9 500.5,447.3 503.6,448.6 506.7,448.6 509.8,449.5 513.5,449.2 517.3,449.5 521.0,449.5 522.9,445.9 524.8,444.1 526.6,440.3 528.5,437.4 530.4,434.9 532.2,432.2 534.1,428.5 536.0,426.6 537.8,424.1 539.6,420.4 541.5,418.1 544.4,419.6 547.2,420.0 550.1,421.2 552.7,419.3 555.3,416.9 558.7,416.2 562.1,416.0 567.3,415.2 570.5,414.8 573.8,414.6 577.0,414.2 580.2,415.2 583.6,416.2 587.1,419.2 590.5,420.3 593.9,421.9 597.4,423.5 600.8,425.5 604.2,425.6 607.6,424.9 611.0,424.6 614.5,424.1 617.9,422.0 621.3,420.7 624.8,420.3 628.2,419.6 631.7,417.3 635.1,416.9 637.4,415.2 639.7,412.9 642.0,410.9 644.3,413.5 646.5,415.4 648.8,416.9 654.0,415.2 656.0,417.5 658.0,418.8 660.0,422.0 662.6,419.5 665.1,418.6 667.7,417.6 670.3,414.8 672.9,413.8 675.4,411.6 678.0,410.9 681.0,409.7 684.0,408.6 687.0,408.5 690.0,408.3 692.1,405.5 694.3,402.4 696.5,400.8 698.6,397.9 701.5,399.6 704.3,402.4 707.2,405.6 709.8,402.4 712.3,400.1 714.9,397.9 717.0,395.4 719.0,392.0 721.1,389.8 723.1,387.4 725.2,384.2 728.6,383.4 732.1,384.6 735.5,384.2 738.5,387.2 741.5,390.2 745.1,390.0 748.8,389.3 752.5,388.6 756.1,388.5 759.2,387.1 762.4,386.5 765.5,386.7 767.6,383.9 769.8,381.7 772.0,379.6 774.1,378.2 774.9,374.4 775.7,371.8 776.4,369.1 777.2,366.0 778.0,362.9 778.8,358.6 779.6,356.6 780.4,352.5 781.1,349.2 781.9,346.4 782.7,343.8 783.7,340.6 784.8,336.7 785.8,333.9 786.8,331.1 787.9,328.7 788.9,324.9 789.9,321.8 790.9,318.7 792.0,315.1 793.0,312.9 795.3,310.4 797.6,307.6 799.9,304.3 800.8,301.5 801.6,298.1 802.5,295.3 803.3,292.1 804.2,289.7 808.5,290.6 810.2,286.8 811.9,282.9 812.6,285.9 813.3,288.4 814.0,292.3 814.8,295.1 815.5,297.2 816.2,300.9 816.8,304.3 817.5,307.3 818.1,309.7 818.8,313.0 819.4,316.9 820.0,318.9 820.7,322.7 821.3,326.6 822.0,328.7 822.6,332.2 823.3,336.0 823.9,338.7 825.9,341.4 827.9,343.5 829.9,345.5 832.5,343.8 833.1,340.7 833.8,338.3 834.4,334.2 835.0,332.2 835.7,328.5 836.3,325.9 837.0,322.8 837.6,319.8 839.2,316.3 840.7,314.0 842.3,311.0 843.8,308.7 845.4,305.2 846.8,308.2 848.1,310.7 849.5,313.6 850.8,317.3 852.2,319.8 853.7,322.8 855.2,326.7 856.7,330.2 858.2,333.5 859.6,331.2 861.1,327.1 862.5,324.9 864.0,327.8 865.5,329.8 867.0,333.3 868.5,336.1 872.0,338.7 875.4,341.2 877.1,344.2 878.8,347.2 880.5,349.0 882.2,352.8 884.0,354.8 885.7,357.6 887.4,360.0 889.1,363.6 891.3,361.4 893.6,358.5 895.8,356.9 898.1,355.4 900.3,353.3 902.4,356.2 904.6,358.0 906.8,361.7 908.9,363.9 911.1,366.2 913.2,369.6 915.4,365.9 917.5,361.8 920.5,363.7 923.5,365.3 924.6,361.7 925.7,358.5 926.8,355.4 927.8,352.1 928.9,349.0 930.0,345.5 931.2,342.0 932.4,337.4 933.6,334.3 938.6,333.6 939.1,329.4 939.6,326.2 940.1,323.3 940.7,320.4 941.2,317.8 941.7,313.6 942.2,310.7 946.5,313.6 948.3,315.8 950.1,318.7 952.0,322.0 953.8,324.0 955.6,326.2 957.4,329.5 959.3,332.5 961.1,334.8 962.9,337.2 964.6,340.2 966.2,343.1 967.9,347.2 971.0,348.8 974.1,350.2 977.2,352.9 980.1,355.0 983.0,358.7 985.0,360.7 987.1,363.5 989.1,365.6 991.2,367.3 993.2,370.4 995.3,371.4 997.3,374.4 1001.5,373.8 1005.8,374.4 1009.4,372.4 1013.0,371.5 1015.4,369.5 1017.7,368.1 1020.1,365.8 1025.9,365.8 1027.0,362.3 1028.0,359.9 1029.1,357.0 1030.2,353.2 1031.2,350.7 1032.3,347.2 1035.5,349.1 1038.7,350.1 1044.5,349.4 1047.3,350.2 1050.2,351.5 1053.8,351.8 1057.3,353.6 1059.7,350.4 1062.1,348.2 1064.5,346.5 1070.2,347.9 1073.8,348.7 1077.4,350.1 1079.3,351.5 1081.2,354.4 1083.1,357.2 1087.4,355.9 1091.7,355.1 1094.9,353.5 1098.1,352.9 1100.9,355.2 1103.8,357.2 1105.8,359.6 1107.8,362.1 1109.7,364.7 1111.7,367.2 1114.0,370.0 1116.3,373.0 1119.0,369.2 1121.8,366.0 1124.7,367.6 1127.6,370.6 1130.5,373.0 1131.7,374.9 1132.8,378.6 1136.0,377.9 1139.1,378.6 1142.3,379.3 1145.2,380.0 1148.0,382.2 1150.9,383.3 1154.3,382.0 1157.7,381.9 1161.1,381.7 1163.9,383.0 1166.7,383.7 1169.4,385.5 1172.2,386.4 1175.1,387.4 1177.9,389.3 1180.8,391.9 1185.2,389.6 1186.1,392.0 1187.0,395.1 1187.8,398.3 1188.7,401.4 1190.3,403.3 1191.8,406.5 1193.4,409.2 1197.3,410.8 1198.9,414.1 1200.5,417.1 1202.1,414.2 1203.6,411.4 1205.2,407.3 1206.7,405.3 1208.3,402.2 1210.4,405.0 1212.4,407.8 1214.5,409.4 1216.5,412.0 1218.6,415.5 1220.1,419.5 1224.0,419.7 1228.0,419.5 1229.6,415.6 1231.2,411.6 1234.3,415.5 1237.4,414.0 1240.6,414.0 1242.9,411.6 1245.3,408.6 1247.7,405.7 1250.0,402.9 1251.9,406.3 1253.7,409.2 1255.6,412.4 1258.7,410.3 1261.8,409.2 1265.2,407.3 1268.7,406.7 1272.1,406.1 1272.9,409.1 1273.7,411.4 1274.4,414.3 1275.2,417.2 1276.0,421.0 1279.1,421.0 1282.3,421.9 1285.4,421.6 1288.6,420.7 1291.7,421.8 1294.1,424.6 1296.4,428.2 1298.8,431.3 1301.9,430.1 1305.1,430.5 1307.5,435.2 1311.8,435.5 1316.0,435.2" fill="none" stroke="#1a160c" stroke-width="1" stroke-opacity="0.7"/>
<polygon points="464.0,550.5 1030.5,760.0 1316.0,667.0 1316.0,692.5 1030.0,790.7 464.0,574.0" fill="#12d3d5"/>
<path d="M1030.5,728 L1029,760.5 L1032,760.5z" fill="#30c8c8" opacity="0.8"/>
</svg>

<!-- status -->
<div class="a" style="left:57px;top:800px;width:1284px;height:21px;background:#fff;border-top:2px solid #8a8a8a;border-left:1px solid #aaa"></div>
<div class="a" style="left:60px;top:804px;font-size:12px;color:#8a8a8a">New center of view has been set</div>
<svg class="a" style="left:1326px;top:806px" width="14" height="14"><path d="M2,13 L13,2 M6,13 L13,6 M10,13 L13,10" stroke="#777" stroke-width="1.2"/></svg>
</body></html>
